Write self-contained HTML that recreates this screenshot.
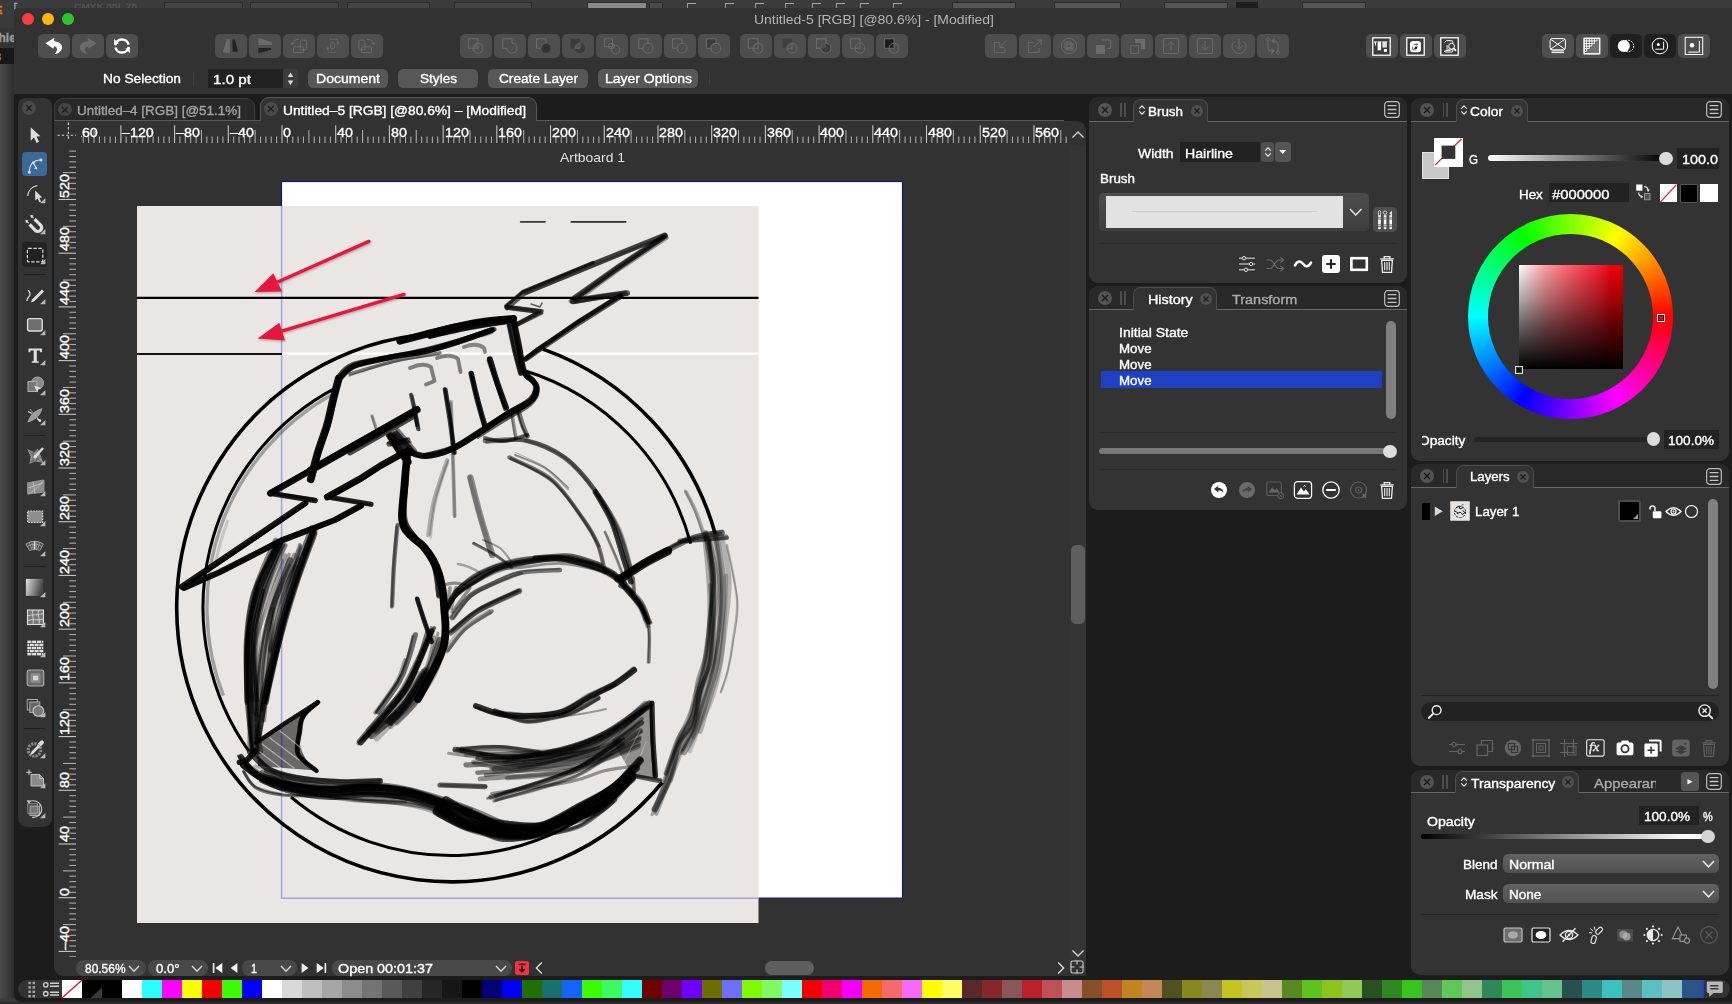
<!DOCTYPE html>
<html><head><meta charset="utf-8"><title>Untitled-5</title>
<style>
html,body{margin:0;padding:0;}
body{width:1732px;height:1004px;overflow:hidden;background:#3a3a3a;position:relative;
font-family:"Liberation Sans",sans-serif;}
div,span.t,svg{position:absolute;box-sizing:border-box;}
span.t{white-space:nowrap;display:block;-webkit-text-stroke:0.35px currentColor;}
svg{overflow:visible;}
.clip{overflow:hidden;}
</style></head><body>
<div style="left:0px;top:0px;width:1732px;height:9px;background:#3b3b3b;"></div>
<div style="left:164px;top:2px;width:79px;height:8px;background:#444;border:1px solid #2a2a2a;"></div>
<div style="left:250px;top:2px;width:89px;height:8px;background:#444;border:1px solid #2a2a2a;"></div>
<div style="left:347px;top:2px;width:83px;height:8px;background:#444;border:1px solid #2a2a2a;"></div>
<div style="left:454px;top:2px;width:78px;height:8px;background:#444;border:1px solid #2a2a2a;"></div>
<div style="left:587px;top:2px;width:60px;height:8px;background:#8a8a8a;border:1px solid #2a2a2a;"></div>
<div style="left:649px;top:2px;width:14px;height:8px;background:#4a4a4a;border:1px solid #2a2a2a;"></div>
<div style="left:952px;top:2px;width:64px;height:8px;background:#555;border:1px solid #2a2a2a;"></div>
<div style="left:1054px;top:2px;width:67px;height:8px;background:#555;border:1px solid #2a2a2a;"></div>
<div style="left:1164px;top:2px;width:64px;height:8px;background:#555;border:1px solid #2a2a2a;"></div>
<div style="left:1302px;top:2px;width:64px;height:8px;background:#555;border:1px solid #2a2a2a;"></div>
<div style="left:687px;top:3px;width:9px;height:6px;border-top:1px solid #aaa;border-left:1px solid #999;"></div>
<div style="left:725px;top:3px;width:9px;height:6px;border-top:1px solid #aaa;border-left:1px solid #999;"></div>
<div style="left:755px;top:3px;width:9px;height:6px;border-top:1px solid #aaa;border-left:1px solid #999;"></div>
<div style="left:785px;top:3px;width:9px;height:6px;border-top:1px solid #aaa;border-left:1px solid #999;"></div>
<div style="left:812px;top:3px;width:9px;height:6px;border-top:1px solid #aaa;border-left:1px solid #999;"></div>
<div style="left:836px;top:3px;width:9px;height:6px;border-top:1px solid #aaa;border-left:1px solid #999;"></div>
<div style="left:860px;top:3px;width:9px;height:6px;border-top:1px solid #aaa;border-left:1px solid #999;"></div>
<div style="left:893px;top:3px;width:9px;height:6px;border-top:1px solid #aaa;border-left:1px solid #999;"></div>
<div style="left:1236px;top:2px;width:22px;height:7px;background:#1e1e1e;"></div>
<span class="t" style="left:12px;top:1.88px;font-size:9px;line-height:9px;color:#9ab;">T</span>
<span class="t" style="left:74px;top:2.73px;font-size:8px;line-height:8px;color:#555;transform:scaleX(1.2758);transform-origin:0 0;">CMYK  55L 75</span>
<div style="left:0px;top:9px;width:14px;height:995px;background:linear-gradient(90deg,#4b4b4b 0%,#3a3a3a 55%,#2c2c2c 100%);"></div>
<div style="left:0px;top:0px;width:14px;height:28px;background:#3a3a3a;"></div>
<span class="t" style="left:-5px;top:4.69px;font-size:11px;line-height:11px;color:#e87a10;font-weight:bold;">E</span>
<div style="left:0px;top:28px;width:14px;height:20px;background:#353535;"></div>
<span class="t" style="left:-1.5px;top:31.84px;font-size:12px;line-height:12px;color:#9a9a9a;font-weight:bold;">hie</span>
<div style="left:0px;top:48px;width:14px;height:16px;background:#171717;"></div>
<span class="t" style="left:-5px;top:51.69px;font-size:11px;line-height:11px;color:#999;">3</span>
<div style="left:0px;top:998px;width:14px;height:6px;background:#3c3c3c;"></div>
<div style="left:0px;top:1001.5px;width:1732px;height:3px;background:#2c2c2c;"></div>
<div style="left:14px;top:8px;width:1730px;height:994px;background:#1c1c1c;border-radius:5px 0 0 7px;"></div>
<div style="left:14px;top:8px;width:1730px;height:86px;background:#323232;border-radius:5px 0 0 0;"></div>
<div style="left:22px;top:13px;width:12px;height:12px;background:#fc3b45;border-radius:6px;"></div>
<div style="left:42px;top:13px;width:12px;height:12px;background:#fdb416;border-radius:6px;"></div>
<div style="left:62px;top:13px;width:12px;height:12px;background:#2dc42f;border-radius:6px;"></div>
<span class="t" style="left:753.5px;top:12.60px;font-size:13px;line-height:13px;color:#b4b4b4;transform:scaleX(1.0740);transform-origin:0 0;-webkit-text-stroke:0;">Untitled-5 [RGB] [@80.6%] - [Modified]</span>
<div style="left:38px;top:34px;width:32px;height:24px;background:#4f4f4f;border-radius:5px;"></div>
<svg style="left:38px;top:34px;" width="32" height="24" viewBox="0 0 32 24"><path d="M7.6 9.3 L16.3 3.8 L16.1 7.2 C21 7.4 24.6 10.4 23.9 14.2 C23.3 17.4 20.3 19.6 16.4 20.3 C18.6 18.2 19.7 15.9 18.7 14.1 C18.1 13 17.2 12.5 16 12.3 L15.4 14.7 Z" fill="#ffffff"/></svg>
<div style="left:72px;top:34px;width:32px;height:24px;background:#4e4e4e;border-radius:5px;"></div>
<svg style="left:72px;top:34px;" width="32" height="24" viewBox="0 0 32 24"><path d="M24.4 9.3 L15.7 3.8 L15.9 7.2 C11 7.4 7.4 10.4 8.1 14.2 C8.7 17.4 11.7 19.6 15.6 20.3 C13.4 18.2 12.3 15.9 13.3 14.1 C13.9 13 14.8 12.5 16 12.3 L16.6 14.7 Z" fill="#6b6b6b"/></svg>
<div style="left:106px;top:34px;width:32px;height:24px;background:#4f4f4f;border-radius:5px;"></div>
<svg style="left:106px;top:34px;" width="32" height="24" viewBox="0 0 32 24"><path d="M9.3 11.2 A6.8 6.8 0 0 1 22.6 10.6" stroke="#ffffff" stroke-width="2.5" fill="none"/><path d="M22.7 12.9 A6.8 6.8 0 0 1 9.4 13.5" stroke="#ffffff" stroke-width="2.5" fill="none"/><path d="M8 5 L12.8 9.6 L8 10.2 Z M24 19.2 L19.3 14.6 L24 14 Z" fill="#ffffff"/></svg>
<div style="left:215px;top:34px;width:32px;height:24px;background:#4e4e4e;border-radius:5px;"></div>
<svg style="left:215px;top:34px;" width="32" height="24" viewBox="0 0 32 24"><path d="M11.7 5.1 H14.8 V19.2 L7.7 18.6 Z" fill="#6b6b6b"/><path d="M17.5 5.6 H19.9 L22.9 17.8 H17.5 Z" fill="#222"/></svg>
<div style="left:249px;top:34px;width:32px;height:24px;background:#4e4e4e;border-radius:5px;"></div>
<svg style="left:249px;top:34px;" width="32" height="24" viewBox="0 0 32 24"><path d="M9.3 3.9 L23 8.2 V11 H9.3 Z" fill="#6b6b6b"/><path d="M9.3 14.1 H22 V15.8 L9.3 19.2 Z" fill="#222"/></svg>
<div style="left:283px;top:34px;width:32px;height:24px;background:#4e4e4e;border-radius:5px;"></div>
<svg style="left:283px;top:34px;" width="32" height="24" viewBox="0 0 32 24"><rect x="17.4" y="6.2" width="6.1" height="9.6" rx="1.2" stroke="#6b6b6b" fill="none" stroke-width="1"/><rect x="10.5" y="12.8" width="10.2" height="5.8" rx="1.2" stroke="#6b6b6b" fill="none" stroke-width="1"/><path d="M15.9 5.3 C12 5.3 9.6 7.5 9.3 10.2" stroke="#6b6b6b" fill="none" stroke-width="1"/><path d="M7.7 8.4 L9.2 10.8 L11.2 8.6" stroke="#6b6b6b" fill="none" stroke-width="1"/></svg>
<div style="left:317px;top:34px;width:32px;height:24px;background:#4e4e4e;border-radius:5px;"></div>
<svg style="left:317px;top:34px;" width="32" height="24" viewBox="0 0 32 24"><rect x="13.7" y="8.7" width="3.6" height="6.1" rx="0.6" stroke="#6b6b6b" fill="none" stroke-width="1"/><path d="M12.9 5.3 H19 Q20.8 5.3 20.8 7 V9.5" stroke="#6b6b6b" fill="none" stroke-width="1" stroke-dasharray="2 0.8"/><path d="M19 8.6 L20.8 10.8 L22.6 8.6 Z" fill="#6b6b6b"/><path d="M18.5 18.4 H12.5 Q10.7 18.4 10.7 16.7 V14.2" stroke="#6b6b6b" fill="none" stroke-width="1" stroke-dasharray="2 0.8"/><path d="M8.9 15.1 L10.7 12.9 L12.5 15.1 Z" fill="#6b6b6b"/></svg>
<div style="left:351px;top:34px;width:32px;height:24px;background:#4e4e4e;border-radius:5px;"></div>
<svg style="left:351px;top:34px;" width="32" height="24" viewBox="0 0 32 24"><rect x="7.9" y="6.2" width="6.1" height="9.6" rx="1.2" stroke="#6b6b6b" fill="none" stroke-width="1"/><rect x="10.4" y="12.8" width="10.2" height="5.8" rx="1.2" stroke="#6b6b6b" fill="none" stroke-width="1"/><path d="M16 5.3 C20 5.3 22.3 7.5 22.6 10.2" stroke="#6b6b6b" fill="none" stroke-width="1"/><path d="M24.2 8.4 L22.7 10.8 L20.7 8.6" stroke="#6b6b6b" fill="none" stroke-width="1"/></svg>
<div style="left:460px;top:34px;width:32px;height:24px;background:#4e4e4e;border-radius:5px;"></div>
<svg style="left:460px;top:34px;" width="32" height="24" viewBox="0 0 32 24"><rect x="8.5" y="4.8" width="9.5" height="9.5" stroke="#6b6b6b" fill="none" stroke-width="1"/><circle cx="18" cy="14.2" r="5" stroke="#6b6b6b" fill="none" stroke-width="1"/><path d="M13 14.3 A5 5 0 0 1 18 9.2 V14.3 Z" fill="#6b6b6b" opacity=".5"/></svg>
<div style="left:494px;top:34px;width:32px;height:24px;background:#4e4e4e;border-radius:5px;"></div>
<svg style="left:494px;top:34px;" width="32" height="24" viewBox="0 0 32 24"><path d="M8.5 4.8 H18 V9.2 A5 5 0 1 1 13 14.3 H8.5 Z" stroke="#6b6b6b" fill="none" stroke-width="1"/></svg>
<div style="left:528px;top:34px;width:32px;height:24px;background:#4e4e4e;border-radius:5px;"></div>
<svg style="left:528px;top:34px;" width="32" height="24" viewBox="0 0 32 24"><path d="M8.5 4.8 H18 V9.2 A5 5 0 0 0 13 14.3 H8.5 Z" stroke="#6b6b6b" fill="none" stroke-width="1"/><circle cx="18" cy="14.2" r="4.6" fill="#333"/></svg>
<div style="left:562px;top:34px;width:32px;height:24px;background:#4e4e4e;border-radius:5px;"></div>
<svg style="left:562px;top:34px;" width="32" height="24" viewBox="0 0 32 24"><rect x="8.5" y="4.8" width="9.5" height="9.5" fill="#3a3a3a"/><circle cx="18" cy="14.2" r="5" fill="#3a3a3a"/><path d="M13 14.3 A5 5 0 0 1 18 9.2 V14.3 Z" fill="#4f4f4f" stroke="#6b6b6b" stroke-width=".8"/></svg>
<div style="left:596px;top:34px;width:32px;height:24px;background:#4e4e4e;border-radius:5px;"></div>
<svg style="left:596px;top:34px;" width="32" height="24" viewBox="0 0 32 24"><rect x="8.5" y="4.8" width="8" height="8" stroke="#6b6b6b" fill="none" stroke-width="1"/><circle cx="19.5" cy="15.5" r="4.3" stroke="#6b6b6b" fill="none" stroke-width="1"/><rect x="12.5" y="9.5" width="6" height="5" rx="2.3" stroke="#6b6b6b" fill="none" stroke-width="1"/></svg>
<div style="left:630px;top:34px;width:32px;height:24px;background:#4e4e4e;border-radius:5px;"></div>
<svg style="left:630px;top:34px;" width="32" height="24" viewBox="0 0 32 24"><path d="M18 9.2 V4.8 H8.5 V14.3 H13" stroke="#6b6b6b" fill="none" stroke-width="1"/><circle cx="18" cy="14.2" r="5" stroke="#6b6b6b" fill="none" stroke-width="1"/></svg>
<div style="left:664px;top:34px;width:32px;height:24px;background:#4e4e4e;border-radius:5px;"></div>
<svg style="left:664px;top:34px;" width="32" height="24" viewBox="0 0 32 24"><path d="M18 9.2 V4.8 H8.5 V14.3 H13" stroke="#6b6b6b" fill="none" stroke-width="1"/><circle cx="18" cy="14.2" r="5" stroke="#6b6b6b" fill="none" stroke-width="1"/></svg>
<div style="left:698px;top:34px;width:32px;height:24px;background:#4e4e4e;border-radius:5px;"></div>
<svg style="left:698px;top:34px;" width="32" height="24" viewBox="0 0 32 24"><path d="M18 9.2 V4.8 H8.5 V14.3 H13 A5 5 0 0 1 18 9.2Z" fill="#3c3c3c" stroke="#6b6b6b" stroke-width="1"/><circle cx="18" cy="14.2" r="5" stroke="#6b6b6b" fill="none" stroke-width="1"/></svg>
<div style="left:740px;top:34px;width:32px;height:24px;background:#4e4e4e;border-radius:5px;"></div>
<svg style="left:740px;top:34px;" width="32" height="24" viewBox="0 0 32 24"><rect x="8.5" y="4.8" width="9.5" height="9.5" fill="#484848" stroke="#6b6b6b" stroke-width="1"/><circle cx="18" cy="14.2" r="5" stroke="#6b6b6b" fill="none" stroke-width="1"/><path d="M13.6 14.3 A4.4 4.4 0 0 1 18 9.8" stroke="#6b6b6b" fill="none" stroke-width="1"/></svg>
<div style="left:774px;top:34px;width:32px;height:24px;background:#4e4e4e;border-radius:5px;"></div>
<svg style="left:774px;top:34px;" width="32" height="24" viewBox="0 0 32 24"><rect x="8.5" y="4.8" width="9.5" height="9.5" fill="#3f3f3f"/><circle cx="18" cy="14.2" r="5" fill="#4f4f4f" stroke="#6b6b6b" stroke-width="1"/><path d="M13 14.3 H18 V9.2" stroke="#6b6b6b" fill="none" stroke-width="1"/></svg>
<div style="left:808px;top:34px;width:32px;height:24px;background:#4e4e4e;border-radius:5px;"></div>
<svg style="left:808px;top:34px;" width="32" height="24" viewBox="0 0 32 24"><rect x="8.5" y="4.8" width="9.5" height="9.5" stroke="#6b6b6b" fill="none" stroke-width="1"/><circle cx="18" cy="14.2" r="5" fill="#3a3a3a" stroke="#6b6b6b" stroke-width="1"/><path d="M13 14.3 H8.5 V4.8 H18 V9.2" stroke="#6b6b6b" fill="none" stroke-width="1"/><path d="M13 14.3 A5 5 0 0 1 18 9.2 V14.3Z" fill="#4f4f4f"/></svg>
<div style="left:842px;top:34px;width:32px;height:24px;background:#4e4e4e;border-radius:5px;"></div>
<svg style="left:842px;top:34px;" width="32" height="24" viewBox="0 0 32 24"><rect x="8.5" y="4.8" width="9.5" height="9.5" stroke="#6b6b6b" fill="none" stroke-width="1"/><circle cx="18" cy="14.2" r="5" stroke="#6b6b6b" fill="none" stroke-width="1"/></svg>
<div style="left:876px;top:34px;width:32px;height:24px;background:#4e4e4e;border-radius:5px;"></div>
<svg style="left:876px;top:34px;" width="32" height="24" viewBox="0 0 32 24"><rect x="8.5" y="4.8" width="9.5" height="9.5" fill="#1c1c1c" stroke="#6b6b6b" stroke-width="1"/><circle cx="18" cy="14.2" r="5" stroke="#6b6b6b" fill="none" stroke-width="1"/></svg>
<div style="left:985px;top:34px;width:32px;height:24px;background:#4e4e4e;border-radius:5px;"></div>
<svg style="left:985px;top:34px;" width="32" height="24" viewBox="0 0 32 24"><path d="M14.6 8.6 H9.3 V18.6 H20 V14" stroke="#6b6b6b" fill="none" stroke-width="1" stroke-width="1.5"/><path d="M21.8 6.4 L15 13.4 M14.8 9.2 V13.6 H19.2" stroke="#6b6b6b" fill="none" stroke-width="1" stroke-width="1.5"/></svg>
<div style="left:1019px;top:34px;width:32px;height:24px;background:#4e4e4e;border-radius:5px;"></div>
<svg style="left:1019px;top:34px;" width="32" height="24" viewBox="0 0 32 24"><path d="M14.6 8.6 H9.3 V18.6 H20 V14" stroke="#6b6b6b" fill="none" stroke-width="1" stroke-width="1.5"/><path d="M15 13.2 L22 6.2 M17.6 6 H22.2 V10.6" stroke="#6b6b6b" fill="none" stroke-width="1" stroke-width="1.5"/></svg>
<div style="left:1053px;top:34px;width:32px;height:24px;background:#4e4e4e;border-radius:5px;"></div>
<svg style="left:1053px;top:34px;" width="32" height="24" viewBox="0 0 32 24"><circle cx="16" cy="12" r="7.6" stroke="#6b6b6b" fill="none" stroke-width="1"/><rect x="12" y="8" width="6" height="6" stroke="#6b6b6b" fill="none" stroke-width="1"/><rect x="14" y="10" width="6" height="6" stroke="#6b6b6b" fill="none" stroke-width="1"/><path d="M12 10 H20 M14 8 V16 M18 8 V16 M12 14 H20" stroke="#6b6b6b" fill="none" stroke-width="1" stroke-width=".6"/></svg>
<div style="left:1087px;top:34px;width:32px;height:24px;background:#4e4e4e;border-radius:5px;"></div>
<svg style="left:1087px;top:34px;" width="32" height="24" viewBox="0 0 32 24"><rect x="9" y="11" width="9" height="9" fill="#6b6b6b"/><path d="M15 6 H23.5 V14.5 H20.5" stroke="#6b6b6b" fill="none" stroke-width="1" stroke-width="1.6"/></svg>
<div style="left:1121px;top:34px;width:32px;height:24px;background:#4e4e4e;border-radius:5px;"></div>
<svg style="left:1121px;top:34px;" width="32" height="24" viewBox="0 0 32 24"><rect x="9.8" y="11.8" width="7.6" height="7.6" stroke="#6b6b6b" fill="none" stroke-width="1" stroke-width="1.6"/><path d="M14 5 H24 V15 H20 V9 H14 Z" fill="#6b6b6b"/></svg>
<div style="left:1155px;top:34px;width:32px;height:24px;background:#4e4e4e;border-radius:5px;"></div>
<svg style="left:1155px;top:34px;" width="32" height="24" viewBox="0 0 32 24"><rect x="8.5" y="4.5" width="15" height="15" rx="1.5" stroke="#6b6b6b" fill="none" stroke-width="1" stroke-width="1.5"/><path d="M16 17 V8 M12.3 11.5 L16 7.7 L19.7 11.5" stroke="#6b6b6b" fill="none" stroke-width="1" stroke-width="1.5"/></svg>
<div style="left:1189px;top:34px;width:32px;height:24px;background:#4e4e4e;border-radius:5px;"></div>
<svg style="left:1189px;top:34px;" width="32" height="24" viewBox="0 0 32 24"><rect x="8.5" y="4.5" width="15" height="15" rx="1.5" stroke="#6b6b6b" fill="none" stroke-width="1" stroke-width="1.5"/><path d="M16 7 V16 M12.3 12.5 L16 16.3 L19.7 12.5" stroke="#6b6b6b" fill="none" stroke-width="1" stroke-width="1.5"/></svg>
<div style="left:1223px;top:34px;width:32px;height:24px;background:#4e4e4e;border-radius:5px;"></div>
<svg style="left:1223px;top:34px;" width="32" height="24" viewBox="0 0 32 24"><path d="M11.5 7.2 A7 7 0 1 0 20.5 7.2" stroke="#6b6b6b" fill="none" stroke-width="1" stroke-width="1.6"/><path d="M16 5 V15 M12.3 11.5 L16 15.3 L19.7 11.5" stroke="#6b6b6b" fill="none" stroke-width="1" stroke-width="1.6"/></svg>
<div style="left:1257px;top:34px;width:32px;height:24px;background:#4e4e4e;border-radius:5px;"></div>
<svg style="left:1257px;top:34px;" width="32" height="24" viewBox="0 0 32 24"><circle cx="11" cy="5.5" r="1.5" stroke="#6b6b6b" fill="none" stroke-width="1"/><circle cx="21" cy="18.5" r="1.5" stroke="#6b6b6b" fill="none" stroke-width="1"/><path d="M11 7 V14 Q11 17 14 17 H16 M21 17 V10 Q21 7 18 7 H16" stroke="#6b6b6b" fill="none" stroke-width="1" stroke-width="2.2"/><path d="M14.6 14 L18 17 L14.6 20 Z M17.4 4 L14 7 L17.4 10 Z" fill="#6b6b6b"/></svg>
<div style="left:1366px;top:34px;width:32px;height:24px;background:#4f4f4f;border-radius:5px;"></div>
<svg style="left:1366px;top:34px;" width="32" height="24" viewBox="0 0 32 24"><rect x="6.8" y="3.8" width="17.4" height="17.4" fill="#3a3a3a" stroke="#ffffff" stroke-width="1.3"/><path d="M8.4 7.7 H10.4 L9.6 12.5 Z" fill="#ffffff"/><rect x="11.6" y="7.7" width="3.5" height="8.6" fill="#ffffff"/><rect x="16.3" y="7.7" width="4.6" height="5.8" fill="#ffffff" opacity=".85"/><rect x="17.9" y="15" width="3.1" height="2.9" fill="#ffffff"/><path d="M8 7.4 H21.6" stroke="#ffffff" stroke-width=".7" opacity=".7"/></svg>
<div style="left:1400px;top:34px;width:32px;height:24px;background:#4f4f4f;border-radius:5px;"></div>
<svg style="left:1400px;top:34px;" width="32" height="24" viewBox="0 0 32 24"><rect x="6.8" y="3.8" width="17.4" height="17.4" fill="#3a3a3a" stroke="#ffffff" stroke-width="1.3"/><rect x="10" y="7" width="11" height="11.2" rx="3" fill="#ffffff"/><path d="M13.5 10.4 H17.6 M16.6 9.4 L17.8 10.4 L16.6 11.4" stroke="#333" stroke-width=".8" fill="none"/><path d="M12.6 12.4 V15.8 H16.5" stroke="#333" stroke-width=".7" fill="none"/><path d="M14 15 L15.3 12.6 H17.8 L16.6 15 Z" fill="#222"/></svg>
<div style="left:1434px;top:34px;width:32px;height:24px;background:#4f4f4f;border-radius:5px;"></div>
<svg style="left:1434px;top:34px;" width="32" height="24" viewBox="0 0 32 24"><rect x="6.8" y="3.8" width="17.4" height="17.4" fill="#3a3a3a" stroke="#ffffff" stroke-width="1.3"/><path d="M10.5 8.5 L12.5 6.7 H17.8 Q18.8 6.7 18.8 7.7 V9 M18.8 15.5 V17 Q18.8 18 17.8 18 H11.5 Q10.5 18 10.5 17 Z" stroke="#ffffff" fill="none" stroke-width="1" stroke-width=".9"/><path d="M12.3 12 H14 M12.3 14 H14.5 M12.3 16 H16.5" stroke="#ffffff" fill="none" stroke-width="1" stroke-width=".9"/><circle cx="17.6" cy="12.2" r="2.9" stroke="#ffffff" fill="none" stroke-width="1" stroke-width=".9"/><path d="M19.7 14.4 L22 16.9" stroke="#ffffff" stroke-width="1.6"/></svg>
<div style="left:1542px;top:34px;width:32px;height:24px;background:#4f4f4f;border-radius:5px;"></div>
<svg style="left:1542px;top:34px;" width="32" height="24" viewBox="0 0 32 24"><rect x="8.1" y="4.6" width="15.3" height="11.2" rx="2" stroke="#ffffff" fill="none" stroke-width="1"/><path d="M8.6 5.2 L22.9 15.2 M22.9 5.2 L8.6 15.2" stroke="#ffffff" fill="none" stroke-width="1" stroke-width=".9"/><path d="M9.5 16.9 H22 M9.5 18.6 H22" stroke="#ffffff" fill="none" stroke-width="1" stroke-width=".8"/></svg>
<div style="left:1576px;top:34px;width:32px;height:24px;background:#4f4f4f;border-radius:5px;"></div>
<svg style="left:1576px;top:34px;" width="32" height="24" viewBox="0 0 32 24"><rect x="8.1" y="4.3" width="15.6" height="15.5" fill="#555" stroke="#ffffff" stroke-width="1.2"/><path d="M8.1 4.3 V19.8 M8.1 4.3 H23.7" stroke="#ffffff" fill="none" stroke-width="1" stroke-width=".9"/><path d="M10.7 4.3 V17.2 M8.1 6.9 H21.1" stroke="#ffffff" fill="none" stroke-width="1" stroke-width=".9"/><path d="M13.3 4.3 V14.6 M8.1 9.5 H18.5" stroke="#ffffff" fill="none" stroke-width="1" stroke-width=".9"/><path d="M15.9 4.3 V12.0 M8.1 12.1 H15.9" stroke="#ffffff" fill="none" stroke-width="1" stroke-width=".9"/><path d="M18.5 4.3 V9.4 M8.1 14.7 H13.3" stroke="#ffffff" fill="none" stroke-width="1" stroke-width=".9"/><path d="M21.1 4.3 V6.8 M8.1 17.3 H10.7" stroke="#ffffff" fill="none" stroke-width="1" stroke-width=".9"/><path d="M23.7 4.3 V19.8 H8.1" stroke="#ffffff" fill="none" stroke-width="1" stroke-width="1.2"/><path d="M23 5.5 L9.5 19 H23 Z" fill="#8a8a8a" opacity=".55"/></svg>
<div style="left:1610px;top:34px;width:32px;height:24px;background:#1f1f1f;border-radius:5px;"></div>
<svg style="left:1610px;top:34px;" width="32" height="24" viewBox="0 0 32 24"><circle cx="17.9" cy="12" r="5.8" stroke="#ffffff" fill="none" stroke-width="1" stroke-dasharray="1.8 1.2"/><circle cx="13.8" cy="12" r="6.1" fill="#ffffff"/></svg>
<div style="left:1644px;top:34px;width:32px;height:24px;background:#1f1f1f;border-radius:5px;"></div>
<svg style="left:1644px;top:34px;" width="32" height="24" viewBox="0 0 32 24"><circle cx="15.9" cy="12" r="7.8" stroke="#ffffff" fill="none" stroke-width="1" stroke-width="1"/><circle cx="14.3" cy="10.5" r="1.5" fill="#ffffff"/><path d="M19.6 7.6 V15.2 H11.3" stroke="#ffffff" fill="none" stroke-width="1" stroke-width=".9"/></svg>
<div style="left:1678px;top:34px;width:32px;height:24px;background:#4f4f4f;border-radius:5px;"></div>
<svg style="left:1678px;top:34px;" width="32" height="24" viewBox="0 0 32 24"><rect x="7.2" y="3.3" width="17.5" height="17.2" stroke="#ffffff" fill="none" stroke-width="1" stroke-width="1.2"/><circle cx="14" cy="11.2" r="2.2" fill="#ffffff"/><path d="M21.4 6.9 V18.1 H10.3" stroke="#ffffff" fill="none" stroke-width="1" stroke-width="1"/></svg>
<span class="t" style="left:102.5px;top:71.80px;font-size:13px;line-height:13px;color:#fff;transform:scaleX(1.0582);transform-origin:0 0;">No Selection</span>
<div style="left:193px;top:72px;width:1px;height:14px;background:#3e3e3e;"></div>
<div style="left:208px;top:68.5px;width:75px;height:19.5px;background:#222222;"></div>
<span class="t" style="left:213px;top:72.60px;font-size:13px;line-height:13px;color:#fff;transform:scaleX(1.1683);transform-origin:0 0;">1.0 pt</span>
<div style="left:283px;top:68.5px;width:15px;height:19.5px;background:#3c3c3c;border-radius:0 3px 3px 0;"></div>
<svg style="left:283px;top:68.5px;" width="15" height="19.5" viewBox="0 0 15 19.5"><path d="M7.5 3.6 L10.3 8 H4.7 Z M7.5 16 L10.3 11.6 H4.7 Z" fill="#ddd"/></svg>
<div style="left:308px;top:68.5px;width:80px;height:19.5px;background:#575757;border-radius:5.5px;"></div>
<span class="t" style="left:316px;top:71.80px;font-size:13px;line-height:13px;color:#fff;transform:scaleX(1.0801);transform-origin:0 0;">Document</span>
<div style="left:398px;top:68.5px;width:80px;height:19.5px;background:#575757;border-radius:5.5px;"></div>
<span class="t" style="left:419.5px;top:71.80px;font-size:13px;line-height:13px;color:#fff;transform:scaleX(1.0451);transform-origin:0 0;">Styles</span>
<div style="left:488px;top:68.5px;width:100px;height:19.5px;background:#575757;border-radius:5.5px;"></div>
<span class="t" style="left:498.5px;top:71.80px;font-size:13px;line-height:13px;color:#fff;transform:scaleX(1.0512);transform-origin:0 0;">Create Layer</span>
<div style="left:598px;top:68.5px;width:100px;height:19.5px;background:#575757;border-radius:5.5px;"></div>
<span class="t" style="left:604.5px;top:71.80px;font-size:13px;line-height:13px;color:#fff;transform:scaleX(1.0749);transform-origin:0 0;">Layer Options</span>
<div style="left:709px;top:72px;width:1px;height:13px;background:#3e3e3e;"></div>
<div style="left:18px;top:97.5px;width:34px;height:729.3px;background:#333333;border-radius:8px 8px 9px 9px;"></div>
<div style="left:22px;top:101px;width:14px;height:14px;background:#4b4b4b;border-radius:7px;"></div>
<svg style="left:22px;top:101px;" width="14" height="14" viewBox="0 0 14 14"><path d="M4.3 4.3 L9.7 9.7 M9.7 4.3 L4.3 9.7" stroke="#1a1a1a" stroke-width="1.3" fill="none"/></svg>
<svg style="left:21px;top:122px;" width="28" height="26" viewBox="0 0 28 26"><path d="M9.7 5.2 L9.7 18.7 L13 15.6 L15.6 21 L18 19.8 L15.5 14.6 L19.4 14.3 Z" fill="#dedede"/></svg>
<div style="left:22px;top:152px;width:25px;height:24px;background:#3a6a9a;border-radius:4px;"></div>
<svg style="left:21px;top:151px;" width="28" height="26" viewBox="0 0 28 26"><path d="M8.3 21.3 C8.3 14 12 9.5 19.5 9" stroke="#dedede" fill="none" stroke-width="1.2" stroke-width="1.4"/><path d="M11.5 10.6 L16 18.2" stroke="#dedede" fill="none" stroke-width="1.2" stroke-width="1.2"/><rect x="7" y="20" width="2.6" height="2.6" fill="#dedede"/><rect x="18.6" y="7.7" width="2.6" height="2.6" fill="#dedede"/><path d="M11.5 10.6 L14.5 11 L12.2 13.2 Z M16 18.2 L13 17.6 L15.5 15.6 Z" fill="#dedede"/></svg>
<svg style="left:21px;top:181px;" width="28" height="26" viewBox="0 0 28 26"><path d="M6.7 15 C7 9.5 11 5.5 16.5 4.5" stroke="#dedede" fill="none" stroke-width="1.2"/><path d="M14.2 9.5 V19.6 L16.6 17.4 L18.4 21.2 L20.1 20.4 L18.3 16.7 L21.2 16.4 Z" fill="#dedede"/><path d="M24.4 16.9 V22.3 H19 Z" fill="#b8b8b8"/></svg>
<svg style="left:21px;top:212px;" width="28" height="26" viewBox="0 0 28 26"><path d="M8.6 12.4 L14.3 18.3 A3.6 3.6 0 0 0 19.6 13.2 L13.6 7.2" stroke="#dedede" stroke-width="3.3" fill="none"/><path d="M7.6 11.2 L5.6 9.2 M12.6 6.2 L10.6 4.2" stroke="#dedede" fill="none" stroke-width="1.2" stroke-width="1"/><path d="M4.3 7.8 L7.6 8.6 L5 11.2 Z M9.3 2.8 L12.6 3.6 L10 6.2 Z" fill="#dedede"/><path d="M24.4 16.9 V22.3 H19 Z" fill="#b8b8b8"/></svg>
<div style="left:22px;top:242px;width:25px;height:25px;background:#222;border-radius:4px;"></div>
<svg style="left:21px;top:242px;" width="28" height="26" viewBox="0 0 28 26"><rect x="6.4" y="6.3" width="15.4" height="13.5" rx="1" stroke="#dedede" fill="none" stroke-width="1.2" stroke-width="1.5" stroke-dasharray="3.3 1.7"/><path d="M24.4 16.9 V22.3 H19 Z" fill="#b8b8b8"/></svg>
<svg style="left:21px;top:282px;" width="28" height="26" viewBox="0 0 28 26"><path d="M11 17.5 L21 7.5 L23 9.5 L13 19.5 L10 20.5 Z" fill="#dedede"/><path d="M6 19 C6 14 9 16 9 12 C9 10 7.5 9.5 7.5 8" stroke="#dedede" fill="none" stroke-width="1.2" stroke-width="1"/><path d="M24.4 16.9 V22.3 H19 Z" fill="#b8b8b8"/></svg>
<svg style="left:21px;top:313px;" width="28" height="26" viewBox="0 0 28 26"><rect x="6.6" y="5.6" width="14.6" height="12.4" rx="2" fill="#6e6e6e" stroke="#dedede" stroke-width="1.4"/><path d="M24.4 16.9 V22.3 H19 Z" fill="#b8b8b8"/></svg>
<svg style="left:21px;top:343px;" width="28" height="26" viewBox="0 0 28 26"><path d="M7.5 5.5 H21 V9.3 H19.4 L18.8 7.4 H15.8 V18 L17.8 18.6 V19.8 H10.7 V18.6 L12.7 18 V7.4 H9.7 L9.1 9.3 H7.5 Z" fill="#dedede"/><path d="M24.4 16.9 V22.3 H19 Z" fill="#b8b8b8"/></svg>
<svg style="left:21px;top:373px;" width="28" height="26" viewBox="0 0 28 26"><circle cx="16.5" cy="10" r="6" fill="#8a8a8a" stroke="#b0b0b0" stroke-width="1"/><rect x="7" y="8.5" width="9" height="10" fill="#777" stroke="#b0b0b0" stroke-width="1"/><path d="M13 12.5 L20.5 15.3 L17.3 16.3 L16.3 19.6 Z" fill="#dedede"/><path d="M24.4 16.9 V22.3 H19 Z" fill="#b8b8b8"/></svg>
<svg style="left:21px;top:403px;" width="28" height="26" viewBox="0 0 28 26"><path d="M6.5 19.5 C8 13 13 7 21.5 5 C20 13 14 17.5 6.5 19.5 Z" fill="#9c9c9c"/><path d="M9 6 L20 19" stroke="#9a9a9a" fill="none" stroke-width="1"/><path d="M7 8.5 L11 10.5 M16 15.5 L19 17.8" stroke="#dedede" fill="none" stroke-width="1.2" stroke-width="1"/><circle cx="18.8" cy="17.6" r="1.4" fill="#dedede"/><path d="M24.4 16.9 V22.3 H19 Z" fill="#b8b8b8"/></svg>
<svg style="left:21px;top:443px;" width="28" height="26" viewBox="0 0 28 26"><path d="M6 6 L13 9 L17 5.5 L19.5 12 L22.5 20 L14 18.5 L8.5 21 L9.5 13 Z" fill="#8e8e8e"/><path d="M8 8 L20 19 M7 13 L17 7 M9 19 L21 14 M12 7 L12 20 M17 8 L15 20" stroke="#555" stroke-width=".6" fill="none"/><path d="M14.5 13.5 L22 5" stroke="#dedede" stroke-width="2.4"/><circle cx="14.3" cy="13.8" r="1.8" fill="#dedede"/><path d="M24.4 16.9 V22.3 H19 Z" fill="#b8b8b8"/></svg>
<svg style="left:21px;top:474px;" width="28" height="26" viewBox="0 0 28 26"><path d="M6 8.5 L22 5.5 Q23.5 5.5 23.5 7 V17 Q23.5 18.5 22 18.8 L7.5 20.5 Q6 20.5 6 19 Z" fill="#8e8e8e"/><path d="M7 19.5 C12 18 17 13 22.5 6.5 M7 14 L22 9 M12 7.5 L14 19.5" stroke="#c5c5c5" stroke-width=".8" fill="none"/><path d="M24.4 16.9 V22.3 H19 Z" fill="#b8b8b8"/></svg>
<svg style="left:21px;top:504px;" width="28" height="26" viewBox="0 0 28 26"><rect x="6.6" y="7" width="15" height="11.5" fill="#8e8e8e"/><rect x="6.6" y="7" width="15" height="11.5" stroke="#dedede" fill="none" stroke-width="1.2" stroke-width="1.1" stroke-dasharray="1.6 1.2"/><path d="M24.4 16.9 V22.3 H19 Z" fill="#b8b8b8"/></svg>
<svg style="left:21px;top:534px;" width="28" height="26" viewBox="0 0 28 26"><path d="M4.9 10 Q13.6 4.4 22.4 10 L18.9 16.4 Q13.6 14 8.5 16.4 Z" fill="#4a4a4a" stroke="#a8a8a8" stroke-width=".9"/><path d="M8 8.2 L10.8 15.2 M10.8 7.4 L12.2 14.8 M16.4 7.4 L15 14.8 M19.2 8.2 L16.4 15.2 M6.3 12.6 Q13.6 7.6 21 12.6" stroke="#a8a8a8" stroke-width=".8" fill="none"/><path d="M13.6 7.2 V15.4" stroke="#dedede" stroke-width="1.5"/><path d="M24.4 16.9 V22.3 H19 Z" fill="#b8b8b8"/></svg>
<svg style="left:21px;top:575px;" width="28" height="26" viewBox="0 0 28 26"><defs><linearGradient id="gtool" x1="0" y1="0" x2="1" y2="0.25"><stop offset="0" stop-color="#e2e2e2"/><stop offset="1" stop-color="#444"/></linearGradient></defs><rect x="4.9" y="3.9" width="17.2" height="17" fill="url(#gtool)"/><path d="M24.4 16.9 V22.3 H19 Z" fill="#b8b8b8"/></svg>
<svg style="left:21px;top:605px;" width="28" height="26" viewBox="0 0 28 26"><rect x="6.5" y="5" width="16" height="14.5" fill="#777" stroke="#dedede" stroke-width="1.1"/><path d="M6.5 11 C11 9 17 10.5 22.5 8.5 M6.5 15.5 C12 13.5 17 16 22.5 14 M11.5 5 C10.5 10 13.5 14 12 19.5 M17.5 5 C16 10 19.5 14 18 19.5" stroke="#dedede" stroke-width=".8" fill="none"/><path d="M24.4 16.9 V22.3 H19 Z" fill="#b8b8b8"/></svg>
<svg style="left:21px;top:635px;" width="28" height="26" viewBox="0 0 28 26"><rect x="6.3" y="5.6" width="4.1" height="2.4" fill="#dedede"/><rect x="11.1" y="5.6" width="4.1" height="2.4" fill="#dedede"/><rect x="15.9" y="5.6" width="4.1" height="2.4" fill="#dedede"/><rect x="20.7" y="5.6" width="1.6" height="2.4" fill="#dedede"/><rect x="6.3" y="8.7" width="1.7" height="2.4" fill="#dedede"/><rect x="8.7" y="8.7" width="4.1" height="2.4" fill="#dedede"/><rect x="13.5" y="8.7" width="4.1" height="2.4" fill="#dedede"/><rect x="18.3" y="8.7" width="4.0" height="2.4" fill="#dedede"/><rect x="6.3" y="11.8" width="4.1" height="2.4" fill="#dedede"/><rect x="11.1" y="11.8" width="4.1" height="2.4" fill="#dedede"/><rect x="15.9" y="11.8" width="4.1" height="2.4" fill="#dedede"/><rect x="20.7" y="11.8" width="1.6" height="2.4" fill="#dedede"/><rect x="6.3" y="14.9" width="1.7" height="2.4" fill="#dedede"/><rect x="8.7" y="14.9" width="4.1" height="2.4" fill="#dedede"/><rect x="13.5" y="14.9" width="4.1" height="2.4" fill="#dedede"/><rect x="18.3" y="14.9" width="4.0" height="2.4" fill="#dedede"/><rect x="6.3" y="18.0" width="4.1" height="2.4" fill="#dedede"/><rect x="11.1" y="18.0" width="4.1" height="2.4" fill="#dedede"/><rect x="15.9" y="18.0" width="4.1" height="2.4" fill="#dedede"/><rect x="20.7" y="18.0" width="1.6" height="2.4" fill="#dedede"/><path d="M24.4 16.9 V22.3 H19 Z" fill="#b8b8b8"/></svg>
<svg style="left:21px;top:665px;" width="28" height="26" viewBox="0 0 28 26"><rect x="6.2" y="5" width="16.5" height="16" rx="2.2" fill="#6a6a6a" stroke="#a8a8a8" stroke-width="1.2"/><rect x="9.5" y="8.3" width="10" height="9.5" rx="1.5" fill="#8c8c8c"/><rect x="12" y="10.7" width="5" height="4.6" fill="#d8d8d8"/></svg>
<svg style="left:21px;top:695px;" width="28" height="26" viewBox="0 0 28 26"><rect x="6.3" y="4.5" width="10" height="10.5" fill="none" stroke="#aaa" stroke-width="1"/><rect x="8.8" y="7" width="10" height="10.5" fill="#666" stroke="#aaa" stroke-width="1"/><circle cx="17.3" cy="16" r="5.3" fill="#7a7a7a" stroke="#c8c8c8" stroke-width="1.1"/><path d="M24.4 16.9 V22.3 H19 Z" fill="#b8b8b8"/></svg>
<svg style="left:21px;top:736px;" width="28" height="26" viewBox="0 0 28 26"><circle cx="13.5" cy="14" r="6.3" fill="none" stroke="#8a8a8a" stroke-width="3" stroke-dasharray="2.2 1"/><path d="M9.5 18.5 L10.3 15.8 L17.3 8.8 L19.2 10.7 L12.2 17.7 Z" fill="#dedede"/><path d="M17 7.5 L19.8 4.7 Q21.4 3.8 22.5 5.2 Q23.5 6.6 22.4 7.7 L19.7 10.4 Z" fill="#dedede"/><path d="M24.4 16.9 V22.3 H19 Z" fill="#b8b8b8"/></svg>
<svg style="left:21px;top:766px;" width="28" height="26" viewBox="0 0 28 26"><path d="M10 8.5 H18.5 L22.5 12.5 V20 H10 Z" fill="#8a8a8a" stroke="#bdbdbd" stroke-width="1"/><path d="M18.5 8.5 V12.5 H22.5" stroke="#bdbdbd" stroke-width="1" fill="none"/><path d="M8 3.5 V9 M5.2 6.3 H10.8" stroke="#cfcfcf" stroke-width="1"/><path d="M24.4 16.9 V22.3 H19 Z" fill="#b8b8b8"/></svg>
<svg style="left:21px;top:796px;" width="28" height="26" viewBox="0 0 28 26"><rect x="9" y="10" width="9.5" height="9.5" fill="#777" stroke="#aaa" stroke-width="1"/><rect x="6.8" y="7.8" width="9.5" height="9.5" fill="none" stroke="#9a9a9a" stroke-width=".9"/><path d="M8 6 A8.3 8.3 0 1 1 11 21.3" stroke="#c8c8c8" stroke-width="1.2" fill="none"/><path d="M5.5 4.2 L9.6 4.5 L8.2 8.2 Z" fill="#c8c8c8"/><path d="M24.4 16.9 V22.3 H19 Z" fill="#b8b8b8"/></svg>
<div style="left:24px;top:274.2px;width:21px;height:1px;background:#1f1f1f;"></div>
<div style="left:24px;top:435.2px;width:21px;height:1px;background:#1f1f1f;"></div>
<div style="left:24px;top:566.2px;width:21px;height:1px;background:#1f1f1f;"></div>
<div style="left:24px;top:727.6px;width:21px;height:1px;background:#1f1f1f;"></div>
<div style="left:54px;top:120.5px;width:1032px;height:855.5px;background:#323232;border-radius:0 9px 0 9px;"></div>
<div style="left:54px;top:97.8px;width:201px;height:23px;background:#282828;border-radius:9px 9px 0 0;border:1px solid #3d3d3d;border-bottom:none;"></div>
<div style="left:58px;top:102.6px;width:13.6px;height:13.6px;background:#454545;border-radius:6.8px;"></div>
<svg style="left:58px;top:102.6px;" width="13.6" height="13.6" viewBox="0 0 13.6 13.6"><path d="M3.94 3.94 L9.66 9.66 M9.66 3.94 L3.94 9.66" stroke="#1c1c1c" stroke-width="1.3" fill="none"/></svg>
<span class="t" style="left:77px;top:103.60px;font-size:13px;line-height:13px;color:#a3a3a3;transform:scaleX(1.0351);transform-origin:0 0;">Untitled–4 [RGB] [@51.1%]</span>
<div style="left:54px;top:120px;width:1010px;height:1.2px;background:#5a5a5a;"></div>
<div style="left:260px;top:96.8px;width:277px;height:24.7px;background:#323232;border-radius:9px 9px 0 0;border:1.2px solid #575757;border-bottom:none;"></div>
<div style="left:264px;top:102.4px;width:13.6px;height:13.6px;background:#4a4a4a;border-radius:6.8px;"></div>
<svg style="left:264px;top:102.4px;" width="13.6" height="13.6" viewBox="0 0 13.6 13.6"><path d="M3.94 3.94 L9.66 9.66 M9.66 3.94 L3.94 9.66" stroke="#1c1c1c" stroke-width="1.3" fill="none"/></svg>
<span class="t" style="left:283.4px;top:103.60px;font-size:13px;line-height:13px;color:#fff;transform:scaleX(1.0600);transform-origin:0 0;">Untitled–5 [RGB] [@80.6%] – [Modified]</span>
<div class="clip" style="left:80px;top:145px;width:989px;height:812px;">
<svg style="left:0;top:0;" width="989" height="812" viewBox="80 145 989 812"><defs><filter id="sk" x="-5%" y="-5%" width="110%" height="110%"><feGaussianBlur stdDeviation="0.65"/></filter><filter id="ash" x="-10%" y="-10%" width="120%" height="130%"><feDropShadow dx="0.5" dy="1.2" stdDeviation="1" flood-color="#000" flood-opacity=".3"/></filter><clipPath id="imgclip"><rect x="137" y="206" width="621.5" height="716.5"/></clipPath></defs><rect x="281.5" y="181.5" width="621" height="716.6" fill="#fff" stroke="#15156a" stroke-width="1.2"/><rect x="137" y="206" width="621.5" height="717" fill="#e9e6e4"/><path d="M281.6 206 V898.2 H758.5" stroke="#a3a2e8" stroke-width="1.5" fill="none"/><path d="M137 297.8 H758.5" stroke="#000" stroke-width="2.2"/><path d="M137 354 H282" stroke="#111" stroke-width="2"/><path d="M282 353.6 H758.5" stroke="#fff" stroke-width="2.4"/><g clip-path="url(#imgclip)"><g fill="none" stroke-linecap="round" stroke-linejoin="round" filter="url(#sk)"><path d="M520.6 221.9 H545" stroke="#000" stroke-width="1.6" stroke-opacity="0.75"/><path d="M571.4 221.9 H625.6" stroke="#000" stroke-width="1.8" stroke-opacity="0.80"/><path d="M664.6 235.4L594.0 264.0L524.0 293.0L507.1 307.4" stroke="#000" stroke-width="5.7" stroke-opacity="0.60"/><path d="M593.4 262.4L522.6 291.6L505.7 305.9" stroke="#000" stroke-width="3.4" stroke-opacity="0.45"/><path d="M592.6 262.7L523.3 291.2L506.2 306.0" stroke="#000" stroke-width="3.2" stroke-opacity="0.45"/><path d="M663.5 235.5L592.8 263.6L522.0 292.9" stroke="#000" stroke-width="3.5" stroke-opacity="0.35"/><path d="M665.4 236.3L595.2 265.4L525.5 293.5" stroke="#000" stroke-width="2.9" stroke-opacity="0.39"/><path d="M665.0 236.0L620.0 266.0L574.8 298.0" stroke="#000" stroke-width="6.0" stroke-opacity="0.60"/><path d="M663.6 236.8L618.8 266.4L573.3 298.8" stroke="#000" stroke-width="3.9" stroke-opacity="0.38"/><path d="M666.3 238.0L620.7 268.1L576.4 300.6" stroke="#000" stroke-width="4.4" stroke-opacity="0.35"/><path d="M663.8 236.6L619.0 266.1L573.6 299.1" stroke="#000" stroke-width="3.0" stroke-opacity="0.34"/><path d="M663.9 237.4L619.6 268.1L574.9 300.1" stroke="#000" stroke-width="3.3" stroke-opacity="0.37"/><path d="M572.3 301.4L600.0 297.0L627.3 293.0" stroke="#000" stroke-width="5.7" stroke-opacity="0.58"/><path d="M572.5 302.3L599.0 298.0L626.4 294.4" stroke="#000" stroke-width="3.8" stroke-opacity="0.34"/><path d="M570.3 301.2L598.9 297.0L625.5 292.9" stroke="#000" stroke-width="3.9" stroke-opacity="0.30"/><path d="M574.3 302.8L601.3 297.9L628.2 294.2" stroke="#000" stroke-width="2.7" stroke-opacity="0.30"/><path d="M571.0 299.5L598.2 295.3L625.7 291.6" stroke="#000" stroke-width="2.6" stroke-opacity="0.44"/><path d="M620.6 296.4L580.0 322.0L537.6 350.6L525.7 359.0" stroke="#000" stroke-width="5.7" stroke-opacity="0.62"/><path d="M580.2 320.2L538.5 350.0L526.1 357.7" stroke="#000" stroke-width="3.3" stroke-opacity="0.36"/><path d="M621.1 295.8L581.2 320.3L538.8 348.7L526.9 358.5" stroke="#000" stroke-width="4.0" stroke-opacity="0.36"/><path d="M620.5 295.2L579.9 320.6L536.7 349.8L525.9 358.3" stroke="#000" stroke-width="4.2" stroke-opacity="0.45"/><path d="M619.4 295.8L578.3 321.7L536.3 350.9L525.4 359.0" stroke="#000" stroke-width="4.6" stroke-opacity="0.49"/><path d="M507.1 307.4L541.0 311.6L515.6 325.2" stroke="#000" stroke-width="4.7" stroke-opacity="0.62"/><path d="M506.3 306.1L540.2 310.9L515.7 324.7" stroke="#000" stroke-width="2.9" stroke-opacity="0.43"/><path d="M508.3 306.6L542.3 310.6L516.5 323.5" stroke="#000" stroke-width="3.4" stroke-opacity="0.37"/><path d="M507.9 308.8L542.5 313.4L516.1 326.2" stroke="#000" stroke-width="2.4" stroke-opacity="0.48"/><path d="M531 304 L540 307 L542 303" stroke="#000" stroke-width="1.6" stroke-opacity="0.60"/><path d="M400.0 341.0C404.2 339.9 416.9 336.6 425.0 334.5C433.1 332.4 439.6 330.6 448.8 328.5C458.0 326.4 469.2 323.6 480.0 322.0C490.8 320.4 507.8 319.3 513.4 318.8" stroke="#000" stroke-width="7.3" stroke-opacity="0.95"/><path d="M401.2 340.5C405.4 339.3 418.0 335.6 426.0 333.3C434.1 331.1 440.7 329.1 449.7 327.1C458.8 325.1 469.5 323.1 480.3 321.5C491.1 320.0 508.7 318.5 514.4 317.8" stroke="#000" stroke-width="4.4" stroke-opacity="0.72"/><path d="M400.6 340.0C404.8 338.9 417.5 335.8 425.6 333.8C433.8 331.7 440.3 329.6 449.4 327.6C458.6 325.6 469.7 323.3 480.5 321.7C491.3 320.0 508.5 318.6 514.1 317.9" stroke="#000" stroke-width="5.6" stroke-opacity="0.59"/><path d="M401.2 341.0C405.3 339.9 417.6 336.6 425.6 334.4C433.7 332.3 440.3 330.1 449.6 327.9C458.9 325.8 470.7 323.1 481.5 321.6C492.3 320.2 509.0 319.5 514.5 319.1" stroke="#000" stroke-width="4.1" stroke-opacity="0.62"/><path d="M430.0 336.0C435.8 334.7 452.5 330.4 465.0 328.0C477.5 325.6 498.3 322.6 505.0 321.5" stroke="#000" stroke-width="5.9" stroke-opacity="0.85"/><path d="M429.8 336.6C435.6 335.2 452.3 330.8 464.9 328.4C477.5 326.0 498.6 323.1 505.3 322.1" stroke="#000" stroke-width="3.8" stroke-opacity="0.62"/><path d="M338.6 378.9C341.1 376.8 345.3 369.6 353.8 366.0C362.3 362.4 377.8 359.9 389.7 357.4C401.6 354.9 413.8 353.7 425.5 351.0C437.2 348.3 448.9 344.5 460.0 341.0C471.1 337.5 486.7 331.8 492.0 330.0" stroke="#000" stroke-width="5.7" stroke-opacity="0.88"/><path d="M340.4 378.7C342.9 376.6 347.0 369.7 355.5 366.1C363.9 362.5 379.3 359.7 391.3 357.2C403.2 354.8 415.3 354.1 427.1 351.5C438.9 348.8 450.8 345.1 462.0 341.4C473.2 337.7 489.0 331.4 494.4 329.4" stroke="#000" stroke-width="4.5" stroke-opacity="0.66"/><path d="M337.1 376.7C339.5 374.6 343.4 367.2 351.9 363.8C360.5 360.4 376.4 358.8 388.5 356.3C400.6 353.9 413.0 351.7 424.7 348.9C436.4 346.2 448.0 343.0 458.9 339.7C469.8 336.4 484.8 330.9 490.0 329.1" stroke="#000" stroke-width="3.0" stroke-opacity="0.69"/><path d="M352.9 365.8C358.9 364.4 377.4 359.6 389.3 357.1C401.3 354.6 412.8 353.5 424.6 350.7C436.4 347.8 448.8 343.6 459.9 340.2C471.1 336.7 486.4 331.6 491.7 329.9" stroke="#000" stroke-width="3.8" stroke-opacity="0.58"/><path d="M350.0 374.0C357.5 371.8 380.0 364.5 395.0 361.0C410.0 357.5 432.5 354.3 440.0 353.0" stroke="#000" stroke-width="3.4" stroke-opacity="0.50"/><path d="M349.0 376.0C356.4 373.7 378.4 365.7 393.2 362.2C408.1 358.6 430.7 356.0 438.1 354.8" stroke="#000" stroke-width="1.8" stroke-opacity="0.27"/><path d="M513.4 319.0C514.3 323.3 517.0 336.0 518.8 344.8C520.6 353.6 521.7 365.7 524.1 371.7C526.5 377.7 530.9 378.3 533.0 381.0C535.1 383.7 537.0 384.8 536.7 388.0C536.4 391.2 536.4 395.9 531.3 400.4C526.2 404.9 514.9 409.4 506.2 414.8C497.5 420.2 488.3 427.0 479.3 432.7C470.3 438.4 461.4 444.9 452.4 448.8C443.4 452.7 433.0 455.7 425.5 456.0C418.0 456.3 410.6 451.5 407.6 450.6" stroke="#000" stroke-width="6.0" stroke-opacity="0.90"/><path d="M518.2 346.4C519.2 350.9 521.6 367.2 524.0 373.1C526.3 378.9 530.2 379.0 532.3 381.7C534.4 384.3 537.0 385.7 536.7 389.1C536.4 392.5 535.7 397.5 530.6 402.0C525.5 406.6 514.8 410.9 506.1 416.3C497.5 421.7 487.7 428.6 478.6 434.3C469.5 439.9 460.6 446.6 451.7 450.4C442.8 454.1 432.6 456.7 425.2 457.0C417.9 457.3 410.4 453.0 407.4 452.2" stroke="#000" stroke-width="3.8" stroke-opacity="0.51"/><path d="M511.8 317.7C512.8 322.0 515.6 334.8 517.5 343.6C519.4 352.4 520.9 364.5 523.3 370.5C525.7 376.5 529.9 377.0 531.9 379.7C533.9 382.4 535.8 383.3 535.4 386.5C535.1 389.7 534.9 394.3 529.9 398.9C524.9 403.5 514.0 408.4 505.4 413.9C496.7 419.4 486.8 426.1 477.9 431.7C468.9 437.3 460.6 443.5 451.8 447.4C442.9 451.3 429.3 453.7 424.8 455.0" stroke="#000" stroke-width="4.1" stroke-opacity="0.72"/><path d="M509.0 322.0C510.0 326.7 513.0 341.5 515.0 350.0C517.0 358.5 520.0 369.2 521.0 373.0" stroke="#000" stroke-width="5.9" stroke-opacity="0.80"/><path d="M508.8 322.9C509.8 327.5 512.6 342.2 514.5 350.7C516.4 359.1 519.3 369.6 520.2 373.4" stroke="#000" stroke-width="2.8" stroke-opacity="0.58"/><path d="M527.0 374.0C528.8 376.7 537.5 384.8 538.0 390.0C538.5 395.2 535.5 400.0 530.0 405.0C524.5 410.0 513.7 414.7 505.0 420.0C496.3 425.3 482.5 434.2 478.0 437.0" stroke="#000" stroke-width="3.4" stroke-opacity="0.60"/><path d="M526.0 373.5C528.0 376.2 537.2 384.3 537.8 389.4C538.3 394.4 534.8 399.0 529.2 403.9C523.6 408.9 508.4 416.6 504.2 419.2" stroke="#000" stroke-width="2.7" stroke-opacity="0.40"/><path d="M518.8 411.2C519.5 413.5 521.5 420.8 523.0 425.0C524.5 429.2 526.9 434.4 527.7 436.3" stroke="#000" stroke-width="4.2" stroke-opacity="0.50"/><path d="M517.8 412.4C518.4 414.7 520.1 422.0 521.6 426.3C523.2 430.5 526.0 435.8 526.9 437.7" stroke="#000" stroke-width="2.2" stroke-opacity="0.33"/><path d="M516.8 410.4C517.5 412.6 519.4 419.6 521.0 423.7C522.5 427.9 525.1 433.3 526.0 435.3" stroke="#000" stroke-width="2.7" stroke-opacity="0.33"/><path d="M484.7 438.0C488.1 438.5 497.9 441.5 505.0 441.0C512.0 440.5 523.3 436.0 527.0 435.0" stroke="#000" stroke-width="3.9" stroke-opacity="0.50"/><path d="M485.5 438.7C488.8 439.2 498.4 441.8 505.5 441.2C512.6 440.6 524.3 436.1 528.1 435.0" stroke="#000" stroke-width="2.7" stroke-opacity="0.35"/><path d="M512.0 415.0L516.0 438.0" stroke="#000" stroke-width="3.4" stroke-opacity="0.40"/><path d="M511.3 415.9L515.1 439.1" stroke="#000" stroke-width="1.7" stroke-opacity="0.26"/><path d="M338.6 378.9C337.7 382.4 334.9 392.2 333.0 400.0C331.1 407.8 329.4 416.8 326.9 425.5C324.4 434.2 320.7 443.0 318.0 452.0C315.3 461.0 312.0 474.8 310.8 479.3" stroke="#000" stroke-width="7.8" stroke-opacity="0.92"/><path d="M339.0 380.4C338.0 383.9 335.1 393.8 333.1 401.6C331.1 409.3 329.7 418.3 327.1 426.8C324.6 435.3 319.2 448.2 317.7 452.5" stroke="#000" stroke-width="5.0" stroke-opacity="0.63"/><path d="M333.8 400.9C332.7 405.1 329.8 417.6 327.3 426.1C324.8 434.6 321.2 443.1 318.6 452.0C316.0 460.9 312.7 475.0 311.5 479.6" stroke="#000" stroke-width="5.5" stroke-opacity="0.52"/><path d="M339.4 380.3C338.4 383.9 335.6 393.9 333.7 401.8C331.8 409.6 330.5 418.6 328.0 427.2C325.5 435.7 321.8 444.1 319.0 453.0C316.1 461.9 312.4 475.9 311.1 480.5" stroke="#000" stroke-width="4.3" stroke-opacity="0.62"/><path d="M490.0 359.2C491.2 363.0 494.3 373.9 497.0 382.0C499.7 390.1 504.7 403.3 506.2 407.6" stroke="#000" stroke-width="5.7" stroke-opacity="0.88"/><path d="M488.6 358.3C489.8 362.1 493.3 373.1 496.0 381.1C498.7 389.2 503.4 402.3 504.8 406.6" stroke="#000" stroke-width="3.5" stroke-opacity="0.56"/><path d="M488.8 360.6C490.1 364.3 493.8 374.4 496.5 382.5C499.2 390.5 503.8 404.5 505.2 408.9" stroke="#000" stroke-width="4.5" stroke-opacity="0.56"/><path d="M471.2 373.5C472.2 377.6 474.8 389.3 477.0 398.0C479.2 406.7 483.4 420.9 484.7 425.5" stroke="#000" stroke-width="5.5" stroke-opacity="0.85"/><path d="M471.1 372.5C472.0 376.6 474.3 388.2 476.5 397.0C478.7 405.7 482.9 420.5 484.2 425.2" stroke="#000" stroke-width="2.7" stroke-opacity="0.63"/><path d="M471.4 374.2C472.4 378.3 475.3 390.3 477.4 398.9C479.5 407.5 483.1 421.4 484.3 426.0" stroke="#000" stroke-width="3.4" stroke-opacity="0.54"/><path d="M445.2 389.7C446.0 394.8 448.5 409.6 450.0 420.0C451.5 430.4 453.5 447.0 454.2 452.4" stroke="#000" stroke-width="4.9" stroke-opacity="0.75"/><path d="M444.5 388.5C445.4 393.5 448.3 407.9 449.8 418.4C451.4 429.0 453.2 446.2 453.9 451.8" stroke="#000" stroke-width="2.4" stroke-opacity="0.58"/><path d="M445.6 390.7C446.4 395.8 448.9 411.2 450.5 421.7C452.0 432.1 454.2 448.1 454.9 453.4" stroke="#000" stroke-width="3.0" stroke-opacity="0.44"/><path d="M411.2 395.0C411.8 397.8 413.8 406.3 415.0 412.0C416.2 417.7 417.8 426.2 418.3 429.1" stroke="#000" stroke-width="4.2" stroke-opacity="0.60"/><path d="M410.4 393.8C411.1 396.7 413.2 405.1 414.3 410.8C415.4 416.5 416.5 425.3 417.0 428.2" stroke="#000" stroke-width="2.1" stroke-opacity="0.37"/><path d="M412.6 396.0C413.2 398.9 415.4 407.6 416.5 413.3C417.6 419.0 419.0 427.4 419.4 430.2" stroke="#000" stroke-width="1.9" stroke-opacity="0.43"/><path d="M372.0 416.0L376.0 428.0" stroke="#000" stroke-width="3.2" stroke-opacity="0.35"/><path d="M372.0 416.3L375.5 428.8" stroke="#000" stroke-width="1.6" stroke-opacity="0.22"/><path d="M410 368 Q424 362 431 367 L434.5 381 L426 384.5" stroke="#000" stroke-width="3.9" stroke-opacity="0.45"/><path d="M437 358 Q451 353 458 359 L460.5 372" stroke="#000" stroke-width="3.9" stroke-opacity="0.45"/><path d="M464 347 Q477 342 484 348 L485 352" stroke="#000" stroke-width="3.9" stroke-opacity="0.42"/><path d="M482 336 L492 333" stroke="#000" stroke-width="2.6" stroke-opacity="0.35"/><path d="M417.0 409.7L380.0 430.8L343.6 451.5L311.0 470.2" stroke="#000" stroke-width="7.3" stroke-opacity="0.92"/><path d="M379.2 430.4L342.9 451.0L310.4 469.2" stroke="#000" stroke-width="5.6" stroke-opacity="0.60"/><path d="M416.8 410.9L378.7 431.6L342.3 452.5" stroke="#000" stroke-width="5.5" stroke-opacity="0.67"/><path d="M416.8 409.3L379.5 430.0L343.1 451.8L310.3 469.9" stroke="#000" stroke-width="5.5" stroke-opacity="0.52"/><path d="M412.0 417.0L378.0 436.5L350.0 452.5" stroke="#000" stroke-width="5.9" stroke-opacity="0.70"/><path d="M411.4 416.3L377.9 436.2L349.8 451.4" stroke="#000" stroke-width="2.7" stroke-opacity="0.50"/><path d="M407.6 450.6L380.0 466.0L359.2 479.3L327.3 497.0" stroke="#000" stroke-width="6.8" stroke-opacity="0.92"/><path d="M380.9 466.4L360.6 479.6L328.8 496.7" stroke="#000" stroke-width="4.3" stroke-opacity="0.65"/><path d="M408.9 451.5L381.1 466.6L359.9 480.2L328.2 498.0" stroke="#000" stroke-width="3.8" stroke-opacity="0.50"/><path d="M391.0 436.0C392.5 438.3 397.2 445.7 400.0 450.0C402.8 454.3 406.7 460.0 408.0 462.0" stroke="#000" stroke-width="7.2" stroke-opacity="0.85"/><path d="M390.0 435.9C391.2 438.4 394.7 446.4 397.5 450.9C400.3 455.3 405.2 460.6 406.7 462.5" stroke="#000" stroke-width="3.8" stroke-opacity="0.58"/><path d="M388.0 435.9C389.5 438.2 394.6 445.7 397.4 449.7C400.2 453.8 403.7 458.4 405.0 460.2" stroke="#000" stroke-width="3.8" stroke-opacity="0.67"/><path d="M391.1 434.8C392.8 437.1 398.7 444.3 401.6 448.7C404.6 453.1 407.5 459.1 408.6 461.2" stroke="#000" stroke-width="5.5" stroke-opacity="0.48"/><path d="M388.0 435.5C389.4 437.8 393.5 445.5 396.5 449.7C399.4 454.0 404.2 459.2 405.8 461.0" stroke="#000" stroke-width="3.7" stroke-opacity="0.67"/><path d="M396.0 434.0L412.0 452.0" stroke="#000" stroke-width="6.5" stroke-opacity="0.70"/><path d="M394.2 435.3L411.5 453.4" stroke="#000" stroke-width="5.1" stroke-opacity="0.45"/><path d="M393.9 432.7L411.2 449.5" stroke="#000" stroke-width="3.8" stroke-opacity="0.39"/><path d="M397.8 430.8L414.6 450.8" stroke="#000" stroke-width="4.9" stroke-opacity="0.50"/><path d="M389.0 444.0L408.0 440.0" stroke="#000" stroke-width="5.2" stroke-opacity="0.60"/><path d="M390.7 445.2L410.7 442.1" stroke="#000" stroke-width="2.4" stroke-opacity="0.42"/><path d="M388.2 443.0L406.7 439.1" stroke="#000" stroke-width="3.0" stroke-opacity="0.47"/><path d="M414.0 408.0L417.0 425.0" stroke="#000" stroke-width="3.9" stroke-opacity="0.60"/><path d="M413.0 408.8L416.5 426.2" stroke="#000" stroke-width="2.3" stroke-opacity="0.31"/><path d="M311.0 470.2L290.0 482.2L270.3 493.4" stroke="#000" stroke-width="6.5" stroke-opacity="0.90"/><path d="M311.3 469.6L289.8 482.3L269.8 493.0" stroke="#000" stroke-width="4.8" stroke-opacity="0.66"/><path d="M309.5 469.5L288.7 481.3L269.6 492.1" stroke="#000" stroke-width="3.5" stroke-opacity="0.71"/><path d="M270.3 493.4L315.2 500.6" stroke="#000" stroke-width="5.2" stroke-opacity="0.85"/><path d="M270.7 492.8L315.3 499.7" stroke="#000" stroke-width="3.7" stroke-opacity="0.66"/><path d="M305.5 503.0L245.0 544.0L181.8 586.7" stroke="#000" stroke-width="6.0" stroke-opacity="0.90"/><path d="M305.4 503.9L245.3 545.6L182.6 587.7" stroke="#000" stroke-width="3.2" stroke-opacity="0.57"/><path d="M305.2 504.4L245.2 545.4L182.1 587.9" stroke="#000" stroke-width="3.4" stroke-opacity="0.54"/><path d="M327.3 497.0L371.0 504.3" stroke="#000" stroke-width="5.2" stroke-opacity="0.85"/><path d="M326.7 497.3L370.9 504.7" stroke="#000" stroke-width="2.5" stroke-opacity="0.43"/><path d="M361.3 505.5L334.8 520.0L281.2 540.6L220.0 572.0L184.0 588.0" stroke="#000" stroke-width="6.0" stroke-opacity="0.90"/><path d="M361.9 505.4L335.4 519.3L280.9 539.7L220.1 571.8" stroke="#000" stroke-width="4.1" stroke-opacity="0.65"/><path d="M361.8 506.3L335.5 520.5L282.0 541.3L220.6 572.2L184.6 588.1" stroke="#000" stroke-width="3.9" stroke-opacity="0.54"/><path d="M451.0 402.0C451.3 411.7 452.4 441.0 453.0 460.0C453.6 479.0 454.3 506.7 454.6 516.0" stroke="#000" stroke-width="3.9" stroke-opacity="0.30"/><path d="M450.8 402.9C451.1 412.7 452.4 442.3 453.0 461.3C453.7 480.3 454.5 507.6 454.8 516.8" stroke="#000" stroke-width="2.4" stroke-opacity="0.22"/><path d="M447.0 460.0C444.8 466.7 437.2 487.5 434.0 500.0C430.8 512.5 429.0 529.2 428.0 535.0" stroke="#000" stroke-width="3.9" stroke-opacity="0.25"/><path d="M447.8 461.7C445.6 468.3 437.8 488.9 434.9 501.5C432.1 514.0 431.4 531.3 430.6 537.2" stroke="#000" stroke-width="3.0" stroke-opacity="0.15"/><path d="M448.4 460.3C446.4 466.7 439.8 486.5 436.7 499.0C433.7 511.4 431.1 529.0 430.0 535.0" stroke="#000" stroke-width="2.1" stroke-opacity="0.15"/><path d="M470.4 477.6C472.0 483.8 476.4 502.1 480.0 515.0C483.6 527.9 490.2 548.3 492.2 555.0" stroke="#000" stroke-width="6.5" stroke-opacity="0.38"/><path d="M469.5 477.1C471.1 483.3 475.8 501.3 479.4 514.2C483.0 527.0 489.1 547.6 491.1 554.3" stroke="#000" stroke-width="4.5" stroke-opacity="0.21"/><path d="M473.5 543.4C477.1 545.3 488.6 551.0 495.0 555.0C501.4 559.0 508.9 565.2 511.7 567.3" stroke="#000" stroke-width="2.9" stroke-opacity="0.50"/><path d="M473.3 542.6C476.7 544.4 487.6 549.6 493.9 553.6C500.2 557.6 508.2 564.3 511.0 566.5" stroke="#000" stroke-width="1.9" stroke-opacity="0.26"/><path d="M483.0 540.0C485.8 541.3 495.5 544.7 500.0 548.0C504.5 551.3 508.3 558.0 510.0 560.0" stroke="#000" stroke-width="2.1" stroke-opacity="0.35"/><path d="M458 564 Q470 566 480 573" stroke="#000" stroke-width="2.6" stroke-opacity="0.30"/><path d="M407.0 456.0C406.6 460.8 405.3 475.2 404.5 485.0C403.7 494.8 402.0 507.8 402.0 515.0C402.0 522.2 402.5 524.1 404.5 528.0C406.5 531.9 410.8 535.3 414.0 538.5C417.2 541.7 420.8 543.4 424.0 547.0C427.2 550.6 430.5 555.5 433.0 560.0C435.5 564.5 437.4 568.7 439.0 574.0C440.6 579.3 441.9 586.0 442.8 592.0C443.7 598.0 443.9 604.0 444.3 610.0C444.8 616.0 445.6 622.2 445.5 628.0C445.4 633.8 445.4 639.2 444.0 645.0C442.6 650.8 441.3 654.0 437.0 663.0C432.7 672.0 421.2 693.0 418.0 699.0" stroke="#000" stroke-width="7.8" stroke-opacity="0.95"/><path d="M405.7 456.4C405.2 461.4 403.9 476.5 403.0 486.4C402.2 496.3 400.5 508.8 400.5 515.8C400.5 522.8 401.0 524.6 403.1 528.6C405.2 532.6 410.1 536.8 413.3 539.9C416.6 543.0 419.5 543.9 422.6 547.3C425.7 550.7 429.7 555.6 432.1 560.3C434.5 564.9 435.5 569.8 437.1 575.3C438.6 580.8 440.5 587.2 441.5 593.2C442.5 599.2 442.5 605.4 443.0 611.3C443.4 617.1 444.4 622.5 444.2 628.2C444.1 634.0 443.5 639.8 442.1 645.8C440.7 651.8 437.0 661.2 436.0 664.3" stroke="#000" stroke-width="3.9" stroke-opacity="0.56"/><path d="M406.5 457.5C406.3 462.5 405.8 477.5 405.0 487.2C404.2 497.0 401.6 508.8 401.6 516.0C401.7 523.2 403.1 526.3 405.2 530.2C407.3 534.1 410.8 536.4 414.1 539.4C417.3 542.4 421.4 544.7 424.7 548.4C428.0 552.1 431.2 557.3 433.7 561.7C436.1 566.2 437.9 569.8 439.5 575.0C441.1 580.3 442.5 587.0 443.3 593.1C444.1 599.3 443.8 606.0 444.2 612.0C444.7 618.0 446.1 623.3 446.1 629.1C446.0 634.8 445.2 640.5 443.7 646.4C442.2 652.3 441.5 655.4 437.1 664.4C432.7 673.3 420.8 694.2 417.5 700.2" stroke="#000" stroke-width="6.0" stroke-opacity="0.49"/><path d="M406.6 457.4C406.2 462.2 404.9 476.3 404.2 486.1C403.5 495.9 402.3 509.0 402.3 516.1C402.3 523.2 402.4 524.9 404.4 528.8C406.5 532.7 411.0 536.1 414.3 539.3C417.7 542.5 421.3 544.4 424.5 547.9C427.6 551.3 430.6 555.7 433.1 560.2C435.6 564.8 437.8 569.4 439.4 574.9C441.0 580.4 441.7 587.3 442.6 593.3C443.6 599.3 444.5 604.9 444.9 610.9C445.4 616.8 445.5 623.1 445.3 628.9C445.1 634.6 445.0 639.7 443.7 645.4C442.3 651.1 438.2 660.3 437.1 663.3" stroke="#000" stroke-width="3.7" stroke-opacity="0.68"/><path d="M407.4 456.0C407.0 461.0 406.1 475.8 405.3 485.7C404.5 495.6 402.3 508.4 402.5 515.6C402.6 522.7 404.1 524.6 406.2 528.4C408.4 532.1 412.2 535.0 415.5 538.1C418.7 541.2 422.5 543.3 425.7 547.0C428.9 550.8 432.4 556.1 434.7 560.6C437.0 565.2 437.9 569.3 439.5 574.5C441.1 579.6 443.5 585.4 444.4 591.4C445.3 597.4 444.8 604.2 445.1 610.4C445.3 616.6 446.1 622.8 446.0 628.6C445.9 634.5 446.1 639.8 444.7 645.5C443.3 651.2 438.7 660.1 437.5 663.0" stroke="#000" stroke-width="4.4" stroke-opacity="0.49"/><path d="M406.0 480.0C405.8 486.7 403.0 509.8 405.0 520.0C407.0 530.2 413.2 533.3 418.0 541.0C422.8 548.7 430.5 556.8 434.0 566.0C437.5 575.2 438.2 591.0 439.0 596.0" stroke="#000" stroke-width="5.2" stroke-opacity="0.65"/><path d="M405.6 479.2C405.4 485.8 402.6 508.5 404.5 518.6C406.5 528.6 412.6 531.8 417.4 539.5C422.1 547.3 429.7 555.8 433.1 565.1C436.5 574.5 437.1 590.4 437.9 595.4" stroke="#000" stroke-width="3.4" stroke-opacity="0.50"/><path d="M397.5 525.4C396.9 532.0 394.9 551.6 394.0 565.0C393.1 578.4 392.4 599.2 392.1 606.0" stroke="#000" stroke-width="4.4" stroke-opacity="0.42"/><path d="M396.5 526.8C395.9 533.3 394.0 552.7 393.2 566.2C392.3 579.7 391.8 600.7 391.5 607.6" stroke="#000" stroke-width="2.5" stroke-opacity="0.31"/><path d="M397.6 523.9C397.1 530.5 395.1 550.1 394.2 563.7C393.3 577.4 392.4 598.6 392.1 605.6" stroke="#000" stroke-width="2.9" stroke-opacity="0.29"/><path d="M417.2 598.9C418.3 602.4 421.6 612.8 424.0 620.0C426.4 627.2 430.3 638.2 431.6 641.9" stroke="#000" stroke-width="4.7" stroke-opacity="0.85"/><path d="M416.5 597.6C417.7 601.2 421.3 611.7 423.7 618.9C426.2 626.2 430.0 637.5 431.2 641.2" stroke="#000" stroke-width="2.3" stroke-opacity="0.48"/><path d="M431.6 631.2C429.7 636.0 424.4 650.2 420.0 660.0C415.6 669.8 410.8 680.8 405.0 690.0C399.2 699.2 392.4 706.2 385.0 715.0C377.6 723.8 364.8 738.1 360.8 742.7" stroke="#000" stroke-width="5.5" stroke-opacity="0.75"/><path d="M431.3 627.4C429.4 632.3 424.3 646.3 420.0 656.3C415.6 666.2 410.9 677.8 405.3 686.9C399.7 696.0 389.5 706.8 386.3 710.8" stroke="#000" stroke-width="2.9" stroke-opacity="0.41"/><path d="M429.8 633.0C427.7 637.5 421.7 650.6 416.9 660.3C412.1 670.0 406.6 682.2 400.8 691.4C395.0 700.6 389.4 706.9 382.3 715.5C375.3 724.2 362.4 738.8 358.4 743.5" stroke="#000" stroke-width="3.9" stroke-opacity="0.43"/><path d="M434.5 627.7C432.4 632.4 426.4 646.0 422.1 655.6C417.8 665.2 414.3 675.9 408.6 685.4C402.9 695.0 395.6 704.2 388.0 713.0C380.3 721.9 366.8 734.4 362.6 738.7" stroke="#000" stroke-width="3.4" stroke-opacity="0.52"/><path d="M433.3 628.4C431.2 633.4 425.1 648.8 420.9 658.8C416.7 668.8 413.8 679.2 408.0 688.3C402.1 697.5 393.2 705.0 385.8 713.7C378.4 722.4 367.4 735.9 363.7 740.3" stroke="#000" stroke-width="3.3" stroke-opacity="0.43"/><path d="M427.5 628.9C425.9 633.8 422.0 648.7 417.9 658.7C413.9 668.6 409.3 679.6 403.2 688.7C397.1 697.8 389.1 704.5 381.6 713.3C374.0 722.1 361.8 736.9 357.9 741.6" stroke="#000" stroke-width="3.0" stroke-opacity="0.52"/><path d="M440.0 640.0C438.0 645.3 433.0 662.0 428.0 672.0C423.0 682.0 416.3 691.7 410.0 700.0C403.7 708.3 393.6 718.3 390.3 722.0" stroke="#000" stroke-width="6.5" stroke-opacity="0.55"/><path d="M447.4 634.3C444.9 639.8 437.5 656.6 432.4 667.3C427.3 678.1 422.6 690.3 416.8 698.7C410.9 707.1 400.3 714.6 397.1 717.8" stroke="#000" stroke-width="3.7" stroke-opacity="0.31"/><path d="M445.8 642.4C444.0 647.5 440.1 663.4 435.2 673.4C430.3 683.4 422.9 694.2 416.5 702.5C410.1 710.8 400.2 719.8 396.9 723.3" stroke="#000" stroke-width="4.2" stroke-opacity="0.33"/><path d="M422.8 671.2C419.8 676.6 410.8 695.1 404.7 703.5C398.5 712.0 389.2 718.7 386.1 721.8" stroke="#000" stroke-width="4.5" stroke-opacity="0.38"/><path d="M440.3 643.3C438.5 648.8 434.1 666.1 429.7 676.4C425.3 686.6 420.4 696.3 413.9 704.7C407.4 713.1 394.5 723.0 390.6 726.6" stroke="#000" stroke-width="5.1" stroke-opacity="0.29"/><path d="M434.2 637.0C432.9 642.2 430.3 658.2 426.0 668.0C421.6 677.8 411.0 691.3 408.0 696.0" stroke="#000" stroke-width="3.4" stroke-opacity="0.33"/><path d="M437.9 633.2C436.3 638.6 433.1 655.1 428.1 665.6C423.2 676.2 414.7 687.8 408.2 696.5C401.8 705.2 392.5 714.4 389.4 717.9" stroke="#000" stroke-width="3.0" stroke-opacity="0.34"/><path d="M427.4 673.9C424.7 678.5 417.0 693.0 411.0 701.3C404.9 709.6 394.4 720.0 391.1 723.7" stroke="#000" stroke-width="4.7" stroke-opacity="0.44"/><path d="M415.4 634.8C414.2 639.0 410.7 652.2 408.0 660.0C405.3 667.8 404.3 672.7 399.3 681.4C394.3 690.1 381.6 706.9 378.0 712.0" stroke="#000" stroke-width="5.2" stroke-opacity="0.55"/><path d="M404.9 659.9C403.5 663.6 401.5 673.2 396.5 682.0C391.5 690.8 378.6 707.7 375.0 712.8" stroke="#000" stroke-width="3.6" stroke-opacity="0.36"/><path d="M412.6 636.1C411.6 640.3 408.9 653.6 406.4 661.3C403.9 668.9 402.7 673.3 397.6 681.8C392.5 690.3 379.5 707.4 375.9 712.5" stroke="#000" stroke-width="2.5" stroke-opacity="0.42"/><path d="M425.0 675.0C421.2 680.5 410.8 698.0 402.0 708.0C393.2 718.0 377.0 730.5 372.0 735.0" stroke="#000" stroke-width="7.8" stroke-opacity="0.42"/><path d="M418.2 673.4C414.5 678.5 404.6 694.4 396.3 703.9C388.0 713.4 372.8 725.8 368.1 730.2" stroke="#000" stroke-width="4.8" stroke-opacity="0.28"/><path d="M428.8 677.3C424.7 682.7 412.9 699.1 404.2 709.4C395.5 719.6 381.3 733.9 376.7 738.8" stroke="#000" stroke-width="5.5" stroke-opacity="0.23"/><path d="M424.6 676.5C420.7 682.6 410.2 703.1 401.1 713.1C392.0 723.2 375.2 732.9 370.0 736.8" stroke="#000" stroke-width="4.3" stroke-opacity="0.30"/><path d="M427.5 669.6C423.8 675.4 414.1 693.9 405.3 704.0C396.5 714.0 379.6 725.7 374.5 730.0" stroke="#000" stroke-width="4.0" stroke-opacity="0.33"/><path d="M430.0 668.3C425.7 674.5 413.2 695.0 404.2 705.5C395.2 716.0 380.8 727.0 376.2 731.3" stroke="#000" stroke-width="4.7" stroke-opacity="0.23"/><path d="M425.2 669.7C421.3 675.3 409.8 692.6 401.4 702.8C393.1 713.0 379.4 726.5 375.1 731.2" stroke="#000" stroke-width="4.9" stroke-opacity="0.29"/><path d="M425.1 670.2C421.3 676.1 411.7 695.5 402.7 705.7C393.7 715.8 376.5 726.8 371.2 731.1" stroke="#000" stroke-width="5.6" stroke-opacity="0.26"/><path d="M279.2 543.3C275.9 550.8 264.3 572.5 259.4 588.1C254.5 603.7 251.1 618.1 249.6 636.6C248.1 655.1 249.6 680.2 250.5 699.3C251.4 718.4 254.1 742.4 254.8 751.0" stroke="#000" stroke-width="7.2" stroke-opacity="0.80"/><path d="M277.8 547.3C274.3 554.8 262.2 577.0 257.1 592.5C252.0 607.9 248.9 621.8 247.2 639.9C245.5 658.0 247.1 690.9 247.0 701.1" stroke="#000" stroke-width="5.0" stroke-opacity="0.55"/><path d="M276.0 543.0C272.6 550.5 260.5 572.8 256.0 588.0C251.4 603.2 250.0 615.5 248.7 634.2C247.4 652.8 247.8 680.4 248.2 699.7C248.7 719.0 250.8 741.6 251.3 750.0" stroke="#000" stroke-width="3.3" stroke-opacity="0.53"/><path d="M277.2 546.8C273.3 554.3 258.7 576.1 253.4 591.8C248.2 607.5 246.9 622.4 245.7 641.0C244.6 659.6 246.4 693.0 246.5 703.3" stroke="#000" stroke-width="3.7" stroke-opacity="0.56"/><path d="M257.4 589.1C255.7 597.5 249.0 620.4 247.2 639.3C245.5 658.1 245.9 682.8 246.9 702.1C247.9 721.4 252.1 746.3 253.1 755.1" stroke="#000" stroke-width="3.8" stroke-opacity="0.58"/><path d="M283.1 545.1C280.0 552.1 269.2 571.5 264.2 587.0C259.2 602.6 254.2 619.4 253.1 638.3C252.0 657.1 256.6 689.9 257.3 700.3" stroke="#000" stroke-width="4.1" stroke-opacity="0.55"/><path d="M263.5 590.1C262.1 598.4 256.3 621.0 255.0 639.7C253.8 658.3 255.5 683.0 256.0 702.0C256.5 721.0 257.7 745.0 258.0 753.6" stroke="#000" stroke-width="3.2" stroke-opacity="0.57"/><path d="M275.6 540.1C272.4 547.7 261.1 570.2 256.4 585.7C251.8 601.2 248.8 614.2 247.7 632.9C246.7 651.6 249.5 678.5 249.9 697.9C250.3 717.4 250.0 740.9 250.0 749.5" stroke="#000" stroke-width="5.2" stroke-opacity="0.43"/><path d="M280.8 542.6C278.3 550.5 270.3 574.8 265.5 590.4C260.8 606.1 254.5 618.1 252.4 636.3C250.2 654.5 252.7 689.1 252.8 699.6" stroke="#000" stroke-width="5.2" stroke-opacity="0.44"/><path d="M285.2 545.4C282.0 553.0 270.9 575.6 266.0 590.8C261.1 606.0 257.6 618.1 255.9 636.4C254.3 654.8 255.3 681.5 256.1 700.7C256.9 720.0 259.9 743.5 260.7 752.0" stroke="#000" stroke-width="4.6" stroke-opacity="0.46"/><path d="M313.2 530.8C310.5 538.0 302.2 558.9 297.1 573.8C292.0 588.7 287.3 604.0 282.8 620.4C278.3 636.8 273.2 659.2 270.2 672.4C267.2 685.5 266.8 688.0 264.8 699.3C262.8 710.6 259.1 733.2 258.0 740.0" stroke="#000" stroke-width="5.9" stroke-opacity="0.80"/><path d="M311.5 527.4C308.8 534.6 300.4 555.5 295.3 570.6C290.2 585.7 285.5 601.3 281.1 618.1C276.6 634.8 271.8 657.7 268.6 671.0C265.4 684.3 263.9 686.7 261.8 697.9C259.8 709.0 257.2 731.2 256.2 737.9" stroke="#000" stroke-width="4.4" stroke-opacity="0.49"/><path d="M311.6 534.1C309.1 541.0 301.8 560.6 296.9 575.5C292.1 590.5 286.9 607.3 282.6 623.8C278.2 640.4 273.6 661.8 270.8 674.9C267.9 688.0 266.4 697.7 265.5 702.3" stroke="#000" stroke-width="3.9" stroke-opacity="0.48"/><path d="M315.4 530.0C312.9 537.0 305.2 557.3 300.1 572.2C295.0 587.1 289.5 602.6 284.9 619.3C280.4 636.0 275.7 659.1 272.7 672.4C269.6 685.7 267.6 694.8 266.6 699.3" stroke="#000" stroke-width="4.6" stroke-opacity="0.56"/><path d="M314.6 529.2C312.0 536.5 304.1 558.2 299.2 573.1C294.3 587.9 289.8 601.6 285.4 618.1C281.0 634.7 275.7 659.2 272.6 672.3C269.5 685.5 267.8 692.9 266.8 697.1" stroke="#000" stroke-width="3.9" stroke-opacity="0.56"/><path d="M315.3 533.7C312.7 540.9 304.3 562.0 299.3 576.9C294.2 591.9 289.6 607.1 284.9 623.5C280.2 639.9 274.4 662.3 271.3 675.5C268.3 688.6 267.3 698.1 266.5 702.6" stroke="#000" stroke-width="4.5" stroke-opacity="0.56"/><path d="M290.0 560.0C287.0 568.3 276.7 593.3 272.0 610.0C267.3 626.7 264.3 642.5 262.0 660.0C259.7 677.5 258.7 705.8 258.0 715.0" stroke="#000" stroke-width="5.9" stroke-opacity="0.50"/><path d="M289.8 564.9C286.3 573.0 273.8 597.0 268.8 613.4C263.8 629.8 261.9 645.7 259.7 663.5C257.6 681.3 256.4 710.8 255.8 720.3" stroke="#000" stroke-width="2.7" stroke-opacity="0.34"/><path d="M285.3 555.1C282.4 563.3 273.3 587.9 267.9 604.4C262.5 620.9 255.5 636.1 252.8 654.0C250.2 672.0 252.2 702.4 252.1 712.1" stroke="#000" stroke-width="3.6" stroke-opacity="0.31"/><path d="M282.8 560.1C279.6 568.3 267.9 592.6 263.7 609.2C259.5 625.9 258.9 642.3 257.5 659.9C256.0 677.5 255.4 705.6 255.0 714.7" stroke="#000" stroke-width="2.9" stroke-opacity="0.25"/><path d="M294.4 554.6C290.7 563.5 277.2 590.6 272.6 607.9C267.9 625.2 268.0 641.5 266.3 658.4C264.6 675.2 263.0 700.6 262.4 709.1" stroke="#000" stroke-width="4.1" stroke-opacity="0.32"/><path d="M298.7 557.8C294.8 565.5 280.3 587.1 275.3 603.8C270.4 620.6 271.2 640.6 268.9 658.3C266.6 676.1 262.9 701.8 261.7 710.5" stroke="#000" stroke-width="3.0" stroke-opacity="0.38"/><path d="M289.1 554.3C286.1 562.7 276.3 588.0 271.5 604.8C266.6 621.7 262.2 638.0 259.8 655.5C257.4 673.0 257.5 700.6 257.0 709.6" stroke="#000" stroke-width="3.5" stroke-opacity="0.31"/><path d="M295.6 566.6C292.1 574.5 279.3 597.0 274.8 613.8C270.4 630.6 270.5 649.6 268.7 667.4C266.8 685.1 264.6 711.5 263.8 720.3" stroke="#000" stroke-width="4.6" stroke-opacity="0.37"/><path d="M272.7 608.4C271.3 616.9 265.9 642.4 264.0 659.5C262.1 676.7 261.6 702.5 261.1 711.1" stroke="#000" stroke-width="3.5" stroke-opacity="0.34"/><path d="M300.0 545.0C297.0 554.2 287.0 582.5 282.0 600.0C277.0 617.5 272.0 641.7 270.0 650.0" stroke="#000" stroke-width="3.9" stroke-opacity="0.45"/><path d="M300.7 547.6C297.9 556.8 289.0 585.4 284.2 602.7C279.4 620.0 273.8 643.3 271.7 651.5" stroke="#000" stroke-width="2.9" stroke-opacity="0.33"/><path d="M300.6 546.2C297.7 555.6 288.1 584.9 283.0 602.7C278.0 620.4 272.4 644.3 270.3 652.6" stroke="#000" stroke-width="3.0" stroke-opacity="0.26"/><path d="M239.5 762.3C240.8 761.9 244.4 761.9 247.0 760.0C249.6 758.1 253.5 752.5 254.8 751.0" stroke="#000" stroke-width="5.9" stroke-opacity="0.85"/><path d="M239.7 762.4C240.9 762.1 244.4 762.4 247.0 760.6C249.6 758.7 253.9 752.9 255.2 751.3" stroke="#000" stroke-width="2.8" stroke-opacity="0.63"/><path d="M243.7 765.0C246.8 767.2 255.0 774.7 262.0 778.0C269.0 781.3 275.0 782.6 285.5 784.6C296.0 786.6 311.1 789.5 325.0 790.0C338.9 790.5 355.9 787.2 369.2 787.4C382.5 787.6 393.4 788.7 405.0 791.0C416.6 793.3 428.2 797.6 439.0 801.3C449.8 805.0 459.8 808.8 470.0 813.0C480.2 817.2 495.0 824.2 500.0 826.4" stroke="#000" stroke-width="7.2" stroke-opacity="0.90"/><path d="M245.5 764.3C248.7 766.4 257.6 773.3 264.6 776.4C271.5 779.6 276.9 781.3 287.1 783.2C297.3 785.1 312.1 787.1 325.9 787.7C339.7 788.2 356.7 786.0 370.1 786.3C383.5 786.6 394.6 787.3 406.3 789.6C418.0 791.8 429.7 796.3 440.4 799.7C451.1 803.2 465.7 808.5 470.8 810.3" stroke="#000" stroke-width="5.2" stroke-opacity="0.49"/><path d="M261.5 778.2C265.7 779.1 276.2 781.9 287.0 783.6C297.7 785.3 311.8 788.1 325.7 788.5C339.7 788.9 357.0 785.9 370.5 786.3C383.9 786.7 395.0 788.2 406.7 790.7C418.3 793.2 429.8 798.1 440.3 801.5C450.9 804.9 460.1 807.1 470.0 811.0C479.9 814.8 494.9 822.4 499.9 824.7" stroke="#000" stroke-width="4.6" stroke-opacity="0.69"/><path d="M262.0 780.4C265.7 781.8 274.0 786.3 284.3 788.4C294.7 790.5 310.0 792.4 324.2 792.8C338.3 793.3 355.8 791.1 369.3 791.2C382.8 791.3 393.6 791.4 405.2 793.4C416.7 795.4 427.7 799.3 438.6 803.2C449.6 807.1 460.8 812.7 470.9 816.9C480.9 821.0 494.4 826.1 499.1 828.0" stroke="#000" stroke-width="5.5" stroke-opacity="0.69"/><path d="M264.4 776.4C268.1 777.2 275.9 779.0 286.5 781.0C297.0 783.0 313.4 787.8 327.6 788.3C341.8 788.9 358.4 784.1 371.6 784.2C384.9 784.3 395.8 786.6 407.2 788.9C418.6 791.2 429.4 794.7 440.1 798.2C450.8 801.6 461.1 805.3 471.4 809.4C481.8 813.5 496.9 820.6 502.0 822.9" stroke="#000" stroke-width="4.9" stroke-opacity="0.45"/><path d="M241.0 757.0C243.8 760.2 249.8 770.3 258.0 776.0C266.2 781.7 278.0 787.5 290.0 791.0C302.0 794.5 316.3 796.5 330.0 797.0C343.7 797.5 358.7 793.8 372.0 794.0C385.3 794.2 397.8 795.5 410.0 798.0C422.2 800.5 439.2 807.2 445.0 809.0" stroke="#000" stroke-width="5.9" stroke-opacity="0.65"/><path d="M241.2 756.3C244.1 759.5 250.1 769.7 258.5 775.3C267.0 781.0 279.8 786.9 291.8 790.3C303.8 793.6 317.0 794.9 330.4 795.4C343.8 795.9 358.7 793.1 372.3 793.3C385.8 793.6 399.5 794.4 411.8 796.7C424.1 799.0 440.3 805.4 446.0 807.2" stroke="#000" stroke-width="3.6" stroke-opacity="0.45"/><path d="M238.3 756.0C241.3 759.0 247.9 768.4 256.3 773.9C264.8 779.4 277.0 785.6 289.0 789.1C300.9 792.6 314.6 794.2 328.0 794.9C341.5 795.6 356.4 793.1 369.8 793.3C383.1 793.5 395.6 793.6 407.9 795.9C420.1 798.3 437.3 805.4 443.2 807.2" stroke="#000" stroke-width="2.9" stroke-opacity="0.52"/><path d="M250.0 752.0C253.0 754.8 260.3 764.7 268.0 769.0C275.7 773.3 284.0 775.8 296.0 778.0C308.0 780.2 326.0 781.5 340.0 782.0C354.0 782.5 373.3 781.2 380.0 781.0" stroke="#000" stroke-width="5.9" stroke-opacity="0.70"/><path d="M266.0 770.4C270.6 771.8 281.7 776.8 293.6 779.2C305.6 781.6 323.6 783.9 337.8 784.6C352.0 785.3 372.1 783.7 378.9 783.5" stroke="#000" stroke-width="4.5" stroke-opacity="0.36"/><path d="M251.8 750.2C254.8 753.2 262.1 763.5 269.5 767.8C277.0 772.1 284.4 774.0 296.4 776.2C308.4 778.4 327.6 780.5 341.6 781.1C355.6 781.8 374.0 780.2 380.4 780.0" stroke="#000" stroke-width="3.1" stroke-opacity="0.47"/><path d="M244.0 772.0C246.0 774.7 249.7 784.2 256.0 788.0C262.3 791.8 269.7 793.7 282.0 795.0C294.3 796.3 322.0 795.8 330.0 796.0" stroke="#000" stroke-width="3.1" stroke-opacity="0.50"/><path d="M243.0 771.1C244.8 773.6 247.9 782.2 254.1 786.0C260.2 789.9 275.6 792.6 279.9 793.9" stroke="#000" stroke-width="2.2" stroke-opacity="0.37"/><path d="M243.6 771.2C245.7 773.8 249.9 783.3 256.2 787.2C262.5 791.0 269.3 792.9 281.6 794.3C293.9 795.7 322.0 795.2 330.1 795.4" stroke="#000" stroke-width="1.9" stroke-opacity="0.25"/><path d="M262.0 772.0C268.3 774.3 285.3 782.7 300.0 786.0C314.7 789.3 333.3 790.2 350.0 792.0C366.7 793.8 383.3 793.7 400.0 797.0C416.7 800.3 441.7 809.5 450.0 812.0" stroke="#000" stroke-width="4.5" stroke-opacity="0.45"/><path d="M269.8 770.4C275.5 773.2 289.8 784.3 304.0 787.5C318.2 790.8 338.2 788.2 355.0 789.8C371.8 791.4 396.7 796.0 405.0 797.2" stroke="#000" stroke-width="2.2" stroke-opacity="0.32"/><path d="M265.4 778.3C271.8 780.7 289.3 789.0 303.8 792.5C318.2 796.0 334.8 797.6 352.0 799.2C369.2 800.8 389.9 799.1 407.0 802.1C424.1 805.1 446.6 814.8 454.5 817.3" stroke="#000" stroke-width="2.1" stroke-opacity="0.36"/><path d="M255.9 766.2C262.9 768.3 283.2 775.2 297.9 778.9C312.6 782.7 327.8 786.8 343.9 788.7C360.0 790.5 377.3 786.6 394.4 789.9C411.6 793.1 438.0 805.0 446.7 808.0" stroke="#000" stroke-width="3.2" stroke-opacity="0.24"/><path d="M264.6 772.9C271.4 775.6 290.3 785.7 305.1 789.0C320.0 792.4 337.4 791.4 353.9 792.9C370.5 794.4 396.2 797.2 404.6 798.0" stroke="#000" stroke-width="3.2" stroke-opacity="0.25"/><path d="M265.9 777.7C272.7 780.1 291.8 788.5 306.5 792.3C321.1 796.1 337.4 798.9 354.0 800.6C370.6 802.3 397.4 802.0 406.1 802.2" stroke="#000" stroke-width="3.3" stroke-opacity="0.35"/><path d="M263.9 777.0C271.1 779.7 292.1 790.1 307.0 793.3C321.8 796.5 336.6 795.1 353.0 796.4C369.4 797.7 396.5 800.3 405.2 801.1" stroke="#000" stroke-width="2.1" stroke-opacity="0.24"/><path d="M271.0 776.6C277.2 779.2 293.7 789.3 308.3 792.0C322.9 794.8 342.2 792.0 358.7 793.3C375.2 794.5 390.9 796.0 407.4 799.6C423.8 803.1 449.2 812.1 457.6 814.6" stroke="#000" stroke-width="3.5" stroke-opacity="0.31"/><path d="M300.0 792.0C310.0 793.3 340.0 797.7 360.0 800.0C380.0 802.3 401.7 802.3 420.0 806.0C438.3 809.7 461.7 819.3 470.0 822.0" stroke="#000" stroke-width="3.9" stroke-opacity="0.40"/><path d="M296.7 794.4C306.6 795.2 335.8 797.6 356.0 799.3C376.2 801.0 399.1 800.2 417.7 804.4C436.3 808.6 459.2 821.1 467.5 824.4" stroke="#000" stroke-width="2.1" stroke-opacity="0.26"/><path d="M298.6 786.0C308.7 787.6 339.3 792.9 359.4 795.3C379.5 797.8 401.2 796.8 419.4 800.5C437.6 804.3 460.3 815.1 468.4 818.0" stroke="#000" stroke-width="2.6" stroke-opacity="0.27"/><path d="M302.8 788.2C312.7 789.7 342.2 794.7 362.0 797.0C381.8 799.2 403.6 798.2 421.7 801.5C439.7 804.9 462.4 814.5 470.6 817.1" stroke="#000" stroke-width="2.3" stroke-opacity="0.27"/><path d="M354.4 798.2C364.2 799.6 395.0 802.7 413.1 806.6C431.2 810.5 454.8 819.0 463.2 821.5" stroke="#000" stroke-width="2.9" stroke-opacity="0.25"/><path d="M317.6 702.3 L256.2 742.7 L258 766 L316.2 770.6 Q297 754 299.5 731.6 Q303 716 317.6 702.3 Z" fill="#000" fill-opacity=".55" stroke="none"/><path d="M317.6 702.3L287.0 722.0L256.2 742.7" stroke="#000" stroke-width="4.4" stroke-opacity="0.80"/><path d="M316.4 702.3L285.5 721.4L255.5 742.7" stroke="#000" stroke-width="2.2" stroke-opacity="0.48"/><path d="M317.3 703.1L287.0 722.5L256.1 743.4" stroke="#000" stroke-width="3.2" stroke-opacity="0.51"/><path d="M317.6 702.3C315.2 704.6 306.0 711.1 303.0 716.0C300.0 720.9 300.3 725.3 299.5 731.6C298.7 737.9 295.2 747.4 298.0 753.9C300.8 760.4 313.2 767.8 316.2 770.6" stroke="#000" stroke-width="4.7" stroke-opacity="0.85"/><path d="M318.7 702.4C316.2 704.7 307.1 711.1 304.0 716.0C301.0 721.0 301.3 725.7 300.4 732.2C299.5 738.7 295.9 748.4 298.7 754.8C301.4 761.3 313.9 768.3 317.0 771.0" stroke="#000" stroke-width="3.5" stroke-opacity="0.58"/><path d="M302.5 715.8C302.0 718.4 300.1 725.0 299.3 731.4C298.4 737.8 294.7 747.5 297.5 754.1C300.4 760.6 313.1 767.7 316.2 770.5" stroke="#000" stroke-width="2.6" stroke-opacity="0.46"/><path d="M262 744 L294 768 M270 738 L299 760 M280 731 L300 747 M260 752 L282 769" stroke="#fff" stroke-width="1.3" stroke-opacity="0.45"/><path d="M443.7 613.4C445.8 610.2 450.8 599.7 456.0 594.0C461.2 588.3 468.2 583.7 475.2 579.4C482.2 575.1 489.9 570.8 498.0 568.0C506.1 565.2 513.4 564.0 523.7 562.5C534.0 561.0 548.0 558.2 560.0 559.0C572.0 559.8 586.4 564.5 595.4 567.3C604.4 570.1 608.8 572.4 614.0 576.0C619.2 579.6 622.2 584.1 626.5 588.9C630.8 593.7 636.4 599.5 640.0 605.0C643.6 610.5 646.7 619.2 648.0 622.0" stroke="#000" stroke-width="4.9" stroke-opacity="0.60"/><path d="M443.1 615.2C445.2 611.9 450.4 601.2 456.0 595.6C461.6 589.9 469.8 585.8 476.7 581.3C483.7 576.8 489.6 571.6 497.7 568.4C505.8 565.1 515.2 563.1 525.4 561.7C535.7 560.2 547.5 558.5 559.2 559.8C571.0 561.0 586.6 566.3 595.9 569.1C605.3 571.9 609.9 573.3 615.3 576.7C620.8 580.1 624.3 584.6 628.5 589.5C632.7 594.4 637.3 600.7 640.6 606.1C643.9 611.6 647.0 619.5 648.2 622.2" stroke="#000" stroke-width="2.8" stroke-opacity="0.47"/><path d="M443.8 613.2C446.0 610.1 451.5 599.8 457.0 594.4C462.5 588.9 469.4 585.0 476.7 580.7C484.0 576.3 492.6 571.1 500.6 568.1C508.6 565.2 514.4 564.6 524.8 563.0C535.1 561.5 550.7 557.8 562.7 558.7C574.7 559.6 588.2 565.6 596.8 568.4C605.4 571.2 608.9 572.1 614.3 575.7C619.7 579.3 624.7 585.3 629.1 590.0C633.6 594.8 637.8 598.6 641.3 604.1C644.8 609.5 648.9 619.6 650.4 622.7" stroke="#000" stroke-width="3.9" stroke-opacity="0.46"/><path d="M442.5 611.0C444.7 607.6 450.2 596.2 455.4 590.6C460.6 585.0 466.7 581.6 473.7 577.3C480.8 573.0 489.3 567.9 497.7 565.1C506.2 562.3 514.5 561.9 524.6 560.4C534.6 558.9 546.3 555.6 558.1 556.3C570.0 556.9 586.3 561.6 595.7 564.3C605.0 566.9 609.0 568.2 614.0 572.1C618.9 576.0 621.1 582.3 625.4 587.4C629.7 592.6 636.1 597.7 639.7 603.0C643.2 608.4 645.4 616.8 646.6 619.5" stroke="#000" stroke-width="2.7" stroke-opacity="0.42"/><path d="M444.1 616.7C446.0 613.4 449.8 602.4 455.1 596.6C460.5 590.8 469.2 586.2 476.2 581.8C483.2 577.5 489.1 573.1 497.1 570.6C505.0 568.2 513.4 568.2 524.0 567.0C534.6 565.8 548.8 563.1 560.6 563.5C572.3 563.9 585.3 566.9 594.4 569.5C603.4 572.1 609.5 575.3 615.0 579.1C620.5 582.8 623.3 587.3 627.3 592.1C631.4 596.9 636.0 602.1 639.3 607.9C642.6 613.7 645.8 623.6 647.1 626.7" stroke="#000" stroke-width="2.8" stroke-opacity="0.38"/><path d="M444.0 610.4C446.1 607.1 451.4 596.4 456.5 590.6C461.6 584.8 468.2 579.6 474.7 575.5C481.3 571.4 487.7 568.8 495.9 566.0C504.1 563.2 513.2 560.3 523.9 558.8C534.6 557.2 548.6 555.8 560.3 556.7C572.0 557.6 585.0 561.7 594.0 564.4C603.0 567.1 609.0 569.4 614.5 572.8C620.0 576.2 622.9 580.0 627.0 585.0C631.0 589.9 635.6 596.9 638.9 602.4C642.1 608.0 645.1 615.6 646.4 618.2" stroke="#000" stroke-width="3.1" stroke-opacity="0.44"/><path d="M455.5 591.0C458.5 588.5 466.7 580.2 473.5 575.9C480.3 571.7 488.2 568.2 496.2 565.3C504.3 562.5 511.4 560.2 521.6 558.9C531.7 557.6 545.1 556.7 557.1 557.6C569.0 558.5 584.1 561.6 593.1 564.2C602.2 566.8 606.1 569.5 611.3 573.0C616.4 576.5 619.3 580.3 623.9 585.2C628.5 590.1 635.1 596.4 638.6 602.2C642.2 608.0 644.1 617.2 645.2 620.2" stroke="#000" stroke-width="3.7" stroke-opacity="0.32"/><path d="M444.2 614.8C446.0 611.9 450.1 602.3 455.2 597.1C460.2 591.8 467.5 587.4 474.4 583.1C481.4 578.9 488.6 574.9 496.8 571.7C504.9 568.6 512.9 566.0 523.3 564.1C533.8 562.2 547.4 559.5 559.5 560.4C571.5 561.2 586.4 566.0 595.6 569.0C604.8 572.1 609.7 575.1 614.7 578.7C619.8 582.3 621.5 585.9 625.7 590.6C629.9 595.2 636.1 601.1 639.9 606.6C643.7 612.1 647.2 620.5 648.7 623.3" stroke="#000" stroke-width="3.2" stroke-opacity="0.35"/><path d="M446.1 612.8C448.0 609.4 452.4 598.7 457.4 592.9C462.4 587.0 468.7 582.0 476.0 577.6C483.2 573.3 492.6 569.5 501.0 566.7C509.3 563.8 515.9 562.0 526.1 560.5C536.3 559.1 550.3 556.9 562.1 557.8C574.0 558.7 588.6 563.1 597.4 565.9C606.1 568.7 609.7 571.1 614.7 574.6C619.8 578.1 623.0 582.2 627.7 587.0C632.3 591.8 638.9 597.7 642.6 603.5C646.2 609.4 648.5 619.2 649.7 622.3" stroke="#000" stroke-width="3.7" stroke-opacity="0.46"/><path d="M452.0 618.0C455.0 614.3 463.3 601.7 470.0 596.0C476.7 590.3 483.7 587.8 492.0 584.0C500.3 580.2 508.7 575.3 520.0 573.0C531.3 570.7 553.3 570.5 560.0 570.0" stroke="#000" stroke-width="4.5" stroke-opacity="0.50"/><path d="M449.8 617.4C452.9 613.6 462.0 600.5 468.8 594.9C475.6 589.2 482.0 587.2 490.4 583.4C498.7 579.5 507.4 574.1 518.8 571.7C530.3 569.3 552.4 569.3 559.1 568.9" stroke="#000" stroke-width="2.3" stroke-opacity="0.27"/><path d="M454.0 618.2C456.8 614.6 464.4 602.0 470.9 596.4C477.4 590.8 484.7 588.5 493.2 584.6C501.6 580.8 516.7 575.1 521.5 573.2" stroke="#000" stroke-width="3.0" stroke-opacity="0.36"/><path d="M535.0 558.0C540.8 557.7 559.2 554.8 570.0 556.0C580.8 557.2 595.0 563.5 600.0 565.0" stroke="#000" stroke-width="5.2" stroke-opacity="0.60"/><path d="M534.5 557.6C540.2 557.4 557.8 555.1 568.7 556.2C579.5 557.4 594.4 563.2 599.6 564.5" stroke="#000" stroke-width="2.4" stroke-opacity="0.45"/><path d="M630.0 592.0C632.0 594.7 638.8 602.0 642.0 608.0C645.2 614.0 647.8 619.0 649.0 628.0C650.2 637.0 649.0 656.3 649.0 662.0" stroke="#000" stroke-width="3.1" stroke-opacity="0.50"/><path d="M630.0 590.2C632.1 592.9 639.4 600.2 642.7 606.3C646.0 612.4 648.6 623.5 649.8 626.9" stroke="#000" stroke-width="2.3" stroke-opacity="0.29"/><path d="M628.7 593.9C630.7 596.5 637.8 603.7 641.0 609.6C644.2 615.6 647.0 620.6 648.2 629.5C649.3 638.4 647.8 657.3 647.7 662.8" stroke="#000" stroke-width="1.9" stroke-opacity="0.33"/><path d="M451.0 632.8C455.5 629.2 466.7 617.9 478.0 611.0C489.3 604.1 512.1 594.8 518.9 591.6" stroke="#000" stroke-width="5.5" stroke-opacity="0.50"/><path d="M453.1 630.6C457.6 627.2 468.9 616.7 480.0 610.0C491.2 603.3 513.5 593.5 520.2 590.2" stroke="#000" stroke-width="4.3" stroke-opacity="0.35"/><path d="M450.5 631.6C455.1 627.9 466.7 616.4 478.0 609.5C489.4 602.6 512.0 593.3 518.8 590.0" stroke="#000" stroke-width="3.8" stroke-opacity="0.35"/><path d="M450.0 631.7C454.6 628.0 466.4 616.5 477.6 609.7C488.9 603.0 510.9 594.3 517.5 591.2" stroke="#000" stroke-width="2.7" stroke-opacity="0.33"/><path d="M448.0 650.0C451.0 646.3 458.7 634.5 466.0 628.0C473.3 621.5 487.7 613.8 492.0 611.0" stroke="#000" stroke-width="3.9" stroke-opacity="0.40"/><path d="M447.3 652.1C450.1 648.4 457.2 636.5 464.5 629.9C471.9 623.3 486.9 615.4 491.4 612.5" stroke="#000" stroke-width="2.8" stroke-opacity="0.30"/><path d="M445.8 648.4C448.7 644.7 455.9 632.8 463.2 626.5C470.5 620.2 485.1 613.0 489.5 610.3" stroke="#000" stroke-width="2.4" stroke-opacity="0.21"/><path d="M444 585 Q458 580 470 588 L452 612" stroke="#000" stroke-width="3.2" stroke-opacity="0.40"/><path d="M450 588 L447 610 M456 588 L451 608" stroke="#000" stroke-width="3.9" stroke-opacity="0.35"/><path d="M485.0 441.0C491.8 440.9 512.7 437.8 526.0 440.6C539.3 443.4 553.4 449.6 565.0 458.0C576.6 466.4 586.6 478.8 595.4 490.8C604.2 502.8 612.0 516.5 618.0 530.0C624.0 543.5 629.0 565.0 631.2 572.0" stroke="#000" stroke-width="4.7" stroke-opacity="0.50"/><path d="M524.8 439.8C531.5 442.9 553.5 449.7 565.1 458.2C576.6 466.8 585.3 479.0 594.2 491.0C603.0 503.0 612.1 516.5 618.1 530.0C624.0 543.5 628.0 564.9 630.0 571.9" stroke="#000" stroke-width="3.0" stroke-opacity="0.25"/><path d="M486.7 442.1C493.5 441.9 514.5 438.1 527.7 440.8C541.0 443.4 554.7 449.5 566.1 458.0C577.6 466.5 587.3 479.7 596.2 491.7C605.2 503.8 614.0 516.7 620.0 530.2C626.0 543.7 630.2 565.6 632.3 572.7" stroke="#000" stroke-width="3.6" stroke-opacity="0.28"/><path d="M509.3 457.4C516.4 461.2 539.6 469.6 552.0 480.0C564.4 490.4 575.7 508.7 583.4 519.5C591.1 530.3 594.4 536.2 598.0 545.0C601.6 553.8 603.8 567.5 605.0 572.0" stroke="#000" stroke-width="4.2" stroke-opacity="0.50"/><path d="M510.7 458.3C517.7 462.2 540.3 471.3 552.6 481.7C564.8 492.0 576.4 509.8 584.2 520.5C591.9 531.2 596.6 541.8 599.1 546.0" stroke="#000" stroke-width="2.8" stroke-opacity="0.37"/><path d="M510.7 458.9C517.7 462.5 540.5 470.6 552.7 481.0C564.9 491.3 576.3 510.1 583.9 521.1C591.4 532.0 594.6 538.0 598.1 546.7C601.7 555.4 604.1 568.9 605.3 573.4" stroke="#000" stroke-width="2.0" stroke-opacity="0.26"/><path d="M515.0 455.0C520.0 457.2 536.2 462.3 545.0 468.0C553.8 473.7 564.2 485.5 568.0 489.0" stroke="#000" stroke-width="2.1" stroke-opacity="0.30"/><path d="M515.1 452.5C520.2 454.9 536.5 461.4 545.4 467.2C554.2 473.0 564.5 483.9 568.3 487.3" stroke="#000" stroke-width="1.1" stroke-opacity="0.21"/><path d="M514.8 454.5C519.9 456.8 536.4 462.7 545.4 468.3C554.4 473.8 565.0 484.7 568.9 487.9" stroke="#000" stroke-width="1.2" stroke-opacity="0.19"/><path d="M595.4 492.0C598.2 497.0 607.2 510.7 612.0 522.0C616.8 533.3 620.8 550.0 624.0 560.0C627.2 570.0 629.8 578.3 631.0 582.0" stroke="#000" stroke-width="5.5" stroke-opacity="0.60"/><path d="M595.2 491.0C598.0 496.1 607.1 510.0 612.0 521.5C616.9 533.0 621.5 549.9 624.8 560.0C628.0 570.1 630.5 578.4 631.6 582.1" stroke="#000" stroke-width="3.6" stroke-opacity="0.45"/><path d="M594.2 492.3C597.0 497.4 606.0 511.7 610.8 523.1C615.5 534.5 619.5 550.8 622.7 560.7C625.8 570.6 628.3 578.7 629.4 582.3" stroke="#000" stroke-width="2.5" stroke-opacity="0.33"/><path d="M605.0 532.0C607.0 536.7 613.5 551.3 617.0 560.0C620.5 568.7 624.5 580.0 626.0 584.0" stroke="#000" stroke-width="2.9" stroke-opacity="0.35"/><path d="M605.0 532.0C607.1 536.7 613.8 551.3 617.4 559.9C620.9 568.6 624.9 579.9 626.4 583.9" stroke="#000" stroke-width="1.9" stroke-opacity="0.22"/><path d="M617.0 579.3C622.5 576.1 637.7 566.8 650.0 560.0C662.3 553.2 679.0 543.2 691.0 538.7C703.0 534.2 716.8 533.7 722.0 532.7" stroke="#000" stroke-width="5.9" stroke-opacity="0.50"/><path d="M616.0 578.0C621.3 574.9 635.5 566.1 647.6 559.2C659.8 552.3 682.0 540.4 688.9 536.6" stroke="#000" stroke-width="3.1" stroke-opacity="0.34"/><path d="M615.5 578.6C620.9 575.4 635.8 565.8 648.1 559.3C660.4 552.8 677.1 543.8 689.2 539.4C701.2 535.0 715.2 534.2 720.4 533.1" stroke="#000" stroke-width="2.9" stroke-opacity="0.40"/><path d="M650.4 559.1C657.3 555.5 680.1 542.0 692.1 537.4C704.1 532.8 717.3 532.4 722.3 531.4" stroke="#000" stroke-width="3.4" stroke-opacity="0.25"/><path d="M622.0 578.0C625.8 575.5 637.3 567.5 645.0 563.0C652.7 558.5 664.2 553.0 668.0 551.0" stroke="#000" stroke-width="8.5" stroke-opacity="0.85"/><path d="M622.0 577.4C625.9 574.9 637.5 567.1 645.2 562.6C652.9 558.1 664.6 552.6 668.4 550.6" stroke="#000" stroke-width="5.5" stroke-opacity="0.66"/><path d="M623.4 576.8C627.2 574.4 638.7 566.8 646.4 562.2C654.1 557.7 665.7 551.7 669.5 549.6" stroke="#000" stroke-width="4.9" stroke-opacity="0.61"/><path d="M680.0 541.0L726.0 537.0" stroke="#000" stroke-width="5.2" stroke-opacity="0.45"/><path d="M681.1 542.1L727.2 538.0" stroke="#000" stroke-width="3.8" stroke-opacity="0.24"/><path d="M681.3 541.2L727.6 538.2" stroke="#000" stroke-width="3.4" stroke-opacity="0.24"/><path d="M620 586 L634 592 L633 578" stroke="#000" stroke-width="3.9" stroke-opacity="0.55"/><path d="M686.0 492.0C687.7 495.3 692.8 504.3 696.0 512.0C699.2 519.7 703.5 533.7 705.0 538.0" stroke="#000" stroke-width="3.9" stroke-opacity="0.28"/><path d="M684.9 490.5C686.5 493.8 691.5 502.9 694.6 510.6C697.8 518.3 702.3 532.3 703.8 536.7" stroke="#000" stroke-width="2.0" stroke-opacity="0.21"/><path d="M707.0 538.0C708.0 545.0 712.2 566.3 713.0 580.0C713.8 593.7 712.8 606.7 712.0 620.0C711.2 633.3 710.0 648.4 708.0 660.0C706.0 671.6 702.7 679.6 700.0 689.6C697.3 699.6 695.5 711.0 692.0 720.0C688.5 729.0 683.0 733.4 679.0 743.4C675.0 753.4 672.0 769.1 668.0 780.0C664.0 790.9 657.2 804.2 655.0 809.0" stroke="#000" stroke-width="6.5" stroke-opacity="0.42"/><path d="M708.8 542.1C709.2 548.6 710.9 568.1 711.3 581.4C711.6 594.7 711.1 608.4 710.9 622.1C710.7 635.8 712.1 652.0 710.1 663.4C708.0 674.8 701.1 680.4 698.4 690.3C695.7 700.2 697.1 713.7 693.8 722.9C690.6 732.1 683.4 735.3 679.0 745.4C674.5 755.5 670.9 772.4 666.9 783.6C662.9 794.8 656.9 807.9 655.0 812.7" stroke="#000" stroke-width="3.1" stroke-opacity="0.25"/><path d="M704.3 540.3C705.0 547.6 707.7 569.7 708.4 583.7C709.2 597.8 709.4 611.3 708.7 624.7C708.1 638.0 706.7 652.1 704.4 663.7C702.0 675.3 697.4 684.5 694.7 694.3C692.0 704.0 691.3 713.0 688.1 722.2C685.0 731.5 679.9 739.8 675.7 749.9C671.5 760.0 665.0 777.3 662.9 782.8" stroke="#000" stroke-width="3.5" stroke-opacity="0.28"/><path d="M709.5 541.0C710.2 548.5 712.8 572.0 713.6 586.2C714.3 600.4 714.7 613.0 713.9 626.2C713.2 639.5 711.3 654.4 708.9 665.6C706.5 676.9 702.3 683.5 699.7 693.7C697.2 703.8 696.7 717.4 693.6 726.7C690.5 735.9 685.6 739.3 681.2 749.2C676.9 759.1 671.6 775.4 667.4 786.2C663.3 797.0 658.2 809.4 656.4 814.1" stroke="#000" stroke-width="3.7" stroke-opacity="0.28"/><path d="M705.2 532.4C706.7 539.5 713.3 561.5 714.1 575.1C715.0 588.7 711.8 600.8 710.4 614.0C709.0 627.3 708.0 643.1 705.8 654.5C703.6 665.9 699.6 672.5 697.4 682.6C695.2 692.7 695.9 705.6 692.6 715.0C689.3 724.3 682.1 729.1 677.7 738.9C673.3 748.7 668.0 767.9 666.1 773.7" stroke="#000" stroke-width="4.2" stroke-opacity="0.33"/><path d="M709.8 585.0C710.3 591.5 712.8 610.8 712.4 624.0C712.0 637.2 709.5 652.9 707.5 664.3C705.4 675.7 702.7 682.0 699.9 692.3C697.0 702.7 694.1 717.3 690.2 726.4C686.2 735.5 680.6 737.5 676.3 747.0C671.9 756.4 668.2 771.9 664.1 783.2C660.1 794.4 654.2 809.3 652.2 814.5" stroke="#000" stroke-width="3.4" stroke-opacity="0.29"/><path d="M709.7 540.7C711.2 547.6 718.3 568.4 719.0 582.1C719.8 595.8 715.1 609.8 714.2 623.0C713.3 636.1 715.6 649.8 713.7 660.9C711.7 672.1 705.3 679.5 702.4 689.9C699.5 700.2 699.3 713.8 696.2 723.3C693.0 732.8 687.9 737.3 683.6 746.9C679.4 756.5 672.9 775.2 670.7 780.9" stroke="#000" stroke-width="3.7" stroke-opacity="0.22"/><path d="M706.6 532.3C707.5 539.5 711.5 561.7 712.0 575.4C712.6 589.2 711.2 601.3 710.0 614.8C708.8 628.4 706.7 644.9 704.9 656.9C703.1 668.9 702.0 677.0 699.3 686.7C696.7 696.5 692.5 707.0 689.1 715.5C685.7 724.0 683.0 728.0 679.0 737.6C675.1 747.3 667.6 767.5 665.3 773.5" stroke="#000" stroke-width="3.9" stroke-opacity="0.28"/><path d="M708.7 539.1C709.4 546.2 712.7 567.9 713.2 581.7C713.8 595.4 712.4 608.2 711.9 621.5C711.4 634.9 712.1 650.2 710.1 661.8C708.2 673.5 702.6 681.6 700.1 691.4C697.6 701.2 698.6 711.6 695.1 720.4C691.6 729.2 683.0 734.3 679.0 744.1C675.0 753.9 675.1 768.1 670.9 779.0C666.7 789.9 656.7 804.4 653.8 809.5" stroke="#000" stroke-width="4.7" stroke-opacity="0.26"/><path d="M716.0 536.0C717.2 543.3 722.2 565.2 723.0 580.0C723.8 594.8 722.2 610.8 721.0 625.0C719.8 639.2 718.5 652.5 716.0 665.0C713.5 677.5 709.3 689.2 706.0 700.0C702.7 710.8 699.7 721.3 696.0 730.0C692.3 738.7 686.0 748.3 684.0 752.0" stroke="#000" stroke-width="6.5" stroke-opacity="0.34"/><path d="M726.0 575.8C725.7 583.6 725.0 608.1 724.1 622.3C723.3 636.5 723.0 648.6 721.1 661.0C719.2 673.4 716.3 685.9 712.7 696.7C709.1 707.6 703.3 717.0 699.5 726.0C695.7 735.0 691.5 746.8 689.8 751.0" stroke="#000" stroke-width="4.7" stroke-opacity="0.19"/><path d="M721.4 535.4C722.6 542.8 728.4 564.6 729.0 579.8C729.7 595.0 726.7 612.3 725.1 626.6C723.5 641.0 721.9 653.6 719.3 665.9C716.6 678.3 712.2 689.7 709.1 700.6C705.9 711.5 701.9 726.3 700.4 731.4" stroke="#000" stroke-width="5.1" stroke-opacity="0.23"/><path d="M712.3 533.3C713.4 540.4 718.0 561.4 719.2 576.3C720.3 591.3 720.4 608.4 719.3 623.1C718.2 637.8 715.3 652.0 712.4 664.5C709.6 676.9 705.5 687.1 702.1 697.8C698.7 708.5 695.1 720.5 691.9 729.0C688.6 737.4 684.2 745.3 682.7 748.6" stroke="#000" stroke-width="4.8" stroke-opacity="0.20"/><path d="M715.9 534.5C716.9 542.1 721.5 565.1 722.0 580.2C722.6 595.4 720.2 611.3 719.1 625.2C718.1 639.1 718.1 651.3 715.8 663.7C713.6 676.0 709.3 688.0 705.8 699.3C702.4 710.6 699.6 722.3 695.4 731.3C691.3 740.3 683.4 749.6 681.0 753.3" stroke="#000" stroke-width="3.6" stroke-opacity="0.17"/><path d="M710.2 542.4C711.4 549.6 716.8 571.3 717.7 585.7C718.6 600.0 716.3 614.7 715.5 628.4C714.7 642.2 715.2 655.1 712.8 668.1C710.5 681.1 704.8 695.1 701.5 706.4C698.2 717.8 694.4 731.3 693.0 736.3" stroke="#000" stroke-width="4.5" stroke-opacity="0.17"/><path d="M715.8 531.7C716.7 539.7 720.4 563.9 721.1 579.3C721.9 594.6 721.4 610.0 720.3 623.8C719.2 637.7 717.2 650.1 714.5 662.3C711.9 674.5 707.9 686.1 704.6 697.0C701.3 708.0 698.4 719.2 694.8 728.1C691.1 736.9 684.7 746.6 682.6 750.3" stroke="#000" stroke-width="3.2" stroke-opacity="0.21"/><path d="M727.0 545.0C728.7 554.2 736.0 584.2 737.0 600.0C738.0 615.8 734.5 628.3 733.0 640.0C731.5 651.7 730.0 661.3 728.0 670.0C726.0 678.7 722.2 688.3 721.0 692.0" stroke="#000" stroke-width="2.3" stroke-opacity="0.25"/><path d="M726.7 546.2C728.6 555.6 736.6 586.4 737.7 602.3C738.8 618.1 735.1 629.8 733.4 641.3C731.6 652.8 729.6 662.7 727.5 671.3C725.3 679.9 721.5 689.3 720.3 692.9" stroke="#000" stroke-width="1.4" stroke-opacity="0.17"/><path d="M475.9 706.0C479.9 707.3 491.1 712.3 500.0 714.0C508.9 715.7 519.3 716.3 529.6 716.0C539.9 715.7 552.0 715.2 562.0 712.0C572.0 708.8 580.6 701.7 589.4 697.0C598.2 692.3 607.5 688.5 615.0 684.0C622.5 679.5 631.0 672.5 634.2 670.2" stroke="#000" stroke-width="5.9" stroke-opacity="0.80"/><path d="M499.7 712.7C504.6 713.1 519.0 715.5 529.4 715.2C539.8 714.9 552.1 714.2 562.0 710.9C571.9 707.6 580.2 700.0 588.9 695.4C597.7 690.8 607.1 687.6 614.5 683.2C622.0 678.7 630.5 671.1 633.7 668.7" stroke="#000" stroke-width="4.7" stroke-opacity="0.40"/><path d="M475.9 707.3C480.0 708.6 491.2 713.3 500.2 714.9C509.1 716.5 519.1 717.0 529.6 716.8C540.0 716.5 552.6 716.7 562.7 713.5C572.8 710.3 581.4 702.4 590.2 697.7C599.0 692.9 611.3 687.1 615.5 685.0" stroke="#000" stroke-width="2.6" stroke-opacity="0.58"/><path d="M495.0 711.0C500.0 712.7 515.8 719.8 525.0 721.0C534.2 722.2 541.7 719.7 550.0 718.0C558.3 716.3 567.0 714.3 575.0 711.0C583.0 707.7 594.2 700.2 598.0 698.0" stroke="#000" stroke-width="5.2" stroke-opacity="0.60"/><path d="M496.1 711.6C501.0 713.2 516.5 720.1 525.7 721.2C534.9 722.2 542.8 719.6 551.3 717.9C559.7 716.2 568.3 714.2 576.2 710.9C584.2 707.6 595.2 700.3 599.0 698.2" stroke="#000" stroke-width="2.9" stroke-opacity="0.41"/><path d="M560 717 Q590 713 606 709" stroke="#000" stroke-width="2.1" stroke-opacity="0.35"/><path d="M648.4 701.5 L612 740 L634 778 L657 778 L653 740 Z" fill="#000" fill-opacity=".38" stroke="none"/><path d="M480.0 778.8C493.6 777.7 540.7 775.4 561.5 772.0C582.3 768.6 592.1 763.3 604.9 758.6C617.8 754.0 633.0 746.4 638.6 744.0" stroke="#000" stroke-width="4.8" stroke-opacity="0.39"/><path d="M477.3 772.7C492.5 771.8 547.6 770.1 568.9 767.3C590.2 764.6 593.3 760.8 605.0 756.2C616.8 751.5 633.5 742.2 639.2 739.4" stroke="#000" stroke-width="4.4" stroke-opacity="0.46"/><path d="M465.9 764.9C481.8 764.0 538.2 762.3 561.4 759.4C584.7 756.6 592.2 754.0 605.5 747.9C618.9 741.7 635.6 726.9 641.6 722.7" stroke="#000" stroke-width="5.2" stroke-opacity="0.47"/><path d="M465.8 755.2C482.2 754.2 540.8 752.3 564.2 749.3C587.5 746.3 592.7 744.1 605.9 737.3C619.1 730.6 637.3 713.7 643.6 709.0" stroke="#000" stroke-width="3.7" stroke-opacity="0.30"/><path d="M494.0 769.0C505.4 767.5 543.7 763.4 562.3 760.4C580.8 757.3 592.3 755.7 605.3 750.8C618.3 745.9 634.6 734.3 640.4 731.0" stroke="#000" stroke-width="5.5" stroke-opacity="0.43"/><path d="M485.7 775.3C499.2 773.4 546.8 767.3 566.7 764.1C586.6 760.8 593.0 760.1 605.1 755.7C617.2 751.3 633.8 740.5 639.5 737.5" stroke="#000" stroke-width="4.0" stroke-opacity="0.39"/><path d="M473.2 761.9C487.8 760.9 538.4 758.4 560.5 755.7C582.5 752.9 592.0 750.8 605.5 745.3C619.0 739.8 635.6 726.4 641.6 722.6" stroke="#000" stroke-width="4.5" stroke-opacity="0.29"/><path d="M483.7 758.6C496.3 758.0 539.0 757.1 559.3 754.9C579.6 752.7 591.8 751.5 605.6 745.5C619.5 739.4 636.1 723.0 642.2 718.5" stroke="#000" stroke-width="3.3" stroke-opacity="0.42"/><path d="M491.8 793.5C504.9 791.5 551.6 785.4 570.4 781.6C589.1 777.9 593.4 773.4 604.3 770.8C615.1 768.3 630.2 766.9 635.4 766.1" stroke="#000" stroke-width="3.2" stroke-opacity="0.38"/><path d="M491.1 768.1C502.8 767.5 542.8 766.6 561.8 764.1C580.9 761.6 592.2 758.3 605.3 752.9C618.3 747.5 634.5 735.2 640.3 731.7" stroke="#000" stroke-width="3.9" stroke-opacity="0.36"/><path d="M507.4 778.1C517.9 777.1 554.0 775.2 570.3 772.1C586.5 769.0 593.5 763.9 604.8 759.6C616.2 755.4 632.7 748.7 638.2 746.5" stroke="#000" stroke-width="4.7" stroke-opacity="0.35"/><path d="M480.8 753.8C494.1 753.6 540.0 754.6 560.9 752.5C581.7 750.5 592.1 748.4 605.9 741.4C619.6 734.5 637.1 716.0 643.3 711.0" stroke="#000" stroke-width="4.9" stroke-opacity="0.29"/><path d="M649.1 703.0C641.8 708.0 619.9 725.2 605.0 733.0C590.1 740.8 576.2 746.0 559.5 750.0C542.8 754.0 522.4 757.1 505.0 757.0C487.6 756.9 463.3 750.7 455.0 749.4" stroke="#000" stroke-width="5.2" stroke-opacity="0.60"/><path d="M649.9 704.0C642.5 708.7 620.2 725.0 605.6 732.5C590.9 740.1 578.6 745.4 562.0 749.4C545.4 753.4 523.4 756.6 505.9 756.7C488.4 756.7 465.3 750.9 457.2 749.7" stroke="#000" stroke-width="3.1" stroke-opacity="0.31"/><path d="M652.0 704.6C644.2 709.3 620.7 724.6 605.3 732.4C589.9 740.3 576.3 747.9 559.6 751.8C542.9 755.7 514.3 755.2 505.2 755.9" stroke="#000" stroke-width="3.6" stroke-opacity="0.39"/><path d="M602.5 736.2C594.9 738.6 573.6 746.7 556.5 750.5C539.4 754.3 517.9 758.5 499.9 759.0C481.9 759.4 457.1 754.2 448.6 753.3" stroke="#000" stroke-width="2.9" stroke-opacity="0.35"/><path d="M652.7 703.2C645.1 708.2 621.5 724.7 606.8 732.8C592.1 740.9 580.7 747.8 564.6 751.8C548.4 755.7 527.9 757.2 510.0 756.6C492.2 756.0 466.2 749.6 457.4 748.2" stroke="#000" stroke-width="3.0" stroke-opacity="0.38"/><path d="M603.7 735.5C596.3 737.8 576.2 745.3 559.6 749.0C543.0 752.8 521.7 757.7 504.1 758.0C486.6 758.2 462.8 751.7 454.5 750.5" stroke="#000" stroke-width="3.8" stroke-opacity="0.35"/><path d="M651.6 705.8C644.5 710.8 623.6 728.2 608.8 735.8C594.1 743.4 580.1 747.1 563.1 751.3C546.1 755.4 516.2 759.0 506.8 760.6" stroke="#000" stroke-width="2.7" stroke-opacity="0.47"/><path d="M649.7 706.7C642.5 711.4 621.4 727.2 606.3 735.2C591.2 743.1 576.0 749.9 559.0 754.4C541.9 758.8 513.3 760.5 504.2 761.7" stroke="#000" stroke-width="4.1" stroke-opacity="0.37"/><path d="M645.0 708.0C637.5 713.8 614.2 734.7 600.0 743.0C585.8 751.3 573.3 754.3 560.0 758.0C546.7 761.7 533.7 765.0 520.0 765.0C506.3 765.0 485.0 759.2 478.0 758.0" stroke="#000" stroke-width="5.2" stroke-opacity="0.42"/><path d="M648.2 706.3C640.2 711.7 614.5 730.9 600.2 738.8C585.9 746.7 575.3 749.9 562.4 753.7C549.5 757.6 529.5 760.4 522.9 761.8" stroke="#000" stroke-width="2.6" stroke-opacity="0.32"/><path d="M641.9 712.6C634.9 718.2 614.4 737.9 600.2 746.0C585.9 754.0 569.9 757.4 556.4 760.9C542.8 764.5 525.1 766.2 518.8 767.3" stroke="#000" stroke-width="3.1" stroke-opacity="0.30"/><path d="M598.1 748.0C591.1 750.1 570.0 756.9 556.2 760.4C542.5 764.0 529.2 768.9 515.5 769.3C501.8 769.7 481.0 764.1 474.1 763.0" stroke="#000" stroke-width="3.9" stroke-opacity="0.29"/><path d="M644.0 703.0C637.0 709.2 616.1 731.5 602.0 740.3C587.9 749.0 573.2 752.1 559.3 755.6C545.4 759.1 531.7 761.7 518.5 761.3C505.4 760.9 486.7 754.6 480.3 753.3" stroke="#000" stroke-width="3.5" stroke-opacity="0.22"/><path d="M642.3 708.5C634.8 714.3 611.2 735.8 597.0 743.6C582.9 751.5 570.6 752.6 557.5 755.8C544.4 759.0 532.1 762.4 518.6 762.9C505.1 763.4 483.5 759.4 476.5 758.6" stroke="#000" stroke-width="3.2" stroke-opacity="0.21"/><path d="M645.7 702.5C638.2 708.5 614.8 729.7 600.4 738.4C586.1 747.1 573.2 751.1 559.6 754.6C546.0 758.2 532.1 759.9 518.8 759.7C505.5 759.4 486.4 754.4 479.9 753.3" stroke="#000" stroke-width="3.9" stroke-opacity="0.27"/><path d="M462.0 750.0C468.3 749.7 487.0 747.5 500.0 748.0C513.0 748.5 533.3 752.2 540.0 753.0" stroke="#000" stroke-width="5.9" stroke-opacity="0.45"/><path d="M461.2 747.8C467.4 747.5 485.8 745.8 498.6 746.4C511.4 747.0 531.4 750.5 538.0 751.3" stroke="#000" stroke-width="3.0" stroke-opacity="0.30"/><path d="M461.5 749.3C467.9 748.9 486.5 746.2 499.6 746.9C512.6 747.5 532.9 752.0 539.6 753.1" stroke="#000" stroke-width="3.7" stroke-opacity="0.35"/><path d="M652.0 703.0C652.2 709.2 652.4 727.8 653.0 740.0C653.6 752.2 655.1 770.0 655.5 776.0" stroke="#000" stroke-width="5.2" stroke-opacity="0.78"/><path d="M650.8 704.3C651.0 710.5 651.4 729.1 651.9 741.2C652.4 753.4 653.7 771.3 654.1 777.3" stroke="#000" stroke-width="2.6" stroke-opacity="0.45"/><path d="M650.9 702.5C651.1 708.7 651.7 727.2 652.2 739.3C652.8 751.5 654.1 769.5 654.4 775.5" stroke="#000" stroke-width="3.4" stroke-opacity="0.57"/><path d="M634.0 776.0L660.0 781.0" stroke="#000" stroke-width="4.7" stroke-opacity="0.60"/><path d="M634.2 775.2L660.8 779.8" stroke="#000" stroke-width="3.1" stroke-opacity="0.42"/><path d="M619.3 740.4C611.1 745.7 591.4 762.5 570.0 772.0C548.6 781.5 504.0 793.0 490.8 797.2" stroke="#000" stroke-width="4.9" stroke-opacity="0.50"/><path d="M623.2 738.8C615.1 743.8 595.7 759.4 574.3 768.8C553.0 778.3 508.4 791.0 495.2 795.5" stroke="#000" stroke-width="2.9" stroke-opacity="0.26"/><path d="M617.6 741.2C609.2 746.5 588.8 763.3 567.1 772.8C545.4 782.3 500.7 794.0 487.4 798.3" stroke="#000" stroke-width="2.8" stroke-opacity="0.40"/><path d="M623.7 743.0C615.7 748.5 596.7 766.5 575.5 776.1C554.2 785.6 509.4 796.3 496.2 800.3" stroke="#000" stroke-width="2.6" stroke-opacity="0.34"/><path d="M620.9 743.8C612.9 748.7 593.5 763.9 572.6 773.4C551.7 782.8 508.4 795.9 495.6 800.4" stroke="#000" stroke-width="3.5" stroke-opacity="0.27"/><path d="M623.7 745.2C615.5 750.5 595.8 767.7 574.2 777.0C552.5 786.3 507.4 796.9 494.1 800.9" stroke="#000" stroke-width="3.6" stroke-opacity="0.37"/><path d="M624.3 738.7C616.1 743.7 596.4 759.2 574.9 768.8C553.5 778.4 509.0 791.8 495.8 796.4" stroke="#000" stroke-width="2.7" stroke-opacity="0.38"/><path d="M640 730 L622 766 M646 742 L634 772" stroke="#fff" stroke-width="1.0" stroke-opacity="0.30"/><path d="M440.0 809.0C445.0 811.7 460.0 821.3 470.0 825.0C480.0 828.7 489.8 829.7 499.8 831.0C509.8 832.3 520.0 834.5 530.0 833.0C540.0 831.5 547.8 826.7 559.5 822.0C571.2 817.3 588.1 812.7 600.0 805.0C611.9 797.3 625.8 780.8 631.0 776.0" stroke="#000" stroke-width="10.4" stroke-opacity="0.88"/><path d="M437.7 805.7C442.7 808.8 457.7 820.0 467.8 823.9C477.9 827.8 488.3 828.0 498.2 829.3C508.2 830.5 517.5 833.0 527.5 831.5C537.5 830.0 546.3 824.8 558.3 820.2C570.3 815.5 587.6 811.6 599.3 803.6C611.0 795.6 623.7 777.5 628.6 772.3" stroke="#000" stroke-width="7.7" stroke-opacity="0.53"/><path d="M470.7 826.1C475.5 827.6 489.4 833.0 499.3 834.7C509.3 836.3 520.4 837.8 530.5 836.0C540.6 834.3 548.6 829.0 560.1 824.2C571.7 819.4 587.7 814.7 599.8 807.2C612.0 799.7 627.4 783.8 632.9 779.1" stroke="#000" stroke-width="5.7" stroke-opacity="0.63"/><path d="M440.5 809.1C445.5 811.7 460.1 821.1 470.1 824.8C480.1 828.5 490.6 829.5 500.4 831.3C510.2 833.1 519.1 837.2 528.8 835.8C538.5 834.3 546.6 827.3 558.6 822.4C570.6 817.6 593.8 809.3 600.8 806.6" stroke="#000" stroke-width="6.5" stroke-opacity="0.70"/><path d="M436.4 811.7C441.3 814.2 455.5 823.0 465.9 826.6C476.3 830.2 488.3 832.1 498.7 833.5C509.2 834.9 518.9 836.5 528.5 834.8C538.1 833.2 545.0 827.7 556.5 823.4C568.1 819.0 585.7 816.3 597.7 808.8C609.7 801.3 623.4 783.3 628.6 778.3" stroke="#000" stroke-width="7.9" stroke-opacity="0.62"/><path d="M436.4 811.5C441.4 814.0 456.1 823.2 466.2 826.5C476.2 829.9 486.7 830.3 496.8 831.6C506.9 832.9 516.6 836.0 526.7 834.6C536.8 833.1 545.8 827.5 557.4 823.0C569.0 818.5 584.7 815.0 596.2 807.5C607.6 800.0 621.2 783.0 626.2 778.1" stroke="#000" stroke-width="6.7" stroke-opacity="0.56"/><path d="M442.7 812.9C447.4 815.4 460.9 823.8 470.5 827.6C480.2 831.3 490.2 834.3 500.6 835.6C511.1 836.8 523.1 836.7 533.3 835.0C543.5 833.3 550.6 829.9 561.8 825.4C573.0 820.8 594.1 810.7 600.6 807.8" stroke="#000" stroke-width="5.7" stroke-opacity="0.58"/><path d="M439.8 813.8C444.9 816.2 459.8 824.8 469.9 828.4C480.1 832.1 490.6 834.2 500.6 835.5C510.7 836.8 520.5 837.7 530.0 836.1C539.5 834.5 546.0 830.5 557.8 826.1C569.5 821.7 588.4 817.7 600.4 809.8C612.4 801.9 625.0 783.9 629.9 778.7" stroke="#000" stroke-width="7.9" stroke-opacity="0.48"/><path d="M446.0 800.0C451.7 803.3 469.3 815.8 480.0 820.0C490.7 824.2 499.2 824.0 510.0 825.0C520.8 826.0 534.2 828.3 545.0 826.0C555.8 823.7 564.2 817.0 575.0 811.0C585.8 805.0 599.8 797.2 610.0 790.0C620.2 782.8 631.7 771.7 636.0 768.0" stroke="#000" stroke-width="7.8" stroke-opacity="0.70"/><path d="M480.8 818.1C486.0 819.1 501.3 823.3 512.1 824.3C522.9 825.3 534.7 826.6 545.6 824.0C556.4 821.4 566.2 814.7 577.1 808.7C588.0 802.8 600.9 795.4 610.8 788.2C620.7 781.1 632.1 769.6 636.4 765.9" stroke="#000" stroke-width="6.1" stroke-opacity="0.41"/><path d="M444.4 802.7C450.1 806.0 468.2 818.7 478.8 822.6C489.4 826.5 497.3 825.5 508.1 826.3C519.0 827.2 533.1 830.1 544.0 828.0C554.9 825.8 562.8 819.5 573.6 813.4C584.5 807.3 598.9 798.7 609.0 791.6C619.1 784.5 630.0 774.3 634.2 770.9" stroke="#000" stroke-width="4.3" stroke-opacity="0.48"/><path d="M460.0 819.0C466.7 822.3 486.7 836.3 500.0 839.0C513.3 841.7 526.7 837.2 540.0 835.0C553.3 832.8 567.5 831.8 580.0 826.0C592.5 820.2 609.2 804.3 615.0 800.0" stroke="#000" stroke-width="4.5" stroke-opacity="0.50"/><path d="M457.9 821.0C464.7 824.2 485.3 837.6 498.9 840.1C512.6 842.5 526.5 838.1 539.7 835.9C552.9 833.6 565.9 832.2 578.3 826.5C590.7 820.8 608.0 806.0 613.9 801.9" stroke="#000" stroke-width="2.7" stroke-opacity="0.37"/><path d="M458.3 819.0C465.0 822.2 484.9 835.9 498.3 838.4C511.7 840.9 525.2 836.0 538.6 833.8C552.0 831.7 566.6 831.4 578.9 825.5C591.3 819.7 607.1 803.3 612.7 798.8" stroke="#000" stroke-width="2.6" stroke-opacity="0.28"/><path d="M440.0 785.0L484.8 786.7" stroke="#000" stroke-width="5.2" stroke-opacity="0.60"/><path d="M441.1 785.3L486.4 786.4" stroke="#000" stroke-width="3.0" stroke-opacity="0.31"/><path d="M500.0 826.4C506.7 826.3 526.7 829.4 540.0 826.0C553.3 822.6 567.5 812.7 580.0 806.0C592.5 799.3 605.0 793.7 615.0 786.0C625.0 778.3 635.8 764.3 640.0 760.0" stroke="#000" stroke-width="7.2" stroke-opacity="0.70"/><path d="M500.2 826.7C506.8 826.5 526.5 829.4 539.8 825.9C553.0 822.3 567.2 812.2 579.8 805.6C592.3 799.1 605.1 794.2 615.2 786.5C625.3 778.8 636.0 764.0 640.2 759.5" stroke="#000" stroke-width="5.1" stroke-opacity="0.46"/><path d="M502.0 828.5C508.6 828.5 528.7 831.6 541.8 828.2C555.0 824.8 568.5 814.7 581.0 807.9C593.5 801.2 606.9 795.6 616.9 787.8C627.0 779.9 637.2 765.4 641.2 760.9" stroke="#000" stroke-width="5.3" stroke-opacity="0.41"/></g><path d="M542.9 349.1 A274.3 274.3 0 0 1 715.1 533.4" stroke="#000" stroke-width="3.6" fill="none"/><path d="M662.2 782.5 A274.3 274.3 0 1 1 447.0 333.2" stroke="#000" stroke-width="3.6" fill="none"/><path d="M524.1 370.5 A248.0 248.0 0 0 1 690.7 543.7" stroke="#000" stroke-width="3.0" fill="none"/><path d="M633.4 775.5 A248.0 248.0 0 0 1 291.0 797.0" stroke="#000" stroke-width="3.0" fill="none"/><path d="M248.6 750.8 A248.0 248.0 0 0 1 337.3 387.1" stroke="#000" stroke-width="3.0" fill="none"/><path d="M223.4 695.6 A244.0 244.0 0 0 1 330.3 395.5" stroke="#000" stroke-opacity=".3" stroke-width="3.4" fill="none"/><path d="M215.8 562.1 A239.5 239.5 0 0 1 228.0 520.1" stroke="#000" stroke-opacity=".15" stroke-width="3" fill="none"/></g><g filter="url(#ash)"><path d="M368.9 241.4 L276 282.7" stroke="#e8173a" stroke-width="3.4" stroke-linecap="round"/><path d="M254.6 292.1 L273.3 273.3 L282 291.4 Z" fill="#e8173a"/><path d="M404 294.4 L280 331.6" stroke="#e8173a" stroke-width="3.4" stroke-linecap="round"/><path d="M257.6 338.4 L279.3 322.8 L285 340.4 Z" fill="#e8173a"/></g></svg>
<span class="t" style="left:480px;top:5.50px;font-size:13px;line-height:13px;color:#e0e0e0;transform:scaleX(1.0707);transform-origin:0 0;-webkit-text-stroke:0;">Artboard 1</span>
</div>
<div style="left:1069.5px;top:146px;width:16.5px;height:812px;background:#353535;"></div>
<div style="left:1071px;top:544.5px;width:13.8px;height:79.7px;background:#5e5e5e;border-radius:5.5px;"></div>
<svg style="left:1071px;top:129.5px;" width="14" height="9" viewBox="0 0 14 9"><path d="M1.5 7.5 L7 2 L12.5 7.5" stroke="#d0d0d0" stroke-width="1.4" fill="none"/></svg>
<svg style="left:1071px;top:949.2px;" width="14" height="9" viewBox="0 0 14 9"><path d="M1.5 1.5 L7 7 L12.5 1.5" stroke="#d0d0d0" stroke-width="1.4" fill="none"/></svg>
<svg style="left:1070px;top:960px;" width="14" height="14" viewBox="0 0 14 14"><rect x="1" y="1" width="12" height="12" rx="1.5" fill="none" stroke="#d0d0d0" stroke-width="1.1"/><path d="M7 0.5 V4.5 M7 9.5 V13.5 M0.5 7 H4.5 M9.5 7 H13.5" stroke="#d0d0d0" stroke-width="1.1"/></svg>
<div class="clip" style="left:80.6px;top:121.5px;width:986.7px;height:24px;">
<svg style="left:0px;top:0px;" width="987" height="24" viewBox="0 0 987 24"><path d="M-19.21 14.6 V21" stroke="#a9a9a9" stroke-width="1.1"/><path d="M-13.84 3.2 V21" stroke="#c4c4c4" stroke-width="1.1"/><path d="M-8.47 14.6 V21" stroke="#a9a9a9" stroke-width="1.1"/><path d="M-3.10 14.6 V21" stroke="#a9a9a9" stroke-width="1.1"/><path d="M2.27 14.6 V21" stroke="#a9a9a9" stroke-width="1.1"/><path d="M7.64 14.6 V21" stroke="#a9a9a9" stroke-width="1.1"/><path d="M13.02 8 V21" stroke="#a9a9a9" stroke-width="1.1"/><path d="M18.39 14.6 V21" stroke="#a9a9a9" stroke-width="1.1"/><path d="M23.76 14.6 V21" stroke="#a9a9a9" stroke-width="1.1"/><path d="M29.13 14.6 V21" stroke="#a9a9a9" stroke-width="1.1"/><path d="M34.50 14.6 V21" stroke="#a9a9a9" stroke-width="1.1"/><path d="M39.87 3.2 V21" stroke="#c4c4c4" stroke-width="1.1"/><path d="M45.24 14.6 V21" stroke="#a9a9a9" stroke-width="1.1"/><path d="M50.61 14.6 V21" stroke="#a9a9a9" stroke-width="1.1"/><path d="M55.98 14.6 V21" stroke="#a9a9a9" stroke-width="1.1"/><path d="M61.35 14.6 V21" stroke="#a9a9a9" stroke-width="1.1"/><path d="M66.73 8 V21" stroke="#a9a9a9" stroke-width="1.1"/><path d="M72.10 14.6 V21" stroke="#a9a9a9" stroke-width="1.1"/><path d="M77.47 14.6 V21" stroke="#a9a9a9" stroke-width="1.1"/><path d="M82.84 14.6 V21" stroke="#a9a9a9" stroke-width="1.1"/><path d="M88.21 14.6 V21" stroke="#a9a9a9" stroke-width="1.1"/><path d="M93.58 3.2 V21" stroke="#c4c4c4" stroke-width="1.1"/><path d="M98.95 14.6 V21" stroke="#a9a9a9" stroke-width="1.1"/><path d="M104.32 14.6 V21" stroke="#a9a9a9" stroke-width="1.1"/><path d="M109.69 14.6 V21" stroke="#a9a9a9" stroke-width="1.1"/><path d="M115.06 14.6 V21" stroke="#a9a9a9" stroke-width="1.1"/><path d="M120.44 8 V21" stroke="#a9a9a9" stroke-width="1.1"/><path d="M125.81 14.6 V21" stroke="#a9a9a9" stroke-width="1.1"/><path d="M131.18 14.6 V21" stroke="#a9a9a9" stroke-width="1.1"/><path d="M136.55 14.6 V21" stroke="#a9a9a9" stroke-width="1.1"/><path d="M141.92 14.6 V21" stroke="#a9a9a9" stroke-width="1.1"/><path d="M147.29 3.2 V21" stroke="#c4c4c4" stroke-width="1.1"/><path d="M152.66 14.6 V21" stroke="#a9a9a9" stroke-width="1.1"/><path d="M158.03 14.6 V21" stroke="#a9a9a9" stroke-width="1.1"/><path d="M163.40 14.6 V21" stroke="#a9a9a9" stroke-width="1.1"/><path d="M168.77 14.6 V21" stroke="#a9a9a9" stroke-width="1.1"/><path d="M174.15 8 V21" stroke="#a9a9a9" stroke-width="1.1"/><path d="M179.52 14.6 V21" stroke="#a9a9a9" stroke-width="1.1"/><path d="M184.89 14.6 V21" stroke="#a9a9a9" stroke-width="1.1"/><path d="M190.26 14.6 V21" stroke="#a9a9a9" stroke-width="1.1"/><path d="M195.63 14.6 V21" stroke="#a9a9a9" stroke-width="1.1"/><path d="M201.00 3.2 V21" stroke="#c4c4c4" stroke-width="1.1"/><path d="M206.37 14.6 V21" stroke="#a9a9a9" stroke-width="1.1"/><path d="M211.74 14.6 V21" stroke="#a9a9a9" stroke-width="1.1"/><path d="M217.11 14.6 V21" stroke="#a9a9a9" stroke-width="1.1"/><path d="M222.48 14.6 V21" stroke="#a9a9a9" stroke-width="1.1"/><path d="M227.86 8 V21" stroke="#a9a9a9" stroke-width="1.1"/><path d="M233.23 14.6 V21" stroke="#a9a9a9" stroke-width="1.1"/><path d="M238.60 14.6 V21" stroke="#a9a9a9" stroke-width="1.1"/><path d="M243.97 14.6 V21" stroke="#a9a9a9" stroke-width="1.1"/><path d="M249.34 14.6 V21" stroke="#a9a9a9" stroke-width="1.1"/><path d="M254.71 3.2 V21" stroke="#c4c4c4" stroke-width="1.1"/><path d="M260.08 14.6 V21" stroke="#a9a9a9" stroke-width="1.1"/><path d="M265.45 14.6 V21" stroke="#a9a9a9" stroke-width="1.1"/><path d="M270.82 14.6 V21" stroke="#a9a9a9" stroke-width="1.1"/><path d="M276.19 14.6 V21" stroke="#a9a9a9" stroke-width="1.1"/><path d="M281.57 8 V21" stroke="#a9a9a9" stroke-width="1.1"/><path d="M286.94 14.6 V21" stroke="#a9a9a9" stroke-width="1.1"/><path d="M292.31 14.6 V21" stroke="#a9a9a9" stroke-width="1.1"/><path d="M297.68 14.6 V21" stroke="#a9a9a9" stroke-width="1.1"/><path d="M303.05 14.6 V21" stroke="#a9a9a9" stroke-width="1.1"/><path d="M308.42 3.2 V21" stroke="#c4c4c4" stroke-width="1.1"/><path d="M313.79 14.6 V21" stroke="#a9a9a9" stroke-width="1.1"/><path d="M319.16 14.6 V21" stroke="#a9a9a9" stroke-width="1.1"/><path d="M324.53 14.6 V21" stroke="#a9a9a9" stroke-width="1.1"/><path d="M329.90 14.6 V21" stroke="#a9a9a9" stroke-width="1.1"/><path d="M335.27 8 V21" stroke="#a9a9a9" stroke-width="1.1"/><path d="M340.65 14.6 V21" stroke="#a9a9a9" stroke-width="1.1"/><path d="M346.02 14.6 V21" stroke="#a9a9a9" stroke-width="1.1"/><path d="M351.39 14.6 V21" stroke="#a9a9a9" stroke-width="1.1"/><path d="M356.76 14.6 V21" stroke="#a9a9a9" stroke-width="1.1"/><path d="M362.13 3.2 V21" stroke="#c4c4c4" stroke-width="1.1"/><path d="M367.50 14.6 V21" stroke="#a9a9a9" stroke-width="1.1"/><path d="M372.87 14.6 V21" stroke="#a9a9a9" stroke-width="1.1"/><path d="M378.24 14.6 V21" stroke="#a9a9a9" stroke-width="1.1"/><path d="M383.61 14.6 V21" stroke="#a9a9a9" stroke-width="1.1"/><path d="M388.99 8 V21" stroke="#a9a9a9" stroke-width="1.1"/><path d="M394.36 14.6 V21" stroke="#a9a9a9" stroke-width="1.1"/><path d="M399.73 14.6 V21" stroke="#a9a9a9" stroke-width="1.1"/><path d="M405.10 14.6 V21" stroke="#a9a9a9" stroke-width="1.1"/><path d="M410.47 14.6 V21" stroke="#a9a9a9" stroke-width="1.1"/><path d="M415.84 3.2 V21" stroke="#c4c4c4" stroke-width="1.1"/><path d="M421.21 14.6 V21" stroke="#a9a9a9" stroke-width="1.1"/><path d="M426.58 14.6 V21" stroke="#a9a9a9" stroke-width="1.1"/><path d="M431.95 14.6 V21" stroke="#a9a9a9" stroke-width="1.1"/><path d="M437.32 14.6 V21" stroke="#a9a9a9" stroke-width="1.1"/><path d="M442.70 8 V21" stroke="#a9a9a9" stroke-width="1.1"/><path d="M448.07 14.6 V21" stroke="#a9a9a9" stroke-width="1.1"/><path d="M453.44 14.6 V21" stroke="#a9a9a9" stroke-width="1.1"/><path d="M458.81 14.6 V21" stroke="#a9a9a9" stroke-width="1.1"/><path d="M464.18 14.6 V21" stroke="#a9a9a9" stroke-width="1.1"/><path d="M469.55 3.2 V21" stroke="#c4c4c4" stroke-width="1.1"/><path d="M474.92 14.6 V21" stroke="#a9a9a9" stroke-width="1.1"/><path d="M480.29 14.6 V21" stroke="#a9a9a9" stroke-width="1.1"/><path d="M485.66 14.6 V21" stroke="#a9a9a9" stroke-width="1.1"/><path d="M491.03 14.6 V21" stroke="#a9a9a9" stroke-width="1.1"/><path d="M496.41 8 V21" stroke="#a9a9a9" stroke-width="1.1"/><path d="M501.78 14.6 V21" stroke="#a9a9a9" stroke-width="1.1"/><path d="M507.15 14.6 V21" stroke="#a9a9a9" stroke-width="1.1"/><path d="M512.52 14.6 V21" stroke="#a9a9a9" stroke-width="1.1"/><path d="M517.89 14.6 V21" stroke="#a9a9a9" stroke-width="1.1"/><path d="M523.26 3.2 V21" stroke="#c4c4c4" stroke-width="1.1"/><path d="M528.63 14.6 V21" stroke="#a9a9a9" stroke-width="1.1"/><path d="M534.00 14.6 V21" stroke="#a9a9a9" stroke-width="1.1"/><path d="M539.37 14.6 V21" stroke="#a9a9a9" stroke-width="1.1"/><path d="M544.74 14.6 V21" stroke="#a9a9a9" stroke-width="1.1"/><path d="M550.12 8 V21" stroke="#a9a9a9" stroke-width="1.1"/><path d="M555.49 14.6 V21" stroke="#a9a9a9" stroke-width="1.1"/><path d="M560.86 14.6 V21" stroke="#a9a9a9" stroke-width="1.1"/><path d="M566.23 14.6 V21" stroke="#a9a9a9" stroke-width="1.1"/><path d="M571.60 14.6 V21" stroke="#a9a9a9" stroke-width="1.1"/><path d="M576.97 3.2 V21" stroke="#c4c4c4" stroke-width="1.1"/><path d="M582.34 14.6 V21" stroke="#a9a9a9" stroke-width="1.1"/><path d="M587.71 14.6 V21" stroke="#a9a9a9" stroke-width="1.1"/><path d="M593.08 14.6 V21" stroke="#a9a9a9" stroke-width="1.1"/><path d="M598.45 14.6 V21" stroke="#a9a9a9" stroke-width="1.1"/><path d="M603.83 8 V21" stroke="#a9a9a9" stroke-width="1.1"/><path d="M609.20 14.6 V21" stroke="#a9a9a9" stroke-width="1.1"/><path d="M614.57 14.6 V21" stroke="#a9a9a9" stroke-width="1.1"/><path d="M619.94 14.6 V21" stroke="#a9a9a9" stroke-width="1.1"/><path d="M625.31 14.6 V21" stroke="#a9a9a9" stroke-width="1.1"/><path d="M630.68 3.2 V21" stroke="#c4c4c4" stroke-width="1.1"/><path d="M636.05 14.6 V21" stroke="#a9a9a9" stroke-width="1.1"/><path d="M641.42 14.6 V21" stroke="#a9a9a9" stroke-width="1.1"/><path d="M646.79 14.6 V21" stroke="#a9a9a9" stroke-width="1.1"/><path d="M652.16 14.6 V21" stroke="#a9a9a9" stroke-width="1.1"/><path d="M657.53 8 V21" stroke="#a9a9a9" stroke-width="1.1"/><path d="M662.91 14.6 V21" stroke="#a9a9a9" stroke-width="1.1"/><path d="M668.28 14.6 V21" stroke="#a9a9a9" stroke-width="1.1"/><path d="M673.65 14.6 V21" stroke="#a9a9a9" stroke-width="1.1"/><path d="M679.02 14.6 V21" stroke="#a9a9a9" stroke-width="1.1"/><path d="M684.39 3.2 V21" stroke="#c4c4c4" stroke-width="1.1"/><path d="M689.76 14.6 V21" stroke="#a9a9a9" stroke-width="1.1"/><path d="M695.13 14.6 V21" stroke="#a9a9a9" stroke-width="1.1"/><path d="M700.50 14.6 V21" stroke="#a9a9a9" stroke-width="1.1"/><path d="M705.87 14.6 V21" stroke="#a9a9a9" stroke-width="1.1"/><path d="M711.25 8 V21" stroke="#a9a9a9" stroke-width="1.1"/><path d="M716.62 14.6 V21" stroke="#a9a9a9" stroke-width="1.1"/><path d="M721.99 14.6 V21" stroke="#a9a9a9" stroke-width="1.1"/><path d="M727.36 14.6 V21" stroke="#a9a9a9" stroke-width="1.1"/><path d="M732.73 14.6 V21" stroke="#a9a9a9" stroke-width="1.1"/><path d="M738.10 3.2 V21" stroke="#c4c4c4" stroke-width="1.1"/><path d="M743.47 14.6 V21" stroke="#a9a9a9" stroke-width="1.1"/><path d="M748.84 14.6 V21" stroke="#a9a9a9" stroke-width="1.1"/><path d="M754.21 14.6 V21" stroke="#a9a9a9" stroke-width="1.1"/><path d="M759.58 14.6 V21" stroke="#a9a9a9" stroke-width="1.1"/><path d="M764.96 8 V21" stroke="#a9a9a9" stroke-width="1.1"/><path d="M770.33 14.6 V21" stroke="#a9a9a9" stroke-width="1.1"/><path d="M775.70 14.6 V21" stroke="#a9a9a9" stroke-width="1.1"/><path d="M781.07 14.6 V21" stroke="#a9a9a9" stroke-width="1.1"/><path d="M786.44 14.6 V21" stroke="#a9a9a9" stroke-width="1.1"/><path d="M791.81 3.2 V21" stroke="#c4c4c4" stroke-width="1.1"/><path d="M797.18 14.6 V21" stroke="#a9a9a9" stroke-width="1.1"/><path d="M802.55 14.6 V21" stroke="#a9a9a9" stroke-width="1.1"/><path d="M807.92 14.6 V21" stroke="#a9a9a9" stroke-width="1.1"/><path d="M813.29 14.6 V21" stroke="#a9a9a9" stroke-width="1.1"/><path d="M818.67 8 V21" stroke="#a9a9a9" stroke-width="1.1"/><path d="M824.04 14.6 V21" stroke="#a9a9a9" stroke-width="1.1"/><path d="M829.41 14.6 V21" stroke="#a9a9a9" stroke-width="1.1"/><path d="M834.78 14.6 V21" stroke="#a9a9a9" stroke-width="1.1"/><path d="M840.15 14.6 V21" stroke="#a9a9a9" stroke-width="1.1"/><path d="M845.52 3.2 V21" stroke="#c4c4c4" stroke-width="1.1"/><path d="M850.89 14.6 V21" stroke="#a9a9a9" stroke-width="1.1"/><path d="M856.26 14.6 V21" stroke="#a9a9a9" stroke-width="1.1"/><path d="M861.63 14.6 V21" stroke="#a9a9a9" stroke-width="1.1"/><path d="M867.00 14.6 V21" stroke="#a9a9a9" stroke-width="1.1"/><path d="M872.38 8 V21" stroke="#a9a9a9" stroke-width="1.1"/><path d="M877.75 14.6 V21" stroke="#a9a9a9" stroke-width="1.1"/><path d="M883.12 14.6 V21" stroke="#a9a9a9" stroke-width="1.1"/><path d="M888.49 14.6 V21" stroke="#a9a9a9" stroke-width="1.1"/><path d="M893.86 14.6 V21" stroke="#a9a9a9" stroke-width="1.1"/><path d="M899.23 3.2 V21" stroke="#c4c4c4" stroke-width="1.1"/><path d="M904.60 14.6 V21" stroke="#a9a9a9" stroke-width="1.1"/><path d="M909.97 14.6 V21" stroke="#a9a9a9" stroke-width="1.1"/><path d="M915.34 14.6 V21" stroke="#a9a9a9" stroke-width="1.1"/><path d="M920.71 14.6 V21" stroke="#a9a9a9" stroke-width="1.1"/><path d="M926.09 8 V21" stroke="#a9a9a9" stroke-width="1.1"/><path d="M931.46 14.6 V21" stroke="#a9a9a9" stroke-width="1.1"/><path d="M936.83 14.6 V21" stroke="#a9a9a9" stroke-width="1.1"/><path d="M942.20 14.6 V21" stroke="#a9a9a9" stroke-width="1.1"/><path d="M947.57 14.6 V21" stroke="#a9a9a9" stroke-width="1.1"/><path d="M952.94 3.2 V21" stroke="#c4c4c4" stroke-width="1.1"/><path d="M958.31 14.6 V21" stroke="#a9a9a9" stroke-width="1.1"/><path d="M963.68 14.6 V21" stroke="#a9a9a9" stroke-width="1.1"/><path d="M969.05 14.6 V21" stroke="#a9a9a9" stroke-width="1.1"/><path d="M974.42 14.6 V21" stroke="#a9a9a9" stroke-width="1.1"/><path d="M979.79 8 V21" stroke="#a9a9a9" stroke-width="1.1"/><path d="M985.17 14.6 V21" stroke="#a9a9a9" stroke-width="1.1"/><path d="M990.54 14.6 V21" stroke="#a9a9a9" stroke-width="1.1"/></svg>
<span class="t" style="left:-15.04px;top:4.80px;font-size:13px;line-height:13px;color:#fff;transform:scaleX(1.1000);transform-origin:0 0;">–160</span>
<span class="t" style="left:41.67px;top:4.80px;font-size:13px;line-height:13px;color:#fff;transform:scaleX(1.1000);transform-origin:0 0;">–120</span>
<span class="t" style="left:95.38px;top:4.80px;font-size:13px;line-height:13px;color:#fff;transform:scaleX(1.1000);transform-origin:0 0;">–80</span>
<span class="t" style="left:149.09px;top:4.80px;font-size:13px;line-height:13px;color:#fff;transform:scaleX(1.1000);transform-origin:0 0;">–40</span>
<span class="t" style="left:202.8px;top:4.80px;font-size:13px;line-height:13px;color:#fff;transform:scaleX(1.1000);transform-origin:0 0;">0</span>
<span class="t" style="left:256.51px;top:4.80px;font-size:13px;line-height:13px;color:#fff;transform:scaleX(1.1000);transform-origin:0 0;">40</span>
<span class="t" style="left:310.22px;top:4.80px;font-size:13px;line-height:13px;color:#fff;transform:scaleX(1.1000);transform-origin:0 0;">80</span>
<span class="t" style="left:363.93px;top:4.80px;font-size:13px;line-height:13px;color:#fff;transform:scaleX(1.1000);transform-origin:0 0;">120</span>
<span class="t" style="left:417.64px;top:4.80px;font-size:13px;line-height:13px;color:#fff;transform:scaleX(1.1000);transform-origin:0 0;">160</span>
<span class="t" style="left:471.35px;top:4.80px;font-size:13px;line-height:13px;color:#fff;transform:scaleX(1.1000);transform-origin:0 0;">200</span>
<span class="t" style="left:525.06px;top:4.80px;font-size:13px;line-height:13px;color:#fff;transform:scaleX(1.1000);transform-origin:0 0;">240</span>
<span class="t" style="left:578.77px;top:4.80px;font-size:13px;line-height:13px;color:#fff;transform:scaleX(1.1000);transform-origin:0 0;">280</span>
<span class="t" style="left:632.48px;top:4.80px;font-size:13px;line-height:13px;color:#fff;transform:scaleX(1.1000);transform-origin:0 0;">320</span>
<span class="t" style="left:686.19px;top:4.80px;font-size:13px;line-height:13px;color:#fff;transform:scaleX(1.1000);transform-origin:0 0;">360</span>
<span class="t" style="left:739.9px;top:4.80px;font-size:13px;line-height:13px;color:#fff;transform:scaleX(1.1000);transform-origin:0 0;">400</span>
<span class="t" style="left:793.61px;top:4.80px;font-size:13px;line-height:13px;color:#fff;transform:scaleX(1.1000);transform-origin:0 0;">440</span>
<span class="t" style="left:847.32px;top:4.80px;font-size:13px;line-height:13px;color:#fff;transform:scaleX(1.1000);transform-origin:0 0;">480</span>
<span class="t" style="left:901.03px;top:4.80px;font-size:13px;line-height:13px;color:#fff;transform:scaleX(1.1000);transform-origin:0 0;">520</span>
<span class="t" style="left:954.74px;top:4.80px;font-size:13px;line-height:13px;color:#fff;transform:scaleX(1.1000);transform-origin:0 0;">560</span>
</div>
<svg style="left:54px;top:121px;" width="26" height="24" viewBox="0 0 26 24"><path d="M3.5 14.3 H22" stroke="#ddd" stroke-width="1.1" stroke-dasharray="2.2 2.2"/><path d="M14.4 1.5 V19.5" stroke="#ddd" stroke-width="1.1" stroke-dasharray="2.4 2.2"/></svg>
<div class="clip" style="left:54px;top:146px;width:26px;height:811px;">
<svg style="left:0px;top:0px;" width="26" height="811" viewBox="0 0 26 811"><path d="M15.3 5.13 H22" stroke="#a9a9a9" stroke-width="1.1"/><path d="M15.3 10.50 H22" stroke="#a9a9a9" stroke-width="1.1"/><path d="M15.3 15.87 H22" stroke="#a9a9a9" stroke-width="1.1"/><path d="M15.3 21.24 H22" stroke="#a9a9a9" stroke-width="1.1"/><path d="M9 26.62 H22" stroke="#a9a9a9" stroke-width="1.1"/><path d="M15.3 31.99 H22" stroke="#a9a9a9" stroke-width="1.1"/><path d="M15.3 37.36 H22" stroke="#a9a9a9" stroke-width="1.1"/><path d="M15.3 42.73 H22" stroke="#a9a9a9" stroke-width="1.1"/><path d="M15.3 48.10 H22" stroke="#a9a9a9" stroke-width="1.1"/><path d="M4.6 53.47 H22" stroke="#c4c4c4" stroke-width="1.1"/><path d="M15.3 58.84 H22" stroke="#a9a9a9" stroke-width="1.1"/><path d="M15.3 64.21 H22" stroke="#a9a9a9" stroke-width="1.1"/><path d="M15.3 69.58 H22" stroke="#a9a9a9" stroke-width="1.1"/><path d="M15.3 74.95 H22" stroke="#a9a9a9" stroke-width="1.1"/><path d="M9 80.33 H22" stroke="#a9a9a9" stroke-width="1.1"/><path d="M15.3 85.70 H22" stroke="#a9a9a9" stroke-width="1.1"/><path d="M15.3 91.07 H22" stroke="#a9a9a9" stroke-width="1.1"/><path d="M15.3 96.44 H22" stroke="#a9a9a9" stroke-width="1.1"/><path d="M15.3 101.81 H22" stroke="#a9a9a9" stroke-width="1.1"/><path d="M4.6 107.18 H22" stroke="#c4c4c4" stroke-width="1.1"/><path d="M15.3 112.55 H22" stroke="#a9a9a9" stroke-width="1.1"/><path d="M15.3 117.92 H22" stroke="#a9a9a9" stroke-width="1.1"/><path d="M15.3 123.29 H22" stroke="#a9a9a9" stroke-width="1.1"/><path d="M15.3 128.66 H22" stroke="#a9a9a9" stroke-width="1.1"/><path d="M9 134.03 H22" stroke="#a9a9a9" stroke-width="1.1"/><path d="M15.3 139.41 H22" stroke="#a9a9a9" stroke-width="1.1"/><path d="M15.3 144.78 H22" stroke="#a9a9a9" stroke-width="1.1"/><path d="M15.3 150.15 H22" stroke="#a9a9a9" stroke-width="1.1"/><path d="M15.3 155.52 H22" stroke="#a9a9a9" stroke-width="1.1"/><path d="M4.6 160.89 H22" stroke="#c4c4c4" stroke-width="1.1"/><path d="M15.3 166.26 H22" stroke="#a9a9a9" stroke-width="1.1"/><path d="M15.3 171.63 H22" stroke="#a9a9a9" stroke-width="1.1"/><path d="M15.3 177.00 H22" stroke="#a9a9a9" stroke-width="1.1"/><path d="M15.3 182.37 H22" stroke="#a9a9a9" stroke-width="1.1"/><path d="M9 187.75 H22" stroke="#a9a9a9" stroke-width="1.1"/><path d="M15.3 193.12 H22" stroke="#a9a9a9" stroke-width="1.1"/><path d="M15.3 198.49 H22" stroke="#a9a9a9" stroke-width="1.1"/><path d="M15.3 203.86 H22" stroke="#a9a9a9" stroke-width="1.1"/><path d="M15.3 209.23 H22" stroke="#a9a9a9" stroke-width="1.1"/><path d="M4.6 214.60 H22" stroke="#c4c4c4" stroke-width="1.1"/><path d="M15.3 219.97 H22" stroke="#a9a9a9" stroke-width="1.1"/><path d="M15.3 225.34 H22" stroke="#a9a9a9" stroke-width="1.1"/><path d="M15.3 230.71 H22" stroke="#a9a9a9" stroke-width="1.1"/><path d="M15.3 236.08 H22" stroke="#a9a9a9" stroke-width="1.1"/><path d="M9 241.45 H22" stroke="#a9a9a9" stroke-width="1.1"/><path d="M15.3 246.83 H22" stroke="#a9a9a9" stroke-width="1.1"/><path d="M15.3 252.20 H22" stroke="#a9a9a9" stroke-width="1.1"/><path d="M15.3 257.57 H22" stroke="#a9a9a9" stroke-width="1.1"/><path d="M15.3 262.94 H22" stroke="#a9a9a9" stroke-width="1.1"/><path d="M4.6 268.31 H22" stroke="#c4c4c4" stroke-width="1.1"/><path d="M15.3 273.68 H22" stroke="#a9a9a9" stroke-width="1.1"/><path d="M15.3 279.05 H22" stroke="#a9a9a9" stroke-width="1.1"/><path d="M15.3 284.42 H22" stroke="#a9a9a9" stroke-width="1.1"/><path d="M15.3 289.79 H22" stroke="#a9a9a9" stroke-width="1.1"/><path d="M9 295.17 H22" stroke="#a9a9a9" stroke-width="1.1"/><path d="M15.3 300.54 H22" stroke="#a9a9a9" stroke-width="1.1"/><path d="M15.3 305.91 H22" stroke="#a9a9a9" stroke-width="1.1"/><path d="M15.3 311.28 H22" stroke="#a9a9a9" stroke-width="1.1"/><path d="M15.3 316.65 H22" stroke="#a9a9a9" stroke-width="1.1"/><path d="M4.6 322.02 H22" stroke="#c4c4c4" stroke-width="1.1"/><path d="M15.3 327.39 H22" stroke="#a9a9a9" stroke-width="1.1"/><path d="M15.3 332.76 H22" stroke="#a9a9a9" stroke-width="1.1"/><path d="M15.3 338.13 H22" stroke="#a9a9a9" stroke-width="1.1"/><path d="M15.3 343.50 H22" stroke="#a9a9a9" stroke-width="1.1"/><path d="M9 348.88 H22" stroke="#a9a9a9" stroke-width="1.1"/><path d="M15.3 354.25 H22" stroke="#a9a9a9" stroke-width="1.1"/><path d="M15.3 359.62 H22" stroke="#a9a9a9" stroke-width="1.1"/><path d="M15.3 364.99 H22" stroke="#a9a9a9" stroke-width="1.1"/><path d="M15.3 370.36 H22" stroke="#a9a9a9" stroke-width="1.1"/><path d="M4.6 375.73 H22" stroke="#c4c4c4" stroke-width="1.1"/><path d="M15.3 381.10 H22" stroke="#a9a9a9" stroke-width="1.1"/><path d="M15.3 386.47 H22" stroke="#a9a9a9" stroke-width="1.1"/><path d="M15.3 391.84 H22" stroke="#a9a9a9" stroke-width="1.1"/><path d="M15.3 397.21 H22" stroke="#a9a9a9" stroke-width="1.1"/><path d="M9 402.59 H22" stroke="#a9a9a9" stroke-width="1.1"/><path d="M15.3 407.96 H22" stroke="#a9a9a9" stroke-width="1.1"/><path d="M15.3 413.33 H22" stroke="#a9a9a9" stroke-width="1.1"/><path d="M15.3 418.70 H22" stroke="#a9a9a9" stroke-width="1.1"/><path d="M15.3 424.07 H22" stroke="#a9a9a9" stroke-width="1.1"/><path d="M4.6 429.44 H22" stroke="#c4c4c4" stroke-width="1.1"/><path d="M15.3 434.81 H22" stroke="#a9a9a9" stroke-width="1.1"/><path d="M15.3 440.18 H22" stroke="#a9a9a9" stroke-width="1.1"/><path d="M15.3 445.55 H22" stroke="#a9a9a9" stroke-width="1.1"/><path d="M15.3 450.92 H22" stroke="#a9a9a9" stroke-width="1.1"/><path d="M9 456.30 H22" stroke="#a9a9a9" stroke-width="1.1"/><path d="M15.3 461.67 H22" stroke="#a9a9a9" stroke-width="1.1"/><path d="M15.3 467.04 H22" stroke="#a9a9a9" stroke-width="1.1"/><path d="M15.3 472.41 H22" stroke="#a9a9a9" stroke-width="1.1"/><path d="M15.3 477.78 H22" stroke="#a9a9a9" stroke-width="1.1"/><path d="M4.6 483.15 H22" stroke="#c4c4c4" stroke-width="1.1"/><path d="M15.3 488.52 H22" stroke="#a9a9a9" stroke-width="1.1"/><path d="M15.3 493.89 H22" stroke="#a9a9a9" stroke-width="1.1"/><path d="M15.3 499.26 H22" stroke="#a9a9a9" stroke-width="1.1"/><path d="M15.3 504.63 H22" stroke="#a9a9a9" stroke-width="1.1"/><path d="M9 510.00 H22" stroke="#a9a9a9" stroke-width="1.1"/><path d="M15.3 515.38 H22" stroke="#a9a9a9" stroke-width="1.1"/><path d="M15.3 520.75 H22" stroke="#a9a9a9" stroke-width="1.1"/><path d="M15.3 526.12 H22" stroke="#a9a9a9" stroke-width="1.1"/><path d="M15.3 531.49 H22" stroke="#a9a9a9" stroke-width="1.1"/><path d="M4.6 536.86 H22" stroke="#c4c4c4" stroke-width="1.1"/><path d="M15.3 542.23 H22" stroke="#a9a9a9" stroke-width="1.1"/><path d="M15.3 547.60 H22" stroke="#a9a9a9" stroke-width="1.1"/><path d="M15.3 552.97 H22" stroke="#a9a9a9" stroke-width="1.1"/><path d="M15.3 558.34 H22" stroke="#a9a9a9" stroke-width="1.1"/><path d="M9 563.72 H22" stroke="#a9a9a9" stroke-width="1.1"/><path d="M15.3 569.09 H22" stroke="#a9a9a9" stroke-width="1.1"/><path d="M15.3 574.46 H22" stroke="#a9a9a9" stroke-width="1.1"/><path d="M15.3 579.83 H22" stroke="#a9a9a9" stroke-width="1.1"/><path d="M15.3 585.20 H22" stroke="#a9a9a9" stroke-width="1.1"/><path d="M4.6 590.57 H22" stroke="#c4c4c4" stroke-width="1.1"/><path d="M15.3 595.94 H22" stroke="#a9a9a9" stroke-width="1.1"/><path d="M15.3 601.31 H22" stroke="#a9a9a9" stroke-width="1.1"/><path d="M15.3 606.68 H22" stroke="#a9a9a9" stroke-width="1.1"/><path d="M15.3 612.05 H22" stroke="#a9a9a9" stroke-width="1.1"/><path d="M9 617.43 H22" stroke="#a9a9a9" stroke-width="1.1"/><path d="M15.3 622.80 H22" stroke="#a9a9a9" stroke-width="1.1"/><path d="M15.3 628.17 H22" stroke="#a9a9a9" stroke-width="1.1"/><path d="M15.3 633.54 H22" stroke="#a9a9a9" stroke-width="1.1"/><path d="M15.3 638.91 H22" stroke="#a9a9a9" stroke-width="1.1"/><path d="M4.6 644.28 H22" stroke="#c4c4c4" stroke-width="1.1"/><path d="M15.3 649.65 H22" stroke="#a9a9a9" stroke-width="1.1"/><path d="M15.3 655.02 H22" stroke="#a9a9a9" stroke-width="1.1"/><path d="M15.3 660.39 H22" stroke="#a9a9a9" stroke-width="1.1"/><path d="M15.3 665.76 H22" stroke="#a9a9a9" stroke-width="1.1"/><path d="M9 671.13 H22" stroke="#a9a9a9" stroke-width="1.1"/><path d="M15.3 676.51 H22" stroke="#a9a9a9" stroke-width="1.1"/><path d="M15.3 681.88 H22" stroke="#a9a9a9" stroke-width="1.1"/><path d="M15.3 687.25 H22" stroke="#a9a9a9" stroke-width="1.1"/><path d="M15.3 692.62 H22" stroke="#a9a9a9" stroke-width="1.1"/><path d="M4.6 697.99 H22" stroke="#c4c4c4" stroke-width="1.1"/><path d="M15.3 703.36 H22" stroke="#a9a9a9" stroke-width="1.1"/><path d="M15.3 708.73 H22" stroke="#a9a9a9" stroke-width="1.1"/><path d="M15.3 714.10 H22" stroke="#a9a9a9" stroke-width="1.1"/><path d="M15.3 719.47 H22" stroke="#a9a9a9" stroke-width="1.1"/><path d="M9 724.85 H22" stroke="#a9a9a9" stroke-width="1.1"/><path d="M15.3 730.22 H22" stroke="#a9a9a9" stroke-width="1.1"/><path d="M15.3 735.59 H22" stroke="#a9a9a9" stroke-width="1.1"/><path d="M15.3 740.96 H22" stroke="#a9a9a9" stroke-width="1.1"/><path d="M15.3 746.33 H22" stroke="#a9a9a9" stroke-width="1.1"/><path d="M4.6 751.70 H22" stroke="#c4c4c4" stroke-width="1.1"/><path d="M15.3 757.07 H22" stroke="#a9a9a9" stroke-width="1.1"/><path d="M15.3 762.44 H22" stroke="#a9a9a9" stroke-width="1.1"/><path d="M15.3 767.81 H22" stroke="#a9a9a9" stroke-width="1.1"/><path d="M15.3 773.18 H22" stroke="#a9a9a9" stroke-width="1.1"/><path d="M9 778.56 H22" stroke="#a9a9a9" stroke-width="1.1"/><path d="M15.3 783.93 H22" stroke="#a9a9a9" stroke-width="1.1"/><path d="M15.3 789.30 H22" stroke="#a9a9a9" stroke-width="1.1"/><path d="M15.3 794.67 H22" stroke="#a9a9a9" stroke-width="1.1"/><path d="M15.3 800.04 H22" stroke="#a9a9a9" stroke-width="1.1"/><path d="M4.6 805.41 H22" stroke="#c4c4c4" stroke-width="1.1"/><path d="M15.3 810.78 H22" stroke="#a9a9a9" stroke-width="1.1"/><path d="M15.3 816.15 H22" stroke="#a9a9a9" stroke-width="1.1"/></svg>
<span class="t" style="left:4.4px;top:803.61px;font-size:13px;line-height:13px;color:#fff;transform-origin:0 0;transform:rotate(-90deg) scaleX(1.1);">–40</span>
<span class="t" style="left:4.4px;top:749.90px;font-size:13px;line-height:13px;color:#fff;transform-origin:0 0;transform:rotate(-90deg) scaleX(1.1);">0</span>
<span class="t" style="left:4.4px;top:696.19px;font-size:13px;line-height:13px;color:#fff;transform-origin:0 0;transform:rotate(-90deg) scaleX(1.1);">40</span>
<span class="t" style="left:4.4px;top:642.48px;font-size:13px;line-height:13px;color:#fff;transform-origin:0 0;transform:rotate(-90deg) scaleX(1.1);">80</span>
<span class="t" style="left:4.4px;top:588.77px;font-size:13px;line-height:13px;color:#fff;transform-origin:0 0;transform:rotate(-90deg) scaleX(1.1);">120</span>
<span class="t" style="left:4.4px;top:535.06px;font-size:13px;line-height:13px;color:#fff;transform-origin:0 0;transform:rotate(-90deg) scaleX(1.1);">160</span>
<span class="t" style="left:4.4px;top:481.35px;font-size:13px;line-height:13px;color:#fff;transform-origin:0 0;transform:rotate(-90deg) scaleX(1.1);">200</span>
<span class="t" style="left:4.4px;top:427.64px;font-size:13px;line-height:13px;color:#fff;transform-origin:0 0;transform:rotate(-90deg) scaleX(1.1);">240</span>
<span class="t" style="left:4.4px;top:373.93px;font-size:13px;line-height:13px;color:#fff;transform-origin:0 0;transform:rotate(-90deg) scaleX(1.1);">280</span>
<span class="t" style="left:4.4px;top:320.22px;font-size:13px;line-height:13px;color:#fff;transform-origin:0 0;transform:rotate(-90deg) scaleX(1.1);">320</span>
<span class="t" style="left:4.4px;top:266.51px;font-size:13px;line-height:13px;color:#fff;transform-origin:0 0;transform:rotate(-90deg) scaleX(1.1);">360</span>
<span class="t" style="left:4.4px;top:212.80px;font-size:13px;line-height:13px;color:#fff;transform-origin:0 0;transform:rotate(-90deg) scaleX(1.1);">400</span>
<span class="t" style="left:4.4px;top:159.09px;font-size:13px;line-height:13px;color:#fff;transform-origin:0 0;transform:rotate(-90deg) scaleX(1.1);">440</span>
<span class="t" style="left:4.4px;top:105.38px;font-size:13px;line-height:13px;color:#fff;transform-origin:0 0;transform:rotate(-90deg) scaleX(1.1);">480</span>
<span class="t" style="left:4.4px;top:51.67px;font-size:13px;line-height:13px;color:#fff;transform-origin:0 0;transform:rotate(-90deg) scaleX(1.1);">520</span>
</div>
<div style="left:76.2px;top:960.3px;width:69.5px;height:15.5px;background:#484848;border-radius:7.5px;"></div>
<span class="t" style="left:84.7px;top:961.60px;font-size:13px;line-height:13px;color:#fff;transform:scaleX(0.9185);transform-origin:0 0;">80.56%</span>
<svg style="left:128.4px;top:965px;" width="12" height="7.2" viewBox="0 0 12 7.2"><path d="M1 1 L6.00 6.20 L11.00 1" stroke="#d6d6d6" stroke-width="1.4" fill="none"/></svg>
<div style="left:148.3px;top:960.3px;width:59.5px;height:15.5px;background:#484848;border-radius:7.5px;"></div>
<span class="t" style="left:155.8px;top:961.60px;font-size:13px;line-height:13px;color:#fff;transform:scaleX(1.0098);transform-origin:0 0;">0.0°</span>
<svg style="left:190.5px;top:965px;" width="12" height="7.2" viewBox="0 0 12 7.2"><path d="M1 1 L6.00 6.20 L11.00 1" stroke="#d6d6d6" stroke-width="1.4" fill="none"/></svg>
<div style="left:241.8px;top:960.3px;width:55.5px;height:15.5px;background:#484848;border-radius:7.5px;"></div>
<span class="t" style="left:250.8px;top:961.60px;font-size:13px;line-height:13px;color:#fff;transform:scaleX(0.8298);transform-origin:0 0;">1</span>
<svg style="left:280px;top:965px;" width="12" height="7.2" viewBox="0 0 12 7.2"><path d="M1 1 L6.00 6.20 L11.00 1" stroke="#d6d6d6" stroke-width="1.4" fill="none"/></svg>
<div style="left:331.8px;top:960.3px;width:180.3px;height:15.5px;background:#484848;border-radius:7.5px;"></div>
<span class="t" style="left:338.3px;top:961.60px;font-size:13px;line-height:13px;color:#fff;transform:scaleX(1.1044);transform-origin:0 0;">Open 00:01:37</span>
<svg style="left:494.8px;top:965px;" width="12" height="7.2" viewBox="0 0 12 7.2"><path d="M1 1 L6.00 6.20 L11.00 1" stroke="#d6d6d6" stroke-width="1.4" fill="none"/></svg>
<svg style="left:212px;top:961px;" width="12" height="14" viewBox="0 0 12 14"><path d="M1.6 2 V12" stroke="#f0f0f0" stroke-width="1.6"/><path d="M10.3 2 V12 L3.3 7 Z" fill="#f0f0f0"/></svg>
<svg style="left:229px;top:961px;" width="10" height="14" viewBox="0 0 10 14"><path d="M8.4 2 V12 L1.6 7 Z" fill="#f0f0f0"/></svg>
<svg style="left:300px;top:961px;" width="10" height="14" viewBox="0 0 10 14"><path d="M1.6 2 V12 L8.4 7 Z" fill="#f0f0f0"/></svg>
<svg style="left:315px;top:961px;" width="12" height="14" viewBox="0 0 12 14"><path d="M10.4 2 V12" stroke="#f0f0f0" stroke-width="1.6"/><path d="M1.7 2 V12 L8.7 7 Z" fill="#f0f0f0"/></svg>
<div style="left:515px;top:961.3px;width:14px;height:14px;background:#ee3344;border-radius:2.5px;"></div>
<svg style="left:515px;top:961.3px;" width="14" height="14" viewBox="0 0 14 14"><path d="M3.5 3.4 H10.5" stroke="#3a1014" stroke-width="1.5"/><path d="M7 5 V10.5 M4.3 8 L7 10.9 L9.7 8" stroke="#3a1014" stroke-width="1.5" fill="none"/></svg>
<svg style="left:534px;top:961px;" width="10" height="14" viewBox="0 0 10 14"><path d="M7.8 1.5 L2.4 7 L7.8 12.5" stroke="#e0e0e0" stroke-width="1.4" fill="none"/></svg>
<svg style="left:1056px;top:961px;" width="10" height="14" viewBox="0 0 10 14"><path d="M2.2 1.5 L7.6 7 L2.2 12.5" stroke="#e0e0e0" stroke-width="1.4" fill="none"/></svg>
<div style="left:765px;top:961.4px;width:49.4px;height:13.2px;background:#5e5e5e;border-radius:6.5px;"></div>
<div style="left:18px;top:979.6px;width:1711.7px;height:18.8px;background:#333333;border-radius:9.4px;"></div>
<svg style="left:27.8px;top:981.2px;" width="8" height="17" viewBox="0 0 8 17"><rect x="0.4" y="0.8" width="2.4" height="2.4" fill="#a8a8a8"/><rect x="0.4" y="5.2" width="2.4" height="2.4" fill="#a8a8a8"/><rect x="0.4" y="9.6" width="2.4" height="2.4" fill="#a8a8a8"/><rect x="0.4" y="14" width="2.4" height="2.4" fill="#a8a8a8"/><rect x="4.6" y="0.8" width="2.4" height="2.4" fill="#a8a8a8"/><rect x="4.6" y="5.2" width="2.4" height="2.4" fill="#a8a8a8"/><rect x="4.6" y="9.6" width="2.4" height="2.4" fill="#a8a8a8"/><rect x="4.6" y="14" width="2.4" height="2.4" fill="#a8a8a8"/></svg>
<svg style="left:42px;top:981px;" width="18" height="17" viewBox="0 0 18 17"><circle cx="3.8" cy="3.8" r="2.2" fill="none" stroke="#cfcfcf" stroke-width="1.3"/><circle cx="3.8" cy="12.7" r="2.2" fill="none" stroke="#cfcfcf" stroke-width="1.3"/><path d="M8 2.3 H17 M8 5.2 H17 M8 11.2 H17 M8 14.1 H17" stroke="#cfcfcf" stroke-width="1.5"/></svg>
<svg style="left:62.2px;top:979.9px;" width="1642" height="18" viewBox="0 0 1642 18"><rect x="0.0" y="0" width="20.2" height="18" fill="#fff"/><path d="M0.0 18 L20.0 0" stroke="#f01020" stroke-width="1.3"/><rect x="20.0" y="0" width="20.2" height="18" fill="#000"/><path d="M40.0 7.5 V18 H28.5 Z" fill="#3a3a3a"/><rect x="40.0" y="0" width="20.2" height="18" fill="#000000"/><rect x="60.0" y="0" width="20.2" height="18" fill="#ffffff"/><rect x="80.0" y="0" width="20.2" height="18" fill="#2dfefe"/><rect x="100.0" y="0" width="20.2" height="18" fill="#fc05fc"/><rect x="120.0" y="0" width="20.2" height="18" fill="#fefe00"/><rect x="140.0" y="0" width="20.2" height="18" fill="#f20000"/><rect x="160.0" y="0" width="20.2" height="18" fill="#3dfc00"/><rect x="180.0" y="0" width="20.2" height="18" fill="#0000fa"/><rect x="200.0" y="0" width="20.2" height="18" fill="#ffffff"/><rect x="220.0" y="0" width="20.2" height="18" fill="#d9d9d9"/><rect x="240.0" y="0" width="20.2" height="18" fill="#bfbfbf"/><rect x="260.0" y="0" width="20.2" height="18" fill="#a6a6a6"/><rect x="280.0" y="0" width="20.2" height="18" fill="#8c8c8c"/><rect x="300.0" y="0" width="20.2" height="18" fill="#737373"/><rect x="320.0" y="0" width="20.2" height="18" fill="#595959"/><rect x="340.0" y="0" width="20.2" height="18" fill="#404040"/><rect x="360.0" y="0" width="20.2" height="18" fill="#262626"/><rect x="380.0" y="0" width="20.2" height="18" fill="#161616"/><rect x="400.0" y="0" width="20.2" height="18" fill="#000000"/><rect x="420.0" y="0" width="20.2" height="18" fill="#000078"/><rect x="440.0" y="0" width="20.2" height="18" fill="#0000f0"/><rect x="460.0" y="0" width="20.2" height="18" fill="#1e7000"/><rect x="480.0" y="0" width="20.2" height="18" fill="#1b6e6e"/><rect x="500.0" y="0" width="20.2" height="18" fill="#1464fa"/><rect x="520.0" y="0" width="20.2" height="18" fill="#3cfa00"/><rect x="540.0" y="0" width="20.2" height="18" fill="#3cfa64"/><rect x="560.0" y="0" width="20.2" height="18" fill="#32fefe"/><rect x="580.0" y="0" width="20.2" height="18" fill="#6e0000"/><rect x="600.0" y="0" width="20.2" height="18" fill="#6e006e"/><rect x="620.0" y="0" width="20.2" height="18" fill="#6e00fa"/><rect x="640.0" y="0" width="20.2" height="18" fill="#6e6e00"/><rect x="660.0" y="0" width="20.2" height="18" fill="#6e6efa"/><rect x="680.0" y="0" width="20.2" height="18" fill="#80fa00"/><rect x="700.0" y="0" width="20.2" height="18" fill="#80fa64"/><rect x="720.0" y="0" width="20.2" height="18" fill="#78fefe"/><rect x="740.0" y="0" width="20.2" height="18" fill="#f00000"/><rect x="760.0" y="0" width="20.2" height="18" fill="#f0006e"/><rect x="780.0" y="0" width="20.2" height="18" fill="#f000fa"/><rect x="800.0" y="0" width="20.2" height="18" fill="#f56a00"/><rect x="820.0" y="0" width="20.2" height="18" fill="#f56a6a"/><rect x="840.0" y="0" width="20.2" height="18" fill="#f56afa"/><rect x="860.0" y="0" width="20.2" height="18" fill="#fefe00"/><rect x="880.0" y="0" width="20.2" height="18" fill="#fefe64"/><rect x="900.0" y="0" width="20.2" height="18" fill="#5a2828"/><rect x="920.0" y="0" width="20.2" height="18" fill="#84282c"/><rect x="940.0" y="0" width="20.2" height="18" fill="#8a5658"/><rect x="960.0" y="0" width="20.2" height="18" fill="#bc202c"/><rect x="980.0" y="0" width="20.2" height="18" fill="#c05058"/><rect x="1000.0" y="0" width="20.2" height="18" fill="#c88c8e"/><rect x="1020.0" y="0" width="20.2" height="18" fill="#885028"/><rect x="1040.0" y="0" width="20.2" height="18" fill="#bc5028"/><rect x="1060.0" y="0" width="20.2" height="18" fill="#c08420"/><rect x="1080.0" y="0" width="20.2" height="18" fill="#c48858"/><rect x="1100.0" y="0" width="20.2" height="18" fill="#505020"/><rect x="1120.0" y="0" width="20.2" height="18" fill="#888820"/><rect x="1140.0" y="0" width="20.2" height="18" fill="#888850"/><rect x="1160.0" y="0" width="20.2" height="18" fill="#c4c420"/><rect x="1180.0" y="0" width="20.2" height="18" fill="#c8c858"/><rect x="1200.0" y="0" width="20.2" height="18" fill="#c4c48c"/><rect x="1220.0" y="0" width="20.2" height="18" fill="#588820"/><rect x="1240.0" y="0" width="20.2" height="18" fill="#5cc41c"/><rect x="1260.0" y="0" width="20.2" height="18" fill="#8cc41c"/><rect x="1280.0" y="0" width="20.2" height="18" fill="#90c858"/><rect x="1300.0" y="0" width="20.2" height="18" fill="#285020"/><rect x="1320.0" y="0" width="20.2" height="18" fill="#308820"/><rect x="1340.0" y="0" width="20.2" height="18" fill="#38c41c"/><rect x="1360.0" y="0" width="20.2" height="18" fill="#588858"/><rect x="1380.0" y="0" width="20.2" height="18" fill="#60c858"/><rect x="1400.0" y="0" width="20.2" height="18" fill="#90c48c"/><rect x="1420.0" y="0" width="20.2" height="18" fill="#308858"/><rect x="1440.0" y="0" width="20.2" height="18" fill="#3cc458"/><rect x="1460.0" y="0" width="20.2" height="18" fill="#40c48c"/><rect x="1480.0" y="0" width="20.2" height="18" fill="#64c48c"/><rect x="1500.0" y="0" width="20.2" height="18" fill="#285050"/><rect x="1520.0" y="0" width="20.2" height="18" fill="#2e8888"/><rect x="1540.0" y="0" width="20.2" height="18" fill="#3cc0c0"/><rect x="1560.0" y="0" width="20.2" height="18" fill="#588888"/><rect x="1580.0" y="0" width="20.2" height="18" fill="#5cc0c0"/><rect x="1600.0" y="0" width="20.2" height="18" fill="#8cc4c4"/><rect x="1620.0" y="0" width="20.2" height="18" fill="#2b5489"/><rect x="1640.0" y="0" width="2" height="18" fill="#2040d0"/></svg>
<svg style="left:1706px;top:981px;" width="20" height="17" viewBox="0 0 20 17"><path d="M2 0.4 H15.5 Q16.8 0.4 16.8 1.7 V10.6 Q16.8 11.9 15.5 11.9 H7.6 L3.4 15.8 L3 11.9 H2 Q0.8 11.9 0.8 10.6 V1.7 Q0.8 0.4 2 0.4 Z" fill="#b8b8b8"/><path d="M4.2 4.8 H12.4 M4.2 7.8 H12.4" stroke="#3a3a3a" stroke-width="1.4"/></svg>
<div style="left:1089px;top:97.3px;width:318.3px;height:186.2px;background:#333333;border-radius:9px;"></div>
<div style="left:1089px;top:97.3px;width:318.3px;height:24.1px;background:#292929;border-radius:9px 9px 0 0;"></div>
<div style="left:1089px;top:120.8px;width:318.3px;height:1.2px;background:#686868;"></div>
<div style="left:1133.3px;top:98.5px;width:74.5px;height:23.5px;background:#333333;border-radius:8px 8px 0 0;border:1.2px solid #4c4c4c;border-bottom:none;"></div>
<div style="left:1098px;top:103px;width:14px;height:14px;background:#545454;border-radius:7px;"></div>
<svg style="left:1098px;top:103px;" width="14" height="14" viewBox="0 0 14 14"><path d="M4.06 4.06 L9.94 9.94 M9.94 4.06 L4.06 9.94" stroke="#181818" stroke-width="1.3" fill="none"/></svg>
<div style="left:1120.1px;top:103px;width:1.8px;height:14px;background:#4d4d4d;"></div>
<div style="left:1124px;top:103px;width:1.8px;height:14px;background:#4d4d4d;"></div>
<svg style="left:1137.5px;top:104px;" width="8" height="12" viewBox="0 0 8 12"><path d="M1.3 4.6 L4 1.8 L6.7 4.6 M1.3 7.4 L4 10.2 L6.7 7.4" stroke="#eee" stroke-width="1.2" fill="none"/></svg>
<span class="t" style="left:1148.4px;top:105.10px;font-size:13px;line-height:13px;color:#fff;transform:scaleX(1.0305);transform-origin:0 0;">Brush</span>
<div style="left:1190.5px;top:104.6px;width:12px;height:12px;background:#505050;border-radius:6px;"></div>
<svg style="left:1190.5px;top:104.6px;" width="12" height="12" viewBox="0 0 12 12"><path d="M3.48 3.48 L8.52 8.52 M8.52 3.48 L3.48 8.52" stroke="#1c1c1c" stroke-width="1.3" fill="none"/></svg>
<svg style="left:1384.2px;top:101.4px;" width="16" height="17" viewBox="0 0 16 17"><rect x="0.7" y="0.7" width="14.6" height="15.6" rx="3" fill="none" stroke="#bdbdbd" stroke-width="1.2"/><path d="M3.6 4.7 H12.4 M3.6 8.5 H12.4 M3.6 12.3 H12.4" stroke="#c4c4c4" stroke-width="1.3"/></svg>
<span class="t" style="left:1137.9px;top:147.00px;font-size:13px;line-height:13px;color:#fff;transform:scaleX(1.0713);transform-origin:0 0;">Width</span>
<div style="left:1180px;top:142.3px;width:80px;height:19.4px;background:#222222;"></div>
<span class="t" style="left:1184.5px;top:147.00px;font-size:13px;line-height:13px;color:#fff;transform:scaleX(1.0890);transform-origin:0 0;">Hairline</span>
<div style="left:1261px;top:142.3px;width:13px;height:19.4px;background:#505050;border-radius:3px;"></div>
<svg style="left:1263.5px;top:146px;" width="8" height="12" viewBox="0 0 8 12"><path d="M1.3 4.6 L4 1.8 L6.7 4.6 M1.3 7.4 L4 10.2 L6.7 7.4" stroke="#f0f0f0" stroke-width="1.2" fill="none"/></svg>
<div style="left:1275.3px;top:142.3px;width:15.4px;height:19.4px;background:#555;border-radius:3.5px;"></div>
<svg style="left:1275.3px;top:142.3px;" width="15.4" height="19.4" viewBox="0 0 15.4 19.4"><path d="M4.3 8 H11.1 L7.7 12 Z" fill="#fff"/></svg>
<span class="t" style="left:1100.3px;top:172.00px;font-size:13px;line-height:13px;color:#fff;transform:scaleX(1.0305);transform-origin:0 0;">Brush</span>
<div style="left:1099.2px;top:192.5px;width:270px;height:38.7px;border-radius:4.5px;background:linear-gradient(#4c4c4c,#3e3e3e);"></div>
<div style="left:1106.1px;top:196.2px;width:236.8px;height:31.4px;background:#e2e2e2;"></div>
<div style="left:1132.3px;top:210.6px;width:184.7px;height:1.8px;background:#cdcdcd;"></div>
<svg style="left:1348.85px;top:208.3px;" width="13.5" height="8" viewBox="0 0 13.5 8"><path d="M1 1 L6.75 7.00 L12.50 1" stroke="#e6e6e6" stroke-width="1.5" fill="none"/></svg>
<div style="left:1373px;top:206.8px;width:23.9px;height:25.1px;background:#4e4e4e;border-radius:4.5px;"></div>
<svg style="left:1373px;top:206.8px;" width="23.9" height="25.1" viewBox="0 0 23.9 25.1"><ellipse cx="6.5" cy="6" rx="1.2" ry="2.5" fill="none" stroke="#f0f0f0" stroke-width=".8"/><rect x="5.2" y="8.2" width="2.6" height="13.6" fill="#fff"/><rect x="5.0" y="9.9" width="3" height="0.6" fill="#4e4e4e"/><rect x="5.0" y="11.6" width="3" height="0.8" fill="#4e4e4e"/><rect x="5.0" y="17.5" width="3" height="0.8" fill="#4e4e4e"/><rect x="5.0" y="19.3" width="3" height="0.9" fill="#4e4e4e"/><path d="M5.2 21.2 L6.5 22.4 L7.8 21.2 Z" fill="#fff"/><circle cx="12.1" cy="5.6" r="1.7" fill="none" stroke="#f0f0f0" stroke-width=".8"/><rect x="10.799999999999999" y="8.2" width="2.6" height="13.6" fill="#fff"/><rect x="10.6" y="9.9" width="3" height="0.6" fill="#4e4e4e"/><rect x="10.6" y="11.6" width="3" height="0.8" fill="#4e4e4e"/><rect x="10.6" y="17.5" width="3" height="0.8" fill="#4e4e4e"/><rect x="10.6" y="19.3" width="3" height="0.9" fill="#4e4e4e"/><path d="M10.799999999999999 21.2 L12.1 22.4 L13.4 21.2 Z" fill="#fff"/><path d="M18.9 3.6 L16.4 6.4 L18.9 8.6 Z" fill="#f0f0f0"/><rect x="16.4" y="8.2" width="2.6" height="13.6" fill="#fff"/><rect x="16.2" y="9.9" width="3" height="0.6" fill="#4e4e4e"/><rect x="16.2" y="11.6" width="3" height="0.8" fill="#4e4e4e"/><rect x="16.2" y="17.5" width="3" height="0.8" fill="#4e4e4e"/><rect x="16.2" y="19.3" width="3" height="0.9" fill="#4e4e4e"/><path d="M16.4 21.2 L17.7 22.4 L19.0 21.2 Z" fill="#fff"/></svg>
<div style="left:1099px;top:242.6px;width:298px;height:1px;background:#2a2a2a;"></div>
<svg style="left:1236px;top:253.2px;" width="22" height="22" viewBox="0 0 22 22"><path d="M3 5.2 H19 M3 11 H19 M3 16.8 H19" stroke="#e6e6e6" stroke-width="1"/><circle cx="8" cy="5.2" r="1.7" fill="#333" stroke="#e6e6e6" stroke-width="1"/><circle cx="15" cy="11" r="1.7" fill="#333" stroke="#e6e6e6" stroke-width="1"/><circle cx="10" cy="16.8" r="1.7" fill="#333" stroke="#e6e6e6" stroke-width="1"/></svg>
<svg style="left:1264px;top:253.2px;" width="22" height="22" viewBox="0 0 22 22"><path d="M2.5 7 H6 C10 7 11 15.5 15 15.5 H18.5 M2.5 15.5 H6 C10 15.5 11 7 15 7 H18.5" stroke="#6c6c6c" stroke-width="1.2" fill="none"/><path d="M16.5 4.4 L19.6 7 L16.5 9.6 M16.5 12.9 L19.6 15.5 L16.5 18.1" stroke="#6c6c6c" stroke-width="1.2" fill="none"/></svg>
<svg style="left:1292px;top:253.2px;" width="22" height="22" viewBox="0 0 22 22"><path d="M3 12.3 C5.5 7.5 8.5 7.5 11 10.8 C13.5 14.2 16.5 14.2 19 9.6" stroke="#fff" stroke-width="2.6" fill="none" stroke-linecap="round"/></svg>
<svg style="left:1320px;top:253.2px;" width="22" height="22" viewBox="0 0 22 22"><rect x="2" y="2" width="18" height="18" rx="3" fill="#fff"/><path d="M11 6.3 V15.7 M6.3 11 H15.7" stroke="#222" stroke-width="2"/></svg>
<svg style="left:1348px;top:253.2px;" width="22" height="22" viewBox="0 0 22 22"><rect x="3.4" y="5.2" width="15.4" height="11.6" fill="none" stroke="#fff" stroke-width="2.6"/></svg>
<svg style="left:1376px;top:253.2px;" width="22" height="22" viewBox="0 0 22 22"><path d="M4.2 5.8 H17.8 M8.2 5.6 V3.6 H13.8 V5.6" stroke="#eee" stroke-width="1.3" fill="none"/><path d="M5.6 7.3 L6.5 19.3 H15.5 L16.4 7.3 Z" fill="none" stroke="#eee" stroke-width="1.3"/><path d="M8.7 9 V17.3 M11 9 V17.3 M13.3 9 V17.3" stroke="#eee" stroke-width="1.1"/></svg>
<div style="left:1089px;top:286px;width:318px;height:223.5px;background:#333333;border-radius:9px;"></div>
<div style="left:1089px;top:286px;width:318px;height:23.4px;background:#292929;border-radius:9px 9px 0 0;"></div>
<div style="left:1089px;top:308.8px;width:318px;height:1.2px;background:#686868;"></div>
<div style="left:1133px;top:287.2px;width:83.7px;height:22.8px;background:#333333;border-radius:8px 8px 0 0;border:1.2px solid #4c4c4c;border-bottom:none;"></div>
<div style="left:1098px;top:291.2px;width:14px;height:14px;background:#545454;border-radius:7px;"></div>
<svg style="left:1098px;top:291.2px;" width="14" height="14" viewBox="0 0 14 14"><path d="M4.06 4.06 L9.94 9.94 M9.94 4.06 L4.06 9.94" stroke="#181818" stroke-width="1.3" fill="none"/></svg>
<div style="left:1120.1px;top:291.2px;width:1.8px;height:14px;background:#4d4d4d;"></div>
<div style="left:1124px;top:291.2px;width:1.8px;height:14px;background:#4d4d4d;"></div>
<span class="t" style="left:1148.1px;top:293.10px;font-size:13px;line-height:13px;color:#fff;transform:scaleX(1.1051);transform-origin:0 0;">History</span>
<div style="left:1200px;top:292.8px;width:12px;height:12px;background:#505050;border-radius:6px;"></div>
<svg style="left:1200px;top:292.8px;" width="12" height="12" viewBox="0 0 12 12"><path d="M3.48 3.48 L8.52 8.52 M8.52 3.48 L3.48 8.52" stroke="#1c1c1c" stroke-width="1.3" fill="none"/></svg>
<span class="t" style="left:1231.8px;top:293.10px;font-size:13px;line-height:13px;color:#aaaaaa;transform:scaleX(1.1098);transform-origin:0 0;">Transform</span>
<svg style="left:1384px;top:289.5px;" width="16" height="17" viewBox="0 0 16 17"><rect x="0.7" y="0.7" width="14.6" height="15.6" rx="3" fill="none" stroke="#bdbdbd" stroke-width="1.2"/><path d="M3.6 4.7 H12.4 M3.6 8.5 H12.4 M3.6 12.3 H12.4" stroke="#c4c4c4" stroke-width="1.3"/></svg>
<span class="t" style="left:1119.4px;top:326.30px;font-size:13px;line-height:13px;color:#fff;transform:scaleX(1.0790);transform-origin:0 0;">Initial State</span>
<span class="t" style="left:1119.4px;top:342.20px;font-size:13px;line-height:13px;color:#fff;transform:scaleX(1.0254);transform-origin:0 0;">Move</span>
<span class="t" style="left:1119.4px;top:358.20px;font-size:13px;line-height:13px;color:#fff;transform:scaleX(1.0254);transform-origin:0 0;">Move</span>
<div style="left:1101px;top:371.1px;width:281px;height:16.7px;background:#1d41c2;"></div>
<span class="t" style="left:1119.4px;top:374.20px;font-size:13px;line-height:13px;color:#fff;transform:scaleX(1.0254);transform-origin:0 0;">Move</span>
<div style="left:1386px;top:320.6px;width:10px;height:98.8px;background:#808080;border-radius:5px;"></div>
<div style="left:1099px;top:431.6px;width:298px;height:1px;background:#2a2a2a;"></div>
<div style="left:1099px;top:468.5px;width:298px;height:1px;background:#2a2a2a;"></div>
<div style="left:1099px;top:448.2px;width:290px;height:6px;background:#777777;border-radius:3px;"></div>
<div style="left:1383.4px;top:444.6px;width:13.2px;height:13.2px;background:#dcdcdc;border-radius:6.6px;"></div>
<svg style="left:1208px;top:479.1px;" width="22" height="22" viewBox="0 0 22 22"><circle cx="11" cy="11" r="8" fill="#fff"/><path d="M6 10 L10.3 6.8 V9 C13.6 9 15.6 10.8 15.3 13.8 C14.4 11.9 12.8 11.4 10.3 11.5 V13.4 Z" fill="#333"/></svg>
<svg style="left:1236px;top:479.1px;" width="22" height="22" viewBox="0 0 22 22"><circle cx="11" cy="11" r="8" fill="#6a6a6a"/><path d="M16 10 L11.7 6.8 V9 C8.4 9 6.4 10.8 6.7 13.8 C7.6 11.9 9.2 11.4 11.7 11.5 V13.4 Z" fill="#444"/></svg>
<svg style="left:1264px;top:479.1px;" width="22" height="22" viewBox="0 0 22 22"><rect x="2.8" y="3" width="14.5" height="13.5" rx="2" fill="none" stroke="#5c5c5c" stroke-width="1.1"/><path d="M4.5 13.6 L8.3 8.2 L10.7 11.5 L12.6 9.3 L15.6 13.6 Z" fill="#666"/><circle cx="16.7" cy="16.7" r="3" fill="#333" stroke="#666" stroke-width="1"/><path d="M15.4 15.4 L18 18 M18 15.4 L15.4 18" stroke="#666" stroke-width=".9"/></svg>
<svg style="left:1292px;top:479.1px;" width="22" height="22" viewBox="0 0 22 22"><rect x="2.4" y="2.7" width="17.2" height="16.6" rx="3" fill="none" stroke="#fff" stroke-width="1.2"/><path d="M4.6 15.4 L9 8.6 L11.8 12.6 L13.8 10.2 L17.6 15.4 Z" fill="#fff"/><path d="M11.6 7.6 L12.6 6.4 L13.6 7.6" stroke="#fff" stroke-width=".9" fill="none"/></svg>
<svg style="left:1320px;top:479.1px;" width="22" height="22" viewBox="0 0 22 22"><circle cx="11" cy="11" r="8.2" fill="none" stroke="#fff" stroke-width="1.3"/><path d="M6.2 11 H15.8" stroke="#fff" stroke-width="2"/></svg>
<svg style="left:1348px;top:479.1px;" width="22" height="22" viewBox="0 0 22 22"><circle cx="10.6" cy="11" r="8" fill="none" stroke="#5e5e5e" stroke-width="1.2"/><circle cx="10.6" cy="11" r="3" fill="none" stroke="#5e5e5e" stroke-width="1.1"/><circle cx="10.6" cy="11" r=".9" fill="#5e5e5e"/><path d="M14.6 15.2 L18.2 18.8 M18.2 15.2 L14.6 18.8" stroke="#6a6a6a" stroke-width="1.4"/></svg>
<svg style="left:1376px;top:479.1px;" width="22" height="22" viewBox="0 0 22 22"><path d="M4.2 5.8 H17.8 M8.2 5.6 V3.6 H13.8 V5.6" stroke="#eee" stroke-width="1.3" fill="none"/><path d="M5.6 7.3 L6.5 19.3 H15.5 L16.4 7.3 Z" fill="none" stroke="#eee" stroke-width="1.3"/><path d="M8.7 9 V17.3 M11 9 V17.3 M13.3 9 V17.3" stroke="#eee" stroke-width="1.1"/></svg>
<div style="left:1411.4px;top:97.6px;width:317.6px;height:363.4px;background:#333333;border-radius:9px;"></div>
<div style="left:1411.4px;top:97.6px;width:317.6px;height:23.8px;background:#292929;border-radius:9px 9px 0 0;"></div>
<div style="left:1411.4px;top:120.8px;width:317.6px;height:1.2px;background:#686868;"></div>
<div style="left:1456px;top:98.8px;width:72px;height:23.2px;background:#333333;border-radius:8px 8px 0 0;border:1.2px solid #4c4c4c;border-bottom:none;"></div>
<div style="left:1420.4px;top:103.3px;width:14px;height:14px;background:#545454;border-radius:7px;"></div>
<svg style="left:1420.4px;top:103.3px;" width="14" height="14" viewBox="0 0 14 14"><path d="M4.06 4.06 L9.94 9.94 M9.94 4.06 L4.06 9.94" stroke="#181818" stroke-width="1.3" fill="none"/></svg>
<div style="left:1442.5px;top:103.3px;width:1.8px;height:14px;background:#4d4d4d;"></div>
<div style="left:1446.4px;top:103.3px;width:1.8px;height:14px;background:#4d4d4d;"></div>
<svg style="left:1460.2px;top:104.3px;" width="8" height="12" viewBox="0 0 8 12"><path d="M1.3 4.6 L4 1.8 L6.7 4.6 M1.3 7.4 L4 10.2 L6.7 7.4" stroke="#eee" stroke-width="1.2" fill="none"/></svg>
<span class="t" style="left:1470.4px;top:105.10px;font-size:13px;line-height:13px;color:#fff;transform:scaleX(1.0622);transform-origin:0 0;">Color</span>
<div style="left:1511px;top:104.9px;width:12px;height:12px;background:#505050;border-radius:6px;"></div>
<svg style="left:1511px;top:104.9px;" width="12" height="12" viewBox="0 0 12 12"><path d="M3.48 3.48 L8.52 8.52 M8.52 3.48 L3.48 8.52" stroke="#1c1c1c" stroke-width="1.3" fill="none"/></svg>
<svg style="left:1705.8px;top:101.4px;" width="16" height="17" viewBox="0 0 16 17"><rect x="0.7" y="0.7" width="14.6" height="15.6" rx="3" fill="none" stroke="#bdbdbd" stroke-width="1.2"/><path d="M3.6 4.7 H12.4 M3.6 8.5 H12.4 M3.6 12.3 H12.4" stroke="#c4c4c4" stroke-width="1.3"/></svg>
<div style="left:1421.6px;top:151.7px;width:27.6px;height:27.6px;background:#c8c8c8;border:1px solid #e4e4e4;"></div>
<div style="left:1434px;top:138.4px;width:28.5px;height:28.2px;background:#fff;"></div>
<svg style="left:1434px;top:138.4px;" width="28.5" height="28.2" viewBox="0 0 28.5 28.2"><path d="M1 27.2 L27.5 1" stroke="#f01020" stroke-width="1.1"/><rect x="7.6" y="7.6" width="13.7" height="13.3" fill="#333"/></svg>
<span class="t" style="left:1469.3px;top:152.80px;font-size:13px;line-height:13px;color:#fff;transform:scaleX(0.8901);transform-origin:0 0;">G</span>
<div style="left:1487.8px;top:155.2px;width:177.5px;height:6px;border-radius:3px;background:linear-gradient(90deg,#fff,#000);"></div>
<div style="left:1659.4px;top:151.6px;width:13.2px;height:13.2px;background:#dcdcdc;border-radius:6.6px;"></div>
<div style="left:1677.4px;top:147.5px;width:41.3px;height:21.2px;background:#222222;"></div>
<span class="t" style="left:1681.5px;top:152.80px;font-size:13px;line-height:13px;color:#fff;transform:scaleX(1.1066);transform-origin:0 0;">100.0</span>
<span class="t" style="left:1519.2px;top:188.00px;font-size:13px;line-height:13px;color:#fff;transform:scaleX(1.0295);transform-origin:0 0;">Hex</span>
<div style="left:1548.7px;top:183.1px;width:80px;height:19.3px;background:#222222;"></div>
<span class="t" style="left:1552.3px;top:188.00px;font-size:13px;line-height:13px;color:#fff;transform:scaleX(1.1361);transform-origin:0 0;">#000000</span>
<svg style="left:1635px;top:183px;" width="17" height="19" viewBox="0 0 17 19"><rect x="1.2" y="1.5" width="6.2" height="6.2" fill="#fff"/><rect x="9.6" y="10.4" width="5.4" height="6.4" fill="#555" stroke="#aaa" stroke-width=".8"/><path d="M3.6 9.4 Q3.8 13.4 7.4 13.6 M9.2 3.6 Q13 3.6 13.2 8" stroke="#ddd" stroke-width="1.1" fill="none"/><path d="M5.8 12 L8.2 13.7 L5.8 15.4 Z M11.4 6.6 L13.2 9 L15 6.6 Z" fill="#ddd"/></svg>
<div style="left:1660.4px;top:183.9px;width:17px;height:18.5px;background:#fff;"></div>
<svg style="left:1660.4px;top:183.9px;" width="17" height="18.5" viewBox="0 0 17 18.5"><path d="M0.6 17.9 L16.4 0.6" stroke="#f01020" stroke-width="1.1"/></svg>
<div style="left:1679.6px;top:183.5px;width:18.6px;height:19.3px;background:#000;border-radius:1px;border:1px solid #555;"></div>
<div style="left:1700px;top:183.9px;width:18px;height:18.5px;background:#fff;"></div>
<div style="left:1467.7px;top:214.1px;width:205.4px;height:205.4px;border-radius:102.7px;background:conic-gradient(from 90deg,#ff0000,#ff00ff 16.67%,#0000ff 33.33%,#00ffff 50%,#00ff00 66.67%,#ffff00 83.33%,#ff0000);"></div>
<div style="left:1487.9px;top:234.3px;width:165px;height:165px;background:#333333;border-radius:82.5px;"></div>
<div style="left:1518.5px;top:264.9px;width:104.8px;height:104.2px;background:linear-gradient(0deg,#000,rgba(0,0,0,.62) 40%,rgba(0,0,0,.33) 66%,rgba(0,0,0,0)),linear-gradient(90deg,#fff 0%,#ff9ea4 25%,#fa5c66 50%,#f42634 75%,#ee0410 88%,#ec0000 100%);"></div>
<div style="left:1657.4px;top:314.2px;width:8px;height:8px;background:#f00018;border:1px solid #fff;outline:1px solid #222;outline-offset:-2.4px;"></div>
<div style="left:1514.6px;top:365.6px;width:8px;height:8px;background:#111;border:1px solid #ddd;outline:1px solid #333;outline-offset:-2.4px;"></div>
<div class="clip" style="left:1421.5px;top:430px;width:60px;height:20px;">
<span class="t" style="left:-2.3px;top:3.70px;font-size:13px;line-height:13px;color:#fff;transform:scaleX(1.0528);transform-origin:0 0;">Opacity</span>
</div>
<div style="left:1473.8px;top:436.5px;width:180px;height:5px;background:#242424;border-radius:2.5px;"></div>
<div style="left:1647px;top:432.4px;width:13.2px;height:13.2px;background:#dcdcdc;border-radius:6.6px;"></div>
<div style="left:1663.8px;top:429.5px;width:55px;height:19px;background:#222222;"></div>
<span class="t" style="left:1668px;top:433.70px;font-size:13px;line-height:13px;color:#fff;transform:scaleX(1.0433);transform-origin:0 0;">100.0%</span>
<div style="left:1411.4px;top:463.8px;width:317.6px;height:301.8px;background:#333333;border-radius:9px;"></div>
<div style="left:1411.4px;top:463.8px;width:317.6px;height:24px;background:#292929;border-radius:9px 9px 0 0;"></div>
<div style="left:1411.4px;top:487.2px;width:317.6px;height:1.2px;background:#686868;"></div>
<div style="left:1455.9px;top:465px;width:78.2px;height:23.4px;background:#333333;border-radius:8px 8px 0 0;border:1.2px solid #4c4c4c;border-bottom:none;"></div>
<div style="left:1420.4px;top:469.3px;width:14px;height:14px;background:#545454;border-radius:7px;"></div>
<svg style="left:1420.4px;top:469.3px;" width="14" height="14" viewBox="0 0 14 14"><path d="M4.06 4.06 L9.94 9.94 M9.94 4.06 L4.06 9.94" stroke="#181818" stroke-width="1.3" fill="none"/></svg>
<div style="left:1442.5px;top:469.3px;width:1.8px;height:14px;background:#4d4d4d;"></div>
<div style="left:1446.4px;top:469.3px;width:1.8px;height:14px;background:#4d4d4d;"></div>
<span class="t" style="left:1470px;top:470.30px;font-size:13px;line-height:13px;color:#fff;transform:scaleX(1.0123);transform-origin:0 0;">Layers</span>
<div style="left:1517.3px;top:470.9px;width:12px;height:12px;background:#505050;border-radius:6px;"></div>
<svg style="left:1517.3px;top:470.9px;" width="12" height="12" viewBox="0 0 12 12"><path d="M3.48 3.48 L8.52 8.52 M8.52 3.48 L3.48 8.52" stroke="#1c1c1c" stroke-width="1.3" fill="none"/></svg>
<svg style="left:1706px;top:467.8px;" width="16" height="17" viewBox="0 0 16 17"><rect x="0.7" y="0.7" width="14.6" height="15.6" rx="3" fill="none" stroke="#bdbdbd" stroke-width="1.2"/><path d="M3.6 4.7 H12.4 M3.6 8.5 H12.4 M3.6 12.3 H12.4" stroke="#c4c4c4" stroke-width="1.3"/></svg>
<div style="left:1422.4px;top:502.6px;width:7.2px;height:17.4px;background:#000;"></div>
<svg style="left:1433px;top:504px;" width="12" height="15" viewBox="0 0 12 15"><path d="M1.8 2.6 L9.8 7.3 L1.8 12 Z" fill="#d8d8d8"/></svg>
<div style="left:1450px;top:501px;width:20.2px;height:20.3px;background:#e6e3e1;border-radius:1px;border:1px solid #bbb;"></div>
<svg style="left:1450px;top:501px;" width="20.2" height="20.3" viewBox="0 0 20.2 20.3"><circle cx="10" cy="11" r="5.6" fill="none" stroke="#222" stroke-width="1" stroke-dasharray="2.2 1.3"/><path d="M6 7 L9 5 L10 8 L13 6.5 M7 13 L10 11 L13 14 M5 10 L8 12 M12.5 9.5 L15 11.5 L13 13" stroke="#111" stroke-width="1" fill="none"/><path d="M13.5 3 L10.5 6" stroke="#333" stroke-width=".8"/></svg>
<span class="t" style="left:1474.6px;top:504.60px;font-size:13px;line-height:13px;color:#fff;transform:scaleX(1.0239);transform-origin:0 0;">Layer 1</span>
<div style="left:1618px;top:500.4px;width:22.6px;height:21.6px;background:#000;border-radius:2px;border:2px solid #4c4c4c;"></div>
<svg style="left:1618px;top:500.4px;" width="22.6" height="21.6" viewBox="0 0 22.6 21.6"><path d="M20 14 V19 H15 Z" fill="#9a9a9a"/></svg>
<svg style="left:1647px;top:503px;" width="16" height="17" viewBox="0 0 16 17"><rect x="5.8" y="8.2" width="8.6" height="7" rx="1" fill="#fff"/><path d="M8 8 V5.4 A2.5 2.5 0 0 0 3 5.4 V6.6" stroke="#fff" stroke-width="1.4" fill="none"/></svg>
<svg style="left:1664.5px;top:505px;" width="17" height="13" viewBox="0 0 17 13"><path d="M1 6.5 Q8.5 -1.2 16 6.5 Q8.5 14.2 1 6.5 Z" fill="none" stroke="#fff" stroke-width="1.2"/><circle cx="8.5" cy="6.5" r="2.5" fill="none" stroke="#fff" stroke-width="1.2"/><circle cx="8.5" cy="6.5" r=".9" fill="#fff"/></svg>
<svg style="left:1683.5px;top:504px;" width="15" height="15" viewBox="0 0 15 15"><circle cx="7.5" cy="7.5" r="6" fill="none" stroke="#fff" stroke-width="1.2"/></svg>
<div style="left:1708.3px;top:498.7px;width:10px;height:190.4px;background:#808080;border-radius:5px;"></div>
<div style="left:1421.4px;top:695.2px;width:297.5px;height:1px;background:#222;"></div>
<div style="left:1421.4px;top:702px;width:297.5px;height:18.6px;background:#222222;border-radius:9.3px;"></div>
<svg style="left:1427px;top:703.5px;" width="16" height="16" viewBox="0 0 16 16"><circle cx="9.6" cy="6.2" r="4.4" fill="none" stroke="#f0f0f0" stroke-width="1.4"/><path d="M6.4 9.4 L1.8 14" stroke="#f0f0f0" stroke-width="1.8" stroke-linecap="round"/></svg>
<svg style="left:1696.5px;top:703px;" width="17" height="17" viewBox="0 0 17 17"><circle cx="7.6" cy="7.6" r="5.7" fill="none" stroke="#f0f0f0" stroke-width="1.4"/><path d="M11.8 11.8 L15.4 15.4" stroke="#f0f0f0" stroke-width="1.8" stroke-linecap="round"/><path d="M5.5 5.5 L9.7 9.7 M9.7 5.5 L5.5 9.7" stroke="#f0f0f0" stroke-width="1.3"/></svg>
<svg style="left:1446px;top:736.5px;" width="22" height="22" viewBox="0 0 22 22"><path d="M3 7.5 H19 M3 14.5 H19" stroke="#646464" stroke-width="1.2"/><circle cx="8" cy="7.5" r="2" fill="#333" stroke="#646464" stroke-width="1.2"/><circle cx="14" cy="14.5" r="2" fill="#333" stroke="#646464" stroke-width="1.2"/></svg>
<svg style="left:1474px;top:736.5px;" width="22" height="22" viewBox="0 0 22 22"><rect x="3" y="8" width="10.5" height="10.5" fill="none" stroke="#646464" stroke-width="1.2"/><path d="M7.5 8 V3.5 H18.5 V14.5 H13.5" fill="none" stroke="#646464" stroke-width="1.2"/></svg>
<svg style="left:1502px;top:736.5px;" width="22" height="22" viewBox="0 0 22 22"><circle cx="11" cy="11" r="8.2" fill="#646464"/><rect x="6.5" y="6.5" width="6" height="6" fill="none" stroke="#333" stroke-width="1.1"/><rect x="9.5" y="9.5" width="6" height="6" fill="none" stroke="#333" stroke-width="1.1"/></svg>
<svg style="left:1530px;top:736.5px;" width="22" height="22" viewBox="0 0 22 22"><rect x="3" y="3" width="16" height="16" fill="none" stroke="#646464" stroke-width="1.2"/><rect x="6.5" y="6.5" width="9" height="9" fill="none" stroke="#646464" stroke-width="1"/><rect x="9" y="9" width="4" height="4" fill="none" stroke="#646464" stroke-width="1"/><path d="M1.6 3 H4.4 M3 1.6 V4.4 M17.6 3 H20.4 M19 1.6 V4.4 M1.6 19 H4.4 M3 17.6 V20.4 M17.6 19 H20.4 M19 17.6 V20.4" stroke="#646464" stroke-width="1"/></svg>
<svg style="left:1558px;top:736.5px;" width="22" height="22" viewBox="0 0 22 22"><path d="M6.5 2 V20 M15.5 2 V17 M2 6.5 H20 M2 15.5 H17" stroke="#646464" stroke-width="1.2"/><rect x="6.5" y="6.5" width="9" height="9" fill="none" stroke="#646464" stroke-width="1.2"/><rect x="9.5" y="9.5" width="8.5" height="8.5" fill="none" stroke="#646464" stroke-width="1"/></svg>
<svg style="left:1585.6px;top:738.5px;" width="19" height="18" viewBox="0 0 19 18"><rect x="0.7" y="0.7" width="17.4" height="16.4" rx="1.5" fill="none" stroke="#ededed" stroke-width="1.1"/></svg>
<span class="t" style="left:1589.2px;top:740.92px;font-size:12.5px;line-height:12.5px;color:#ededed;transform:scaleX(1.1314);transform-origin:0 0;font-family:'Liberation Serif',serif;font-style:italic;">fx</span>
<svg style="left:1614px;top:736.5px;" width="22" height="22" viewBox="0 0 22 22"><path d="M2.6 7.2 Q2.6 5.6 4.2 5.6 H6.6 L8 3.4 H14 L15.4 5.6 H17.8 Q19.4 5.6 19.4 7.2 V16.6 Q19.4 18.2 17.8 18.2 H4.2 Q2.6 18.2 2.6 16.6 Z" fill="#fff"/><circle cx="11" cy="11.8" r="3.6" fill="none" stroke="#333" stroke-width="1.8"/></svg>
<svg style="left:1642px;top:736.5px;" width="22" height="22" viewBox="0 0 22 22"><path d="M7 2.4 H17.6 Q19.6 2.4 19.6 4.4 V14.4 H17.6 V4.6 H7 Z" fill="#fff"/><rect x="2.4" y="6.6" width="13.4" height="13.2" rx="1.4" fill="#fff"/><path d="M9.1 9.6 V16.8 M5.5 13.2 H12.7" stroke="#333" stroke-width="1.5"/></svg>
<svg style="left:1670px;top:736.5px;" width="22" height="22" viewBox="0 0 22 22"><rect x="2.2" y="2.4" width="17.6" height="17.2" rx="3" fill="#636363"/><path d="M5.5 11.5 L11 8.6 L16.5 11.5 L11 14.4 Z M5.5 14 L11 16.9 L16.5 14" fill="#3d3d3d" stroke="#3d3d3d" stroke-width=".8"/><path d="M15.2 5.2 V8 M13.8 6.6 H16.6" stroke="#3d3d3d" stroke-width="1"/></svg>
<svg style="left:1698px;top:736.5px;" width="22" height="22" viewBox="0 0 22 22"><path d="M4.2 5.8 H17.8 M8.2 5.6 V3.6 H13.8 V5.6" stroke="#5e5e5e" stroke-width="1.3" fill="none"/><path d="M5.6 7.3 L6.5 19.3 H15.5 L16.4 7.3 Z" fill="none" stroke="#5e5e5e" stroke-width="1.3"/><path d="M8.7 9 V17.3 M11 9 V17.3 M13.3 9 V17.3" stroke="#5e5e5e" stroke-width="1.1"/></svg>
<div style="left:1411px;top:769.7px;width:318px;height:205.4px;background:#333333;border-radius:9px;"></div>
<div style="left:1411px;top:769.7px;width:318px;height:23.1px;background:#292929;border-radius:9px 9px 0 0;"></div>
<div style="left:1411px;top:792.2px;width:318px;height:1.2px;background:#686868;"></div>
<div style="left:1455.4px;top:770.9px;width:123.7px;height:22.5px;background:#333333;border-radius:8px 8px 0 0;border:1.2px solid #4c4c4c;border-bottom:none;"></div>
<div style="left:1420px;top:774.6px;width:14px;height:14px;background:#545454;border-radius:7px;"></div>
<svg style="left:1420px;top:774.6px;" width="14" height="14" viewBox="0 0 14 14"><path d="M4.06 4.06 L9.94 9.94 M9.94 4.06 L4.06 9.94" stroke="#181818" stroke-width="1.3" fill="none"/></svg>
<div style="left:1442.1px;top:774.6px;width:1.8px;height:14px;background:#4d4d4d;"></div>
<div style="left:1446px;top:774.6px;width:1.8px;height:14px;background:#4d4d4d;"></div>
<svg style="left:1459.6px;top:775.6px;" width="8" height="12" viewBox="0 0 8 12"><path d="M1.3 4.6 L4 1.8 L6.7 4.6 M1.3 7.4 L4 10.2 L6.7 7.4" stroke="#eee" stroke-width="1.2" fill="none"/></svg>
<span class="t" style="left:1470.5px;top:776.50px;font-size:13px;line-height:13px;color:#fff;transform:scaleX(1.0671);transform-origin:0 0;">Transparency</span>
<div style="left:1561.7px;top:776.2px;width:12px;height:12px;background:#505050;border-radius:6px;"></div>
<svg style="left:1561.7px;top:776.2px;" width="12" height="12" viewBox="0 0 12 12"><path d="M3.48 3.48 L8.52 8.52 M8.52 3.48 L3.48 8.52" stroke="#1c1c1c" stroke-width="1.3" fill="none"/></svg>
<div class="clip" style="left:1590px;top:774px;width:66.3px;height:18px;">
<span class="t" style="left:3.7px;top:3.40px;font-size:13px;line-height:13px;color:#aaaaaa;transform:scaleX(1.1410);transform-origin:0 0;">Appearance</span>
</div>
<div style="left:1681.2px;top:771.7px;width:17.8px;height:19.2px;background:#555;border-radius:3.5px;"></div>
<svg style="left:1681.2px;top:771.7px;" width="17.8" height="19.2" viewBox="0 0 17.8 19.2"><path d="M6.4 7 L11.6 9.8 L6.4 12.6 Z" fill="#eee"/></svg>
<svg style="left:1706.2px;top:773px;" width="16" height="17" viewBox="0 0 16 17"><rect x="0.7" y="0.7" width="14.6" height="15.6" rx="3" fill="none" stroke="#bdbdbd" stroke-width="1.2"/><path d="M3.6 4.7 H12.4 M3.6 8.5 H12.4 M3.6 12.3 H12.4" stroke="#c4c4c4" stroke-width="1.3"/></svg>
<span class="t" style="left:1426.7px;top:815.10px;font-size:13px;line-height:13px;color:#fff;transform:scaleX(1.0869);transform-origin:0 0;">Opacity</span>
<div style="left:1638.9px;top:805.5px;width:60.1px;height:19.4px;background:#222222;"></div>
<span class="t" style="left:1643.6px;top:810.30px;font-size:13px;line-height:13px;color:#fff;transform:scaleX(1.0433);transform-origin:0 0;">100.0%</span>
<span class="t" style="left:1702.6px;top:811.14px;font-size:12px;line-height:12px;color:#fff;transform:scaleX(0.9091);transform-origin:0 0;">%</span>
<div style="left:1421.4px;top:834.4px;width:287px;height:4.4px;border-radius:2.2px;background:linear-gradient(90deg,#000,#fff 92%);"></div>
<div style="left:1701.4px;top:830px;width:13.2px;height:13.2px;background:#d4d4d4;border-radius:6.6px;"></div>
<span class="t" style="left:1463.2px;top:857.70px;font-size:13px;line-height:13px;color:#fff;transform:scaleX(1.0375);transform-origin:0 0;">Blend</span>
<div style="left:1503.1px;top:853.6px;width:215.8px;height:19.4px;border-radius:5.5px;background:linear-gradient(#626262,#525252);"></div>
<span class="t" style="left:1509.4px;top:857.70px;font-size:13px;line-height:13px;color:#fff;transform:scaleX(1.0860);transform-origin:0 0;">Normal</span>
<svg style="left:1701.5px;top:859.9px;" width="13" height="7.8" viewBox="0 0 13 7.8"><path d="M1 1 L6.50 6.80 L12.00 1" stroke="#eaeaea" stroke-width="1.5" fill="none"/></svg>
<span class="t" style="left:1465.1px;top:888.00px;font-size:13px;line-height:13px;color:#fff;transform:scaleX(1.0496);transform-origin:0 0;">Mask</span>
<div style="left:1503.1px;top:883.5px;width:215.8px;height:19.4px;border-radius:5.5px;background:linear-gradient(#626262,#525252);"></div>
<span class="t" style="left:1509.4px;top:888.00px;font-size:13px;line-height:13px;color:#fff;transform:scaleX(1.0425);transform-origin:0 0;">None</span>
<svg style="left:1701.5px;top:889.9px;" width="13" height="7.8" viewBox="0 0 13 7.8"><path d="M1 1 L6.50 6.80 L12.00 1" stroke="#eaeaea" stroke-width="1.5" fill="none"/></svg>
<div style="left:1421.4px;top:914px;width:297.5px;height:1px;background:#262626;"></div>
<svg style="left:1502px;top:924px;" width="22" height="22" viewBox="0 0 22 22"><rect x="2" y="4" width="18" height="14" rx="1.5" fill="#6e6e6e" stroke="#c2c2c2" stroke-width="1.2"/><ellipse cx="11" cy="11" rx="5" ry="3.8" fill="#a8a8a8"/></svg>
<svg style="left:1530px;top:924px;" width="22" height="22" viewBox="0 0 22 22"><rect x="2" y="4" width="18" height="14" rx="1.5" fill="#222" stroke="#e8e8e8" stroke-width="1.2"/><ellipse cx="11" cy="11" rx="5.4" ry="4" fill="#fff"/></svg>
<svg style="left:1558px;top:924px;" width="22" height="22" viewBox="0 0 22 22"><path d="M2 11 Q11 2 20 11 Q11 20 2 11 Z" fill="none" stroke="#e8e8e8" stroke-width="1.3"/><circle cx="11" cy="11" r="3.6" fill="none" stroke="#e8e8e8" stroke-width="1.3"/><circle cx="11" cy="11" r="1.2" fill="#e8e8e8"/><path d="M4.5 17.8 L17.5 4.2" stroke="#e8e8e8" stroke-width="1.4"/></svg>
<svg style="left:1586px;top:924px;" width="22" height="22" viewBox="0 0 22 22"><rect x="11" y="2.6" width="4.2" height="8" rx="2" transform="rotate(45 13 6.6)" fill="none" stroke="#e8e8e8" stroke-width="1.1"/><rect x="5.5" y="11.5" width="4.4" height="8" rx="2" transform="rotate(15 7.7 15.5)" fill="none" stroke="#e8e8e8" stroke-width="1.1"/><path d="M4.4 4.6 L7.2 7.2 M8.3 2.6 L9 6.2 M3 8.6 L6.2 9" stroke="#e8e8e8" stroke-width="1"/></svg>
<svg style="left:1614px;top:924px;" width="22" height="22" viewBox="0 0 22 22"><rect x="3" y="5" width="16" height="12.5" fill="#4a4a4a"/><circle cx="9.2" cy="10.4" r="3.9" fill="#8c8c8c"/><circle cx="12.6" cy="12.4" r="3.9" fill="#b4b4b4" fill-opacity=".75"/></svg>
<svg style="left:1642px;top:924px;" width="22" height="22" viewBox="0 0 22 22"><circle cx="11" cy="11" r="5.7" fill="none" stroke="#e8e8e8" stroke-width="1.3"/><path d="M11 5.3 A5.7 5.7 0 0 0 11 16.7 Z" fill="#e8e8e8"/><circle cx="19.60" cy="11.00" r="1.05" fill="#e8e8e8"/><circle cx="17.08" cy="17.08" r="1.05" fill="#e8e8e8"/><circle cx="11.00" cy="19.60" r="1.05" fill="#e8e8e8"/><circle cx="4.92" cy="17.08" r="1.05" fill="#e8e8e8"/><circle cx="2.40" cy="11.00" r="1.05" fill="#e8e8e8"/><circle cx="4.92" cy="4.92" r="1.05" fill="#e8e8e8"/><circle cx="11.00" cy="2.40" r="1.05" fill="#e8e8e8"/><circle cx="17.08" cy="4.92" r="1.05" fill="#e8e8e8"/></svg>
<svg style="left:1670px;top:924px;" width="22" height="22" viewBox="0 0 22 22"><path d="M8 3 L13.6 14.6 H2.4 Z" fill="none" stroke="#9a9a9a" stroke-width="1.1"/><rect x="10" y="11" width="6.4" height="6.4" fill="#333" stroke="#9a9a9a" stroke-width="1.1"/><circle cx="17" cy="16.6" r="2.6" fill="#333" stroke="#9a9a9a" stroke-width="1.1"/></svg>
<svg style="left:1698px;top:924px;" width="22" height="22" viewBox="0 0 22 22"><circle cx="11" cy="11" r="8.4" fill="none" stroke="#5a5a5a" stroke-width="1.2"/><path d="M7.5 7.5 L14.5 14.5 M14.5 7.5 L7.5 14.5" stroke="#5a5a5a" stroke-width="1.3"/></svg>
</body></html>
